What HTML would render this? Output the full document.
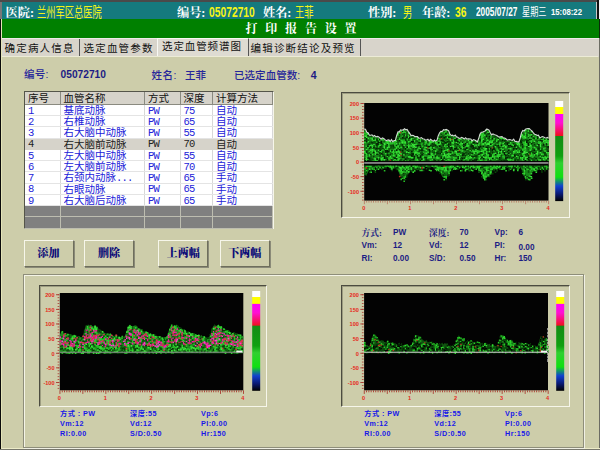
<!DOCTYPE html><html lang="zh"><head><meta charset="utf-8"><title>打印报告设置</title><style>
*{margin:0;padding:0;box-sizing:border-box}
html,body{width:600px;height:450px;overflow:hidden;background:#cdcdaa;}
body{position:relative;font-family:"Liberation Sans","Noto Sans CJK SC",sans-serif;font-size:10.5px;line-height:1}
.a{position:absolute;white-space:nowrap}
.song{font-family:"Liberation Serif","Noto Serif CJK SC",serif}
.sans{font-family:"Liberation Sans","Noto Sans CJK SC",sans-serif}
.w{color:#fff} .y{color:#f4f416}
.tb{font-weight:bold;font-size:12.2px;top:5.5px;height:14px;line-height:14px}
.tab{top:40px;height:17px;line-height:16px;font-size:10.5px;color:#111;letter-spacing:1.2px}
.sep{position:absolute;top:39px;width:1px;height:17px;background:#555}
.nv{color:#1c1c84;font-weight:bold;font-size:8.2px}
.nv .song,.nv.song{font-weight:700;font-size:8.7px}
.bl{color:#1818e8;font-weight:bold;font-size:7.2px;letter-spacing:.45px}
.btn{position:absolute;top:239.6px;height:27px;width:50px;background:#cdcdaa;border:1px solid;border-color:#f6f6ea #6e6e5c #6e6e5c #f6f6ea;box-shadow:1px 1px 0 #8a8a78;color:#0c0c78;font-weight:900;font-size:11px;text-align:center;line-height:25.6px}
.sunk{position:absolute;border:1px solid;border-color:#4c4c40 #f6f6ea #f6f6ea #4c4c40;background:#cdcdaa;box-shadow:inset 1px 1px 0 rgba(70,70,55,.35)}
table{border-collapse:collapse;position:absolute;left:25px;top:91.75px;table-layout:fixed;width:247px;font-size:10.5px}
td{height:11.25px;line-height:10px;padding:0 0 0 3px;border-right:1px solid #d8d8d8;border-bottom:1px solid #e4e4e4;color:#2222d8;background:#fff;overflow:hidden;white-space:nowrap}
.c{height:10.1px;line-height:11.4px;overflow:hidden}
span.m{font-family:"Liberation Mono","Noto Sans CJK SC",monospace;font-size:10.5px;letter-spacing:-0.8px;position:relative;top:-0.2px}
tr.h td{background:#d6d3ca;color:#111;height:12.5px;border-right:1px solid #8a8a80;border-bottom:1px solid #8a8a80}
tr.s td{background:#d6d3ca;color:#222;border-color:#d6d3ca}
tr.e td{background:#808080;border-color:#bdbdb0}
</style></head><body><div class="a" style="left:0;top:0;width:600px;height:2.4px;background:#4a4a4a"></div>
<div class="a" style="left:2.3px;top:2.4px;width:593.5px;height:16.8px;background:#157a7e"></div>
<div class="a" style="left:0;top:2.4px;width:2.3px;height:16.8px;background:#777"></div>
<div class="a" style="left:595.8px;top:2.4px;width:1.6px;height:16.8px;background:#c8c8c8"></div>
<div class="a" style="left:0;top:19.2px;width:600px;height:18.5px;background:#008000"></div>
<div class="a" style="left:0;top:37.7px;width:600px;height:19px;background:#d8d4cb;border-top:1.6px solid #eeeaea"></div>
<div class="a" style="left:0;top:19.2px;width:1.1px;height:431px;background:#0a0a0a"></div>
<div class="a" style="left:1.1px;top:19.2px;width:1px;height:431px;background:#e4e4b8"></div>
<div class="a" style="left:597.4px;top:0;width:1.7px;height:19.2px;background:#111"></div>
<div class="a" style="left:599.1px;top:0;width:1px;height:19.2px;background:#f4f4f4"></div>
<div class="a" style="left:598.7px;top:19.2px;width:1.3px;height:18.5px;background:#0a2a0a"></div>
<div class="a" style="left:598.6px;top:37.7px;width:.6px;height:19px;background:#f4f4f4"></div>
<div class="a" style="left:599.1px;top:37.7px;width:1px;height:413px;background:#6c6c64"></div>
<div class="a" style="left:2px;top:448px;width:598px;height:1px;background:#ecebc8"></div>
<div class="a" style="left:0;top:449px;width:600px;height:1px;background:#77776c"></div>
<div class="a tb song w" style="left:5.6px;">医院:</div>
<div class="a tb y sans" style="left:37px;transform:scaleX(.662);transform-origin:0 50%;font-weight:normal;font-size:14px;top:5px;">兰州军区总医院</div>
<div class="a tb song w" style="left:177px;">编号:</div>
<div class="a tb y" style="left:209px;transform:scaleX(.71);transform-origin:0 50%;font-size:14.5px;top:4.6px">05072710</div>
<div class="a tb song w" style="left:263px;">姓名:</div>
<div class="a tb y sans" style="left:294.5px;transform:scaleX(.662);transform-origin:0 50%;font-weight:normal;font-size:14px;top:5px;">王菲</div>
<div class="a tb song w" style="left:368px;">性别:</div>
<div class="a tb y sans" style="left:402.5px;transform:scaleX(.662);transform-origin:0 50%;font-weight:normal;font-size:14px;top:5px;">男</div>
<div class="a tb song w" style="left:422px;">年龄:</div>
<div class="a tb y" style="left:455px;transform:scaleX(.71);transform-origin:0 50%;font-size:14.5px;top:4.6px">36</div>
<div class="a tb w" style="left:476px;font-size:12px;transform:scaleX(.69);transform-origin:0 50%;top:5px;">2005/07/27</div>
<div class="a tb w sans" style="left:521.5px;font-size:11px;font-weight:400;transform:scaleX(.74);transform-origin:0 50%;top:5.2px;">星期三</div>
<div class="a tb w" style="left:551.3px;font-size:8.6px;top:5px;transform:scaleX(.9);transform-origin:0 50%">15:08:22</div>
<div class="a song w" style="left:245.5px;top:21.5px;font-weight:bold;font-size:12px;height:14px;line-height:14px;letter-spacing:2.4px">打 印 报 告 设 置</div>
<div class="a tab" style="left:4.5px;">确定病人信息</div>
<div class="sep" style="left:79px"></div>
<div class="a tab" style="left:83.5px;">选定血管参数</div>
<div class="a" style="left:157px;top:38px;width:91.5px;height:19px;background:#dedbd2;border-left:1px solid #f8f8f4;border-top:1px solid #f8f8f4;border-right:1.3px solid #555"></div>
<div class="a tab" style="left:162px;top:38px;letter-spacing:.9px">选定血管频谱图</div>
<div class="a tab" style="left:250.5px;">编辑诊断结论及预览</div>
<div class="sep" style="left:360px"></div>
<div class="a" style="left:2px;top:56px;width:596px;height:1.2px;background:#ecebd6"></div>
<div class="a nv" style="left:24px;top:69px;font-weight:500;color:#26269a;font-size:10.5px;letter-spacing:.3px">编号:</div>
<div class="a nv" style="left:60.6px;top:69.5px;font-size:10.2px">05072710</div>
<div class="a nv" style="left:151.5px;top:69.5px;font-weight:500;color:#26269a;font-size:10.5px;letter-spacing:.5px">姓名:</div>
<div class="a nv" style="left:185px;top:69.5px;font-weight:500;color:#26269a;font-size:10.5px">王菲</div>
<div class="a nv" style="left:234px;top:69.5px;font-weight:500;color:#26269a;font-size:10.5px;letter-spacing:.05px">已选定血管数:</div>
<div class="a nv" style="left:310.8px;top:70px;font-size:10.5px">4</div>
<div class="sunk" style="left:24px;top:91px;width:249.5px;height:137.5px;background:#fff;border-color:#55554a #f6f6ea #f6f6ea #55554a"></div>
<table><colgroup><col style="width:35px"><col style="width:84.5px"><col style="width:35.5px"><col style="width:32.5px"><col style="width:59.5px"></colgroup><tr class="h"><td>序号</td><td>血管名称</td><td>方式</td><td>深度</td><td>计算方法</td></tr><tr><td><div class="c"><span class="m">1</span></div></td><td><div class="c">基底动脉</div></td><td><div class="c"><span class="m">PW</span></div></td><td><div class="c"><span class="m">75</span></div></td><td><div class="c">自动</div></td></tr><tr><td><div class="c"><span class="m">2</span></div></td><td><div class="c">右椎动脉</div></td><td><div class="c"><span class="m">PW</span></div></td><td><div class="c"><span class="m">65</span></div></td><td><div class="c">自动</div></td></tr><tr><td><div class="c"><span class="m">3</span></div></td><td><div class="c">右大脑中动脉</div></td><td><div class="c"><span class="m">PW</span></div></td><td><div class="c"><span class="m">55</span></div></td><td><div class="c">自动</div></td></tr><tr class="s"><td><div class="c"><span class="m">4</span></div></td><td><div class="c">右大脑前动脉</div></td><td><div class="c"><span class="m">PW</span></div></td><td><div class="c"><span class="m">70</span></div></td><td><div class="c">自动</div></td></tr><tr><td><div class="c"><span class="m">5</span></div></td><td><div class="c">左大脑中动脉</div></td><td><div class="c"><span class="m">PW</span></div></td><td><div class="c"><span class="m">55</span></div></td><td><div class="c">自动</div></td></tr><tr><td><div class="c"><span class="m">6</span></div></td><td><div class="c">左大脑前动脉</div></td><td><div class="c"><span class="m">PW</span></div></td><td><div class="c"><span class="m">70</span></div></td><td><div class="c">自动</div></td></tr><tr><td><div class="c"><span class="m">7</span></div></td><td><div class="c">右颈内动脉<span class="m">...</span></div></td><td><div class="c"><span class="m">PW</span></div></td><td><div class="c"><span class="m">65</span></div></td><td><div class="c">手动</div></td></tr><tr><td><div class="c"><span class="m">8</span></div></td><td><div class="c">右眼动脉</div></td><td><div class="c"><span class="m">PW</span></div></td><td><div class="c"><span class="m">65</span></div></td><td><div class="c">手动</div></td></tr><tr><td><div class="c"><span class="m">9</span></div></td><td><div class="c">右大脑后动脉</div></td><td><div class="c"><span class="m">PW</span></div></td><td><div class="c"><span class="m">65</span></div></td><td><div class="c">手动</div></td></tr><tr class="e"><td></td><td></td><td></td><td></td><td></td></tr><tr class="e"><td></td><td></td><td></td><td></td><td></td></tr></table>
<div class="btn song" style="left:23.5px">添加</div>
<div class="btn song" style="left:84px">删除</div>
<div class="btn song" style="left:158.2px">上两幅</div>
<div class="btn song" style="left:219.7px">下两幅</div>
<div class="a" style="left:23.2px;top:274px;width:560.8px;height:174.2px;border:1px solid #8e8e7a;box-shadow:inset 1px 1px 0 #f4f4e6, 1px 1px 0 #f0f0e4"></div>
<div class="sunk" style="left:341px;top:92px;width:228.7px;height:125.6px"></div><svg class="a" style="left:341px;top:92px" width="230" height="127" viewBox="341 92 230 127"><rect x="364.2" y="103" width="184.3" height="97.6" fill="#030303"/><polygon points="364.2,162 364.2,129.7 365.5,129.8 366.8,132.9 368.1,133.3 369.4,135.8 370.7,135.8 372.0,135.4 373.3,136.9 374.6,136.1 375.9,137.5 377.2,137.0 378.5,137.4 379.8,138.5 381.1,139.8 382.4,138.5 383.7,139.0 385.0,140.3 386.3,141.3 387.6,140.7 388.9,140.5 390.2,142.1 391.5,140.1 392.8,142.3 394.1,141.1 395.4,141.0 396.7,136.0 398.0,132.5 399.3,132.5 400.6,130.4 401.9,130.8 403.2,130.5 404.5,129.4 405.8,130.4 407.1,130.0 408.4,132.2 409.7,134.0 411.0,136.2 412.3,136.0 413.6,136.1 414.9,137.2 416.2,137.2 417.5,137.2 418.8,138.8 420.1,138.9 421.4,138.2 422.7,139.3 424.0,139.5 425.3,140.6 426.6,140.6 427.9,139.8 429.2,141.7 430.5,139.9 431.8,140.8 433.1,141.9 434.4,140.6 435.7,141.7 437.0,140.8 438.3,136.3 439.6,133.4 440.9,131.9 442.2,132.1 443.5,130.2 444.8,130.6 446.1,130.0 447.4,130.7 448.7,131.5 450.0,134.7 451.3,136.1 452.6,135.8 453.9,136.7 455.2,135.6 456.5,137.5 457.8,137.8 459.1,139.0 460.4,138.9 461.7,138.0 463.0,138.6 464.3,139.6 465.6,138.3 466.9,139.7 468.2,139.3 469.5,139.5 470.8,139.6 472.1,141.5 473.4,140.2 474.7,140.7 476.0,141.3 477.3,142.6 478.6,139.4 479.9,134.9 481.2,132.9 482.5,132.8 483.8,132.1 485.1,131.7 486.4,129.8 487.7,130.0 489.0,130.7 490.3,133.3 491.6,135.5 492.9,134.6 494.2,135.2 495.5,135.7 496.8,136.1 498.1,137.1 499.4,137.7 500.7,137.3 502.0,137.1 503.3,138.4 504.6,138.7 505.9,139.4 507.2,140.7 508.5,140.3 509.8,140.2 511.1,140.7 512.4,141.1 513.7,139.8 515.0,142.1 516.3,142.0 517.6,142.5 518.9,142.5 520.2,138.6 521.5,133.4 522.8,131.1 524.1,131.7 525.4,129.7 526.7,129.3 528.0,129.1 529.3,129.2 530.6,130.4 531.9,131.5 533.2,133.2 534.5,134.8 535.8,135.1 537.1,136.1 538.4,135.7 539.7,138.1 541.0,137.8 542.3,137.1 543.6,137.7 544.9,138.3 546.2,138.6 547.5,138.0 548.5,139.0 548.5,162" fill="#1a841a"/><polygon points="364.2,165.3 364.2,175.0 365.5,174.8 366.8,174.4 368.1,172.0 369.4,169.0 370.7,169.6 372.0,169.4 373.3,168.6 374.6,168.5 375.9,167.1 377.2,167.7 378.5,168.6 379.8,167.4 381.1,166.6 382.4,168.6 383.7,167.0 385.0,167.7 386.3,167.3 387.6,166.2 388.9,167.8 390.2,168.3 391.5,168.2 392.8,166.7 394.1,167.0 395.4,167.6 396.7,169.0 398.0,170.4 399.3,173.6 400.6,177.0 401.9,176.4 403.2,177.7 404.5,178.7 405.8,177.3 407.1,174.5 408.4,173.6 409.7,171.7 411.0,168.4 412.3,169.7 413.6,167.5 414.9,169.2 416.2,169.0 417.5,167.8 418.8,168.9 420.1,167.2 421.4,166.9 422.7,167.6 424.0,166.3 425.3,166.7 426.6,167.1 427.9,166.7 429.2,166.9 430.5,167.4 431.8,166.3 433.1,167.4 434.4,167.8 435.7,167.6 437.0,166.3 438.3,169.4 439.6,172.0 440.9,173.8 442.2,176.6 443.5,177.8 444.8,178.0 446.1,177.3 447.4,175.0 448.7,174.2 450.0,171.5 451.3,169.4 452.6,168.1 453.9,169.0 455.2,168.7 456.5,168.2 457.8,168.3 459.1,167.4 460.4,167.8 461.7,167.1 463.0,166.6 464.3,168.6 465.6,168.1 466.9,168.1 468.2,168.2 469.5,167.2 470.8,166.7 472.1,166.5 473.4,167.8 474.7,168.0 476.0,168.3 477.3,166.9 478.6,168.5 479.9,169.8 481.2,173.0 482.5,174.3 483.8,177.0 485.1,177.4 486.4,178.4 487.7,176.5 489.0,177.2 490.3,174.6 491.6,173.1 492.9,168.9 494.2,169.8 495.5,169.6 496.8,168.2 498.1,168.1 499.4,168.8 500.7,167.3 502.0,167.0 503.3,168.1 504.6,168.4 505.9,167.6 507.2,166.6 508.5,167.3 509.8,167.5 511.1,167.7 512.4,167.8 513.7,167.8 515.0,168.5 516.3,166.2 517.6,168.1 518.9,166.9 520.2,167.1 521.5,169.5 522.8,172.0 524.1,174.3 525.4,176.4 526.7,178.0 528.0,177.8 529.3,176.2 530.6,174.7 531.9,172.7 533.2,171.8 534.5,168.5 535.8,168.9 537.1,170.0 538.4,169.5 539.7,168.9 541.0,167.9 542.3,167.0 543.6,167.5 544.9,167.7 546.2,167.9 547.5,168.2 548.5,168.0 548.5,165.3" fill="#1a8a1a"/><path fill="#2ad02a" d="M364.1 132.5h1.6v1.6h-1.6zM365.9 135.1h1.6v1.6h-1.6zM365.8 153.1h1.6v1.6h-1.6zM365.9 156.0h1.6v1.6h-1.6zM365.9 160.2h1.6v1.6h-1.6zM368.8 146.0h1.6v1.6h-1.6zM370.3 137.2h1.6v1.6h-1.6zM372.9 139.8h1.6v1.6h-1.6zM373.4 148.8h1.6v1.6h-1.6zM374.6 139.7h1.6v1.6h-1.6zM376.2 141.5h1.6v1.6h-1.6zM378.0 138.7h1.6v1.6h-1.6zM377.8 146.1h1.6v1.6h-1.6zM381.0 151.5h1.6v1.6h-1.6zM385.5 140.9h1.6v1.6h-1.6zM386.9 156.0h1.6v1.6h-1.6zM389.5 156.9h1.6v1.6h-1.6zM391.4 151.1h1.6v1.6h-1.6zM391.3 154.0h1.6v1.6h-1.6zM390.9 157.4h1.6v1.6h-1.6zM392.8 142.0h1.6v1.6h-1.6zM392.9 149.3h1.6v1.6h-1.6zM394.0 145.4h1.6v1.6h-1.6zM397.3 149.4h1.6v1.6h-1.6zM397.2 155.2h1.6v1.6h-1.6zM397.0 156.7h1.6v1.6h-1.6zM398.8 142.8h1.6v1.6h-1.6zM398.8 158.0h1.6v1.6h-1.6zM400.3 133.5h1.6v1.6h-1.6zM401.8 135.4h1.6v1.6h-1.6zM403.2 140.6h1.6v1.6h-1.6zM403.2 158.6h1.6v1.6h-1.6zM404.8 131.5h1.6v1.6h-1.6zM404.8 134.4h1.6v1.6h-1.6zM404.5 160.2h1.6v1.6h-1.6zM406.2 138.9h1.6v1.6h-1.6zM407.4 144.0h1.6v1.6h-1.6zM408.9 155.6h1.6v1.6h-1.6zM412.2 137.7h1.6v1.6h-1.6zM412.3 146.6h1.6v1.6h-1.6zM413.5 141.0h1.6v1.6h-1.6zM413.8 151.8h1.6v1.6h-1.6zM415.1 150.8h1.6v1.6h-1.6zM415.4 155.1h1.6v1.6h-1.6zM415.3 159.4h1.6v1.6h-1.6zM416.6 137.1h1.6v1.6h-1.6zM416.6 152.1h1.6v1.6h-1.6zM416.9 158.5h1.6v1.6h-1.6zM421.3 156.5h1.6v1.6h-1.6zM420.9 161.3h1.6v1.6h-1.6zM422.5 151.6h1.6v1.6h-1.6zM424.2 155.4h1.6v1.6h-1.6zM428.9 141.7h1.6v1.6h-1.6zM428.8 143.3h1.6v1.6h-1.6zM428.5 154.8h1.6v1.6h-1.6zM430.1 147.5h1.6v1.6h-1.6zM430.0 159.7h1.6v1.6h-1.6zM431.9 141.2h1.6v1.6h-1.6zM433.4 141.2h1.6v1.6h-1.6zM434.6 161.1h1.6v1.6h-1.6zM436.3 148.6h1.6v1.6h-1.6zM438.0 143.5h1.6v1.6h-1.6zM442.5 154.7h1.6v1.6h-1.6zM442.2 156.6h1.6v1.6h-1.6zM443.5 145.3h1.6v1.6h-1.6zM445.4 129.9h1.6v1.6h-1.6zM445.2 134.6h1.6v1.6h-1.6zM445.1 146.6h1.6v1.6h-1.6zM445.0 149.7h1.6v1.6h-1.6zM445.4 159.9h1.6v1.6h-1.6zM446.8 142.9h1.6v1.6h-1.6zM446.6 150.4h1.6v1.6h-1.6zM451.2 152.4h1.6v1.6h-1.6zM451.0 160.2h1.6v1.6h-1.6zM452.7 147.1h1.6v1.6h-1.6zM452.9 157.0h1.6v1.6h-1.6zM452.8 160.3h1.6v1.6h-1.6zM454.1 159.7h1.6v1.6h-1.6zM455.8 152.6h1.6v1.6h-1.6zM455.7 154.2h1.6v1.6h-1.6zM457.3 147.0h1.6v1.6h-1.6zM457.4 149.7h1.6v1.6h-1.6zM458.6 139.2h1.6v1.6h-1.6zM458.8 143.7h1.6v1.6h-1.6zM458.5 148.1h1.6v1.6h-1.6zM460.1 141.3h1.6v1.6h-1.6zM460.0 144.4h1.6v1.6h-1.6zM463.4 158.8h1.6v1.6h-1.6zM463.0 160.4h1.6v1.6h-1.6zM464.8 141.5h1.6v1.6h-1.6zM466.5 148.8h1.6v1.6h-1.6zM467.9 154.5h1.6v1.6h-1.6zM472.0 149.5h1.6v1.6h-1.6zM475.2 153.4h1.6v1.6h-1.6zM478.3 150.4h1.6v1.6h-1.6zM478.5 151.9h1.6v1.6h-1.6zM479.6 156.7h1.6v1.6h-1.6zM481.0 132.7h1.6v1.6h-1.6zM481.1 159.8h1.6v1.6h-1.6zM482.8 147.2h1.6v1.6h-1.6zM482.7 152.1h1.6v1.6h-1.6zM484.2 149.6h1.6v1.6h-1.6zM484.5 160.2h1.6v1.6h-1.6zM485.6 137.4h1.6v1.6h-1.6zM485.8 159.5h1.6v1.6h-1.6zM487.5 157.1h1.6v1.6h-1.6zM488.8 148.0h1.6v1.6h-1.6zM490.2 135.7h1.6v1.6h-1.6zM490.0 140.2h1.6v1.6h-1.6zM490.2 156.9h1.6v1.6h-1.6zM492.0 139.7h1.6v1.6h-1.6zM493.3 155.9h1.6v1.6h-1.6zM493.5 157.3h1.6v1.6h-1.6zM494.5 155.2h1.6v1.6h-1.6zM497.5 149.4h1.6v1.6h-1.6zM499.2 137.5h1.6v1.6h-1.6zM499.1 155.5h1.6v1.6h-1.6zM500.6 147.9h1.6v1.6h-1.6zM502.2 155.9h1.6v1.6h-1.6zM508.1 147.6h1.6v1.6h-1.6zM509.7 152.7h1.6v1.6h-1.6zM512.5 154.9h1.6v1.6h-1.6zM515.8 142.2h1.6v1.6h-1.6zM515.6 149.8h1.6v1.6h-1.6zM517.1 157.4h1.6v1.6h-1.6zM518.5 145.4h1.6v1.6h-1.6zM519.9 158.1h1.6v1.6h-1.6zM521.7 152.8h1.6v1.6h-1.6zM523.2 148.1h1.6v1.6h-1.6zM524.6 134.3h1.6v1.6h-1.6zM525.0 140.4h1.6v1.6h-1.6zM524.8 143.0h1.6v1.6h-1.6zM524.5 144.5h1.6v1.6h-1.6zM524.8 146.4h1.6v1.6h-1.6zM527.9 133.7h1.6v1.6h-1.6zM527.6 153.0h1.6v1.6h-1.6zM529.3 140.2h1.6v1.6h-1.6zM529.3 143.3h1.6v1.6h-1.6zM529.1 146.2h1.6v1.6h-1.6zM530.5 141.8h1.6v1.6h-1.6zM530.7 147.8h1.6v1.6h-1.6zM530.8 152.2h1.6v1.6h-1.6zM530.9 153.6h1.6v1.6h-1.6zM531.0 155.0h1.6v1.6h-1.6zM532.1 139.0h1.6v1.6h-1.6zM533.6 138.9h1.6v1.6h-1.6zM536.5 153.9h1.6v1.6h-1.6zM539.9 142.7h1.6v1.6h-1.6zM539.6 148.5h1.6v1.6h-1.6zM539.9 160.3h1.6v1.6h-1.6zM541.0 138.7h1.6v1.6h-1.6zM542.8 148.0h1.6v1.6h-1.6zM542.6 157.0h1.6v1.6h-1.6zM545.8 156.7h1.6v1.6h-1.6zM547.5 139.6h1.6v1.6h-1.6zM547.2 144.4h1.6v1.6h-1.6zM546.9 156.2h1.6v1.6h-1.6zM365.4 169.7h1.6v1.6h-1.6zM368.4 165.4h1.6v1.6h-1.6zM373.3 168.4h1.6v1.6h-1.6zM376.2 167.0h1.6v1.6h-1.6zM377.8 165.3h1.6v1.6h-1.6zM382.4 166.8h1.6v1.6h-1.6zM386.6 165.0h1.6v1.6h-1.6zM400.1 171.1h1.6v1.6h-1.6zM403.4 177.6h1.6v1.6h-1.6zM405.0 171.0h1.6v1.6h-1.6zM407.8 166.6h1.6v1.6h-1.6zM413.5 165.0h1.6v1.6h-1.6zM413.9 170.1h1.6v1.6h-1.6zM416.9 165.2h1.6v1.6h-1.6zM428.7 169.5h1.6v1.6h-1.6zM435.9 169.6h1.6v1.6h-1.6zM437.6 166.8h1.6v1.6h-1.6zM437.6 168.3h1.6v1.6h-1.6zM440.7 167.1h1.6v1.6h-1.6zM440.9 171.5h1.6v1.6h-1.6zM443.4 178.9h1.6v1.6h-1.6zM448.5 167.0h1.6v1.6h-1.6zM448.3 172.8h1.6v1.6h-1.6zM449.4 166.5h1.6v1.6h-1.6zM449.4 169.6h1.6v1.6h-1.6zM451.0 165.0h1.6v1.6h-1.6zM464.8 168.6h1.6v1.6h-1.6zM466.1 168.3h1.6v1.6h-1.6zM472.4 166.8h1.6v1.6h-1.6zM476.5 165.4h1.6v1.6h-1.6zM478.2 165.4h1.6v1.6h-1.6zM478.3 169.7h1.6v1.6h-1.6zM479.7 165.1h1.6v1.6h-1.6zM481.0 173.0h1.6v1.6h-1.6zM482.7 175.6h1.6v1.6h-1.6zM484.1 166.5h1.6v1.6h-1.6zM484.4 175.8h1.6v1.6h-1.6zM485.9 166.8h1.6v1.6h-1.6zM485.8 170.0h1.6v1.6h-1.6zM487.4 169.9h1.6v1.6h-1.6zM490.0 165.5h1.6v1.6h-1.6zM493.1 166.6h1.6v1.6h-1.6zM495.0 166.7h1.6v1.6h-1.6zM496.0 168.0h1.6v1.6h-1.6zM503.9 166.7h1.6v1.6h-1.6zM513.0 168.6h1.6v1.6h-1.6zM514.2 165.0h1.6v1.6h-1.6zM517.2 168.2h1.6v1.6h-1.6zM523.4 171.1h1.6v1.6h-1.6zM523.5 174.2h1.6v1.6h-1.6zM524.9 167.1h1.6v1.6h-1.6zM526.5 177.0h1.6v1.6h-1.6zM527.7 178.6h1.6v1.6h-1.6zM529.4 166.7h1.6v1.6h-1.6zM529.0 169.9h1.6v1.6h-1.6zM529.0 178.9h1.6v1.6h-1.6zM532.5 168.0h1.6v1.6h-1.6zM533.6 169.7h1.6v1.6h-1.6zM539.7 168.5h1.6v1.6h-1.6zM544.1 165.4h1.6v1.6h-1.6z"/><path fill="#25c025" d="M364.2 134.4h1.6v1.6h-1.6zM365.9 133.2h1.6v1.6h-1.6zM365.5 145.5h1.6v1.6h-1.6zM367.1 158.9h1.6v1.6h-1.6zM368.6 144.8h1.6v1.6h-1.6zM368.5 151.0h1.6v1.6h-1.6zM368.8 153.5h1.6v1.6h-1.6zM370.3 152.3h1.6v1.6h-1.6zM373.5 150.3h1.6v1.6h-1.6zM373.5 157.3h1.6v1.6h-1.6zM374.6 145.7h1.6v1.6h-1.6zM378.0 144.9h1.6v1.6h-1.6zM379.0 143.2h1.6v1.6h-1.6zM385.1 142.2h1.6v1.6h-1.6zM385.3 143.9h1.6v1.6h-1.6zM388.1 152.3h1.6v1.6h-1.6zM388.5 157.0h1.6v1.6h-1.6zM389.6 142.1h1.6v1.6h-1.6zM389.6 143.1h1.6v1.6h-1.6zM392.9 153.7h1.6v1.6h-1.6zM394.0 142.8h1.6v1.6h-1.6zM394.1 151.5h1.6v1.6h-1.6zM394.4 154.6h1.6v1.6h-1.6zM394.3 155.8h1.6v1.6h-1.6zM395.5 159.6h1.6v1.6h-1.6zM398.6 147.3h1.6v1.6h-1.6zM401.9 139.4h1.6v1.6h-1.6zM401.5 142.8h1.6v1.6h-1.6zM404.6 140.6h1.6v1.6h-1.6zM404.8 146.9h1.6v1.6h-1.6zM406.1 148.1h1.6v1.6h-1.6zM407.5 160.5h1.6v1.6h-1.6zM409.1 138.7h1.6v1.6h-1.6zM409.2 140.4h1.6v1.6h-1.6zM409.0 145.0h1.6v1.6h-1.6zM409.5 148.1h1.6v1.6h-1.6zM410.6 142.4h1.6v1.6h-1.6zM412.4 151.3h1.6v1.6h-1.6zM413.5 150.0h1.6v1.6h-1.6zM415.1 158.1h1.6v1.6h-1.6zM416.7 153.4h1.6v1.6h-1.6zM421.2 143.1h1.6v1.6h-1.6zM421.0 144.3h1.6v1.6h-1.6zM421.4 146.0h1.6v1.6h-1.6zM422.5 157.5h1.6v1.6h-1.6zM424.5 140.0h1.6v1.6h-1.6zM424.4 142.0h1.6v1.6h-1.6zM424.3 152.4h1.6v1.6h-1.6zM427.5 144.3h1.6v1.6h-1.6zM427.3 150.1h1.6v1.6h-1.6zM427.1 157.9h1.6v1.6h-1.6zM430.0 149.0h1.6v1.6h-1.6zM431.5 149.0h1.6v1.6h-1.6zM433.1 154.5h1.6v1.6h-1.6zM434.4 153.3h1.6v1.6h-1.6zM439.4 157.1h1.6v1.6h-1.6zM441.0 131.7h1.6v1.6h-1.6zM442.1 141.4h1.6v1.6h-1.6zM443.8 158.8h1.6v1.6h-1.6zM445.3 131.5h1.6v1.6h-1.6zM446.9 159.3h1.6v1.6h-1.6zM448.3 133.4h1.6v1.6h-1.6zM448.3 138.1h1.6v1.6h-1.6zM448.2 148.2h1.6v1.6h-1.6zM448.3 160.3h1.6v1.6h-1.6zM454.3 158.1h1.6v1.6h-1.6zM457.5 139.2h1.6v1.6h-1.6zM457.2 152.6h1.6v1.6h-1.6zM458.6 140.5h1.6v1.6h-1.6zM458.9 152.6h1.6v1.6h-1.6zM458.5 155.6h1.6v1.6h-1.6zM460.5 146.1h1.6v1.6h-1.6zM467.9 157.0h1.6v1.6h-1.6zM467.5 159.1h1.6v1.6h-1.6zM469.1 142.5h1.6v1.6h-1.6zM470.5 150.8h1.6v1.6h-1.6zM472.2 153.9h1.6v1.6h-1.6zM476.9 150.0h1.6v1.6h-1.6zM476.9 153.2h1.6v1.6h-1.6zM478.4 142.7h1.6v1.6h-1.6zM478.4 156.4h1.6v1.6h-1.6zM478.3 159.1h1.6v1.6h-1.6zM479.5 150.8h1.6v1.6h-1.6zM481.0 141.6h1.6v1.6h-1.6zM481.4 143.5h1.6v1.6h-1.6zM481.0 149.1h1.6v1.6h-1.6zM481.4 155.1h1.6v1.6h-1.6zM482.7 132.5h1.6v1.6h-1.6zM482.8 133.6h1.6v1.6h-1.6zM482.5 135.5h1.6v1.6h-1.6zM482.9 153.2h1.6v1.6h-1.6zM482.5 161.0h1.6v1.6h-1.6zM485.8 140.2h1.6v1.6h-1.6zM485.5 155.5h1.6v1.6h-1.6zM487.4 155.6h1.6v1.6h-1.6zM488.9 156.8h1.6v1.6h-1.6zM491.9 158.7h1.6v1.6h-1.6zM493.3 142.5h1.6v1.6h-1.6zM493.0 150.1h1.6v1.6h-1.6zM496.1 143.7h1.6v1.6h-1.6zM496.2 148.5h1.6v1.6h-1.6zM496.2 149.9h1.6v1.6h-1.6zM498.0 150.7h1.6v1.6h-1.6zM502.2 152.8h1.6v1.6h-1.6zM503.8 141.7h1.6v1.6h-1.6zM503.5 155.2h1.6v1.6h-1.6zM503.6 156.9h1.6v1.6h-1.6zM508.1 158.3h1.6v1.6h-1.6zM509.7 143.6h1.6v1.6h-1.6zM509.7 159.6h1.6v1.6h-1.6zM512.5 157.9h1.6v1.6h-1.6zM514.0 149.5h1.6v1.6h-1.6zM516.9 148.4h1.6v1.6h-1.6zM518.9 142.3h1.6v1.6h-1.6zM518.9 150.0h1.6v1.6h-1.6zM520.1 146.3h1.6v1.6h-1.6zM521.6 133.4h1.6v1.6h-1.6zM522.0 136.3h1.6v1.6h-1.6zM522.0 149.7h1.6v1.6h-1.6zM523.1 137.4h1.6v1.6h-1.6zM522.9 142.1h1.6v1.6h-1.6zM523.5 146.8h1.6v1.6h-1.6zM524.4 135.9h1.6v1.6h-1.6zM524.4 149.5h1.6v1.6h-1.6zM524.8 150.4h1.6v1.6h-1.6zM525.9 142.6h1.6v1.6h-1.6zM527.9 129.0h1.6v1.6h-1.6zM527.6 160.8h1.6v1.6h-1.6zM530.6 144.4h1.6v1.6h-1.6zM530.5 146.1h1.6v1.6h-1.6zM532.2 155.4h1.6v1.6h-1.6zM532.2 156.9h1.6v1.6h-1.6zM535.4 136.6h1.6v1.6h-1.6zM538.3 136.8h1.6v1.6h-1.6zM542.6 154.0h1.6v1.6h-1.6zM545.6 139.8h1.6v1.6h-1.6zM364.0 168.4h1.6v1.6h-1.6zM365.5 165.4h1.6v1.6h-1.6zM367.0 165.5h1.6v1.6h-1.6zM374.5 169.7h1.6v1.6h-1.6zM383.8 169.9h1.6v1.6h-1.6zM384.9 165.2h1.6v1.6h-1.6zM387.9 165.3h1.6v1.6h-1.6zM389.8 166.9h1.6v1.6h-1.6zM392.5 165.5h1.6v1.6h-1.6zM392.7 167.0h1.6v1.6h-1.6zM400.4 178.6h1.6v1.6h-1.6zM401.6 166.5h1.6v1.6h-1.6zM401.7 177.5h1.6v1.6h-1.6zM403.3 171.1h1.6v1.6h-1.6zM403.4 180.4h1.6v1.6h-1.6zM404.7 176.1h1.6v1.6h-1.6zM406.1 165.6h1.6v1.6h-1.6zM419.4 169.6h1.6v1.6h-1.6zM425.9 165.0h1.6v1.6h-1.6zM436.1 165.2h1.6v1.6h-1.6zM438.9 167.1h1.6v1.6h-1.6zM440.4 168.3h1.6v1.6h-1.6zM443.8 176.0h1.6v1.6h-1.6zM445.4 176.0h1.6v1.6h-1.6zM445.4 177.5h1.6v1.6h-1.6zM448.0 171.2h1.6v1.6h-1.6zM450.9 166.5h1.6v1.6h-1.6zM452.9 168.4h1.6v1.6h-1.6zM458.6 167.0h1.6v1.6h-1.6zM467.4 168.2h1.6v1.6h-1.6zM478.1 168.5h1.6v1.6h-1.6zM484.3 174.2h1.6v1.6h-1.6zM487.2 166.9h1.6v1.6h-1.6zM489.9 173.0h1.6v1.6h-1.6zM491.7 166.6h1.6v1.6h-1.6zM491.5 168.3h1.6v1.6h-1.6zM500.4 168.5h1.6v1.6h-1.6zM502.0 168.4h1.6v1.6h-1.6zM508.3 165.6h1.6v1.6h-1.6zM509.9 165.3h1.6v1.6h-1.6zM509.8 168.5h1.6v1.6h-1.6zM511.1 167.0h1.6v1.6h-1.6zM515.9 166.6h1.6v1.6h-1.6zM518.4 166.9h1.6v1.6h-1.6zM522.0 172.7h1.6v1.6h-1.6zM525.0 177.6h1.6v1.6h-1.6zM527.9 168.5h1.6v1.6h-1.6zM529.1 165.2h1.6v1.6h-1.6zM531.0 166.6h1.6v1.6h-1.6zM530.6 168.3h1.6v1.6h-1.6zM536.7 168.2h1.6v1.6h-1.6zM542.7 168.3h1.6v1.6h-1.6zM545.8 165.3h1.6v1.6h-1.6zM545.8 167.1h1.6v1.6h-1.6zM545.7 168.2h1.6v1.6h-1.6z"/><path fill="#3ce83c" d="M364.5 135.8h1.6v1.6h-1.6zM364.0 150.8h1.6v1.6h-1.6zM365.7 136.5h1.6v1.6h-1.6zM365.9 148.3h1.6v1.6h-1.6zM365.5 157.4h1.6v1.6h-1.6zM367.0 133.0h1.6v1.6h-1.6zM367.3 141.0h1.6v1.6h-1.6zM367.3 146.9h1.6v1.6h-1.6zM370.1 144.6h1.6v1.6h-1.6zM371.5 149.1h1.6v1.6h-1.6zM374.5 150.3h1.6v1.6h-1.6zM374.9 152.1h1.6v1.6h-1.6zM374.8 159.3h1.6v1.6h-1.6zM376.0 152.3h1.6v1.6h-1.6zM377.7 152.1h1.6v1.6h-1.6zM379.2 144.9h1.6v1.6h-1.6zM380.6 160.6h1.6v1.6h-1.6zM382.3 156.4h1.6v1.6h-1.6zM383.7 144.0h1.6v1.6h-1.6zM383.4 147.1h1.6v1.6h-1.6zM383.6 159.0h1.6v1.6h-1.6zM385.0 148.2h1.6v1.6h-1.6zM386.8 141.0h1.6v1.6h-1.6zM386.4 146.8h1.6v1.6h-1.6zM387.9 143.2h1.6v1.6h-1.6zM388.3 146.6h1.6v1.6h-1.6zM389.4 155.5h1.6v1.6h-1.6zM396.0 140.2h1.6v1.6h-1.6zM397.2 132.7h1.6v1.6h-1.6zM397.3 150.9h1.6v1.6h-1.6zM397.1 158.3h1.6v1.6h-1.6zM398.9 132.3h1.6v1.6h-1.6zM398.5 155.0h1.6v1.6h-1.6zM400.4 130.5h1.6v1.6h-1.6zM401.8 132.0h1.6v1.6h-1.6zM401.4 141.3h1.6v1.6h-1.6zM403.0 131.2h1.6v1.6h-1.6zM403.2 144.8h1.6v1.6h-1.6zM403.2 154.0h1.6v1.6h-1.6zM407.8 145.6h1.6v1.6h-1.6zM407.9 151.5h1.6v1.6h-1.6zM409.1 156.6h1.6v1.6h-1.6zM410.5 137.7h1.6v1.6h-1.6zM410.7 139.0h1.6v1.6h-1.6zM412.0 143.6h1.6v1.6h-1.6zM412.5 144.8h1.6v1.6h-1.6zM413.7 145.8h1.6v1.6h-1.6zM413.7 153.2h1.6v1.6h-1.6zM415.2 146.3h1.6v1.6h-1.6zM415.1 152.0h1.6v1.6h-1.6zM416.7 138.6h1.6v1.6h-1.6zM418.2 155.2h1.6v1.6h-1.6zM419.8 140.2h1.6v1.6h-1.6zM423.0 148.2h1.6v1.6h-1.6zM422.7 158.7h1.6v1.6h-1.6zM424.1 149.0h1.6v1.6h-1.6zM425.7 140.9h1.6v1.6h-1.6zM425.4 146.7h1.6v1.6h-1.6zM425.8 152.4h1.6v1.6h-1.6zM428.5 147.4h1.6v1.6h-1.6zM430.1 141.6h1.6v1.6h-1.6zM430.3 146.1h1.6v1.6h-1.6zM430.2 153.5h1.6v1.6h-1.6zM432.9 156.1h1.6v1.6h-1.6zM436.1 142.2h1.6v1.6h-1.6zM436.3 157.1h1.6v1.6h-1.6zM439.1 140.6h1.6v1.6h-1.6zM439.4 142.3h1.6v1.6h-1.6zM443.4 152.8h1.6v1.6h-1.6zM443.8 154.5h1.6v1.6h-1.6zM446.8 148.9h1.6v1.6h-1.6zM448.2 154.3h1.6v1.6h-1.6zM449.6 145.4h1.6v1.6h-1.6zM449.5 156.0h1.6v1.6h-1.6zM451.4 141.9h1.6v1.6h-1.6zM450.9 145.3h1.6v1.6h-1.6zM452.5 145.4h1.6v1.6h-1.6zM454.1 150.6h1.6v1.6h-1.6zM455.8 142.0h1.6v1.6h-1.6zM455.6 150.9h1.6v1.6h-1.6zM460.1 160.9h1.6v1.6h-1.6zM461.7 143.0h1.6v1.6h-1.6zM464.8 146.2h1.6v1.6h-1.6zM467.9 139.5h1.6v1.6h-1.6zM470.9 141.8h1.6v1.6h-1.6zM470.4 153.8h1.6v1.6h-1.6zM470.5 157.1h1.6v1.6h-1.6zM472.4 143.9h1.6v1.6h-1.6zM472.4 151.2h1.6v1.6h-1.6zM475.3 144.1h1.6v1.6h-1.6zM475.4 161.0h1.6v1.6h-1.6zM476.8 160.6h1.6v1.6h-1.6zM478.2 144.3h1.6v1.6h-1.6zM478.1 154.6h1.6v1.6h-1.6zM479.9 134.2h1.6v1.6h-1.6zM479.9 159.6h1.6v1.6h-1.6zM479.8 161.3h1.6v1.6h-1.6zM481.3 139.0h1.6v1.6h-1.6zM481.0 140.2h1.6v1.6h-1.6zM481.0 150.9h1.6v1.6h-1.6zM484.4 148.1h1.6v1.6h-1.6zM485.8 129.7h1.6v1.6h-1.6zM485.5 147.8h1.6v1.6h-1.6zM487.2 131.8h1.6v1.6h-1.6zM487.2 142.4h1.6v1.6h-1.6zM487.0 143.6h1.6v1.6h-1.6zM488.7 142.0h1.6v1.6h-1.6zM488.4 143.6h1.6v1.6h-1.6zM488.6 158.3h1.6v1.6h-1.6zM490.3 158.6h1.6v1.6h-1.6zM491.5 141.2h1.6v1.6h-1.6zM491.7 156.1h1.6v1.6h-1.6zM496.1 140.4h1.6v1.6h-1.6zM496.2 154.0h1.6v1.6h-1.6zM497.4 138.6h1.6v1.6h-1.6zM497.5 152.0h1.6v1.6h-1.6zM499.0 141.9h1.6v1.6h-1.6zM499.4 151.2h1.6v1.6h-1.6zM499.2 153.9h1.6v1.6h-1.6zM500.4 137.1h1.6v1.6h-1.6zM500.4 150.6h1.6v1.6h-1.6zM502.3 137.9h1.6v1.6h-1.6zM502.3 148.6h1.6v1.6h-1.6zM503.7 150.5h1.6v1.6h-1.6zM505.0 145.5h1.6v1.6h-1.6zM505.1 146.7h1.6v1.6h-1.6zM506.9 158.5h1.6v1.6h-1.6zM508.1 143.5h1.6v1.6h-1.6zM512.8 150.4h1.6v1.6h-1.6zM512.5 159.7h1.6v1.6h-1.6zM516.0 155.6h1.6v1.6h-1.6zM517.4 142.4h1.6v1.6h-1.6zM517.0 143.9h1.6v1.6h-1.6zM517.0 151.6h1.6v1.6h-1.6zM521.6 134.6h1.6v1.6h-1.6zM522.0 158.8h1.6v1.6h-1.6zM523.4 135.9h1.6v1.6h-1.6zM523.4 150.9h1.6v1.6h-1.6zM523.0 152.4h1.6v1.6h-1.6zM523.5 154.4h1.6v1.6h-1.6zM524.6 136.9h1.6v1.6h-1.6zM524.6 152.2h1.6v1.6h-1.6zM526.2 151.9h1.6v1.6h-1.6zM526.4 159.3h1.6v1.6h-1.6zM527.9 145.4h1.6v1.6h-1.6zM529.2 134.0h1.6v1.6h-1.6zM529.5 144.8h1.6v1.6h-1.6zM530.6 134.0h1.6v1.6h-1.6zM530.8 137.2h1.6v1.6h-1.6zM530.8 159.5h1.6v1.6h-1.6zM530.6 161.1h1.6v1.6h-1.6zM532.1 135.6h1.6v1.6h-1.6zM533.7 140.9h1.6v1.6h-1.6zM535.3 153.0h1.6v1.6h-1.6zM536.9 150.9h1.6v1.6h-1.6zM536.5 152.6h1.6v1.6h-1.6zM539.4 141.2h1.6v1.6h-1.6zM539.5 144.0h1.6v1.6h-1.6zM539.7 145.6h1.6v1.6h-1.6zM544.2 139.9h1.6v1.6h-1.6zM543.9 144.0h1.6v1.6h-1.6zM545.8 151.9h1.6v1.6h-1.6zM545.4 157.7h1.6v1.6h-1.6zM547.3 141.4h1.6v1.6h-1.6zM547.5 159.2h1.6v1.6h-1.6z"/><path fill="#0b4a0b" d="M364.4 137.1h1.6v1.6h-1.6zM365.7 147.2h1.6v1.6h-1.6zM367.1 152.7h1.6v1.6h-1.6zM368.7 152.2h1.6v1.6h-1.6zM369.0 159.5h1.6v1.6h-1.6zM370.2 158.2h1.6v1.6h-1.6zM370.0 159.9h1.6v1.6h-1.6zM371.6 135.8h1.6v1.6h-1.6zM371.8 152.5h1.6v1.6h-1.6zM371.8 158.4h1.6v1.6h-1.6zM373.3 141.1h1.6v1.6h-1.6zM374.6 147.4h1.6v1.6h-1.6zM374.6 148.7h1.6v1.6h-1.6zM377.8 160.0h1.6v1.6h-1.6zM379.1 155.1h1.6v1.6h-1.6zM380.9 145.4h1.6v1.6h-1.6zM380.6 147.2h1.6v1.6h-1.6zM382.0 143.1h1.6v1.6h-1.6zM382.1 155.5h1.6v1.6h-1.6zM385.2 145.3h1.6v1.6h-1.6zM385.1 147.2h1.6v1.6h-1.6zM386.5 157.3h1.6v1.6h-1.6zM389.6 144.8h1.6v1.6h-1.6zM391.1 145.1h1.6v1.6h-1.6zM390.9 146.8h1.6v1.6h-1.6zM391.1 158.9h1.6v1.6h-1.6zM392.8 156.6h1.6v1.6h-1.6zM394.5 147.3h1.6v1.6h-1.6zM394.0 150.2h1.6v1.6h-1.6zM395.4 138.6h1.6v1.6h-1.6zM397.0 140.1h1.6v1.6h-1.6zM397.1 143.5h1.6v1.6h-1.6zM398.8 145.9h1.6v1.6h-1.6zM401.5 133.6h1.6v1.6h-1.6zM401.9 145.6h1.6v1.6h-1.6zM401.6 153.2h1.6v1.6h-1.6zM401.6 154.5h1.6v1.6h-1.6zM403.4 133.0h1.6v1.6h-1.6zM403.2 137.4h1.6v1.6h-1.6zM402.9 148.0h1.6v1.6h-1.6zM403.0 152.1h1.6v1.6h-1.6zM403.3 159.6h1.6v1.6h-1.6zM404.6 130.0h1.6v1.6h-1.6zM404.6 152.4h1.6v1.6h-1.6zM404.6 153.8h1.6v1.6h-1.6zM406.3 131.5h1.6v1.6h-1.6zM406.2 134.5h1.6v1.6h-1.6zM406.0 140.7h1.6v1.6h-1.6zM406.5 143.5h1.6v1.6h-1.6zM406.5 152.7h1.6v1.6h-1.6zM406.1 157.3h1.6v1.6h-1.6zM405.9 158.6h1.6v1.6h-1.6zM407.7 157.6h1.6v1.6h-1.6zM409.3 142.1h1.6v1.6h-1.6zM409.2 153.9h1.6v1.6h-1.6zM410.9 136.3h1.6v1.6h-1.6zM411.0 155.7h1.6v1.6h-1.6zM410.5 158.5h1.6v1.6h-1.6zM412.3 138.8h1.6v1.6h-1.6zM412.1 141.8h1.6v1.6h-1.6zM412.4 148.0h1.6v1.6h-1.6zM415.0 139.9h1.6v1.6h-1.6zM415.2 145.0h1.6v1.6h-1.6zM415.2 154.0h1.6v1.6h-1.6zM418.5 149.2h1.6v1.6h-1.6zM418.3 150.6h1.6v1.6h-1.6zM418.0 158.3h1.6v1.6h-1.6zM422.6 139.2h1.6v1.6h-1.6zM422.5 152.7h1.6v1.6h-1.6zM425.8 160.0h1.6v1.6h-1.6zM426.9 141.3h1.6v1.6h-1.6zM431.6 144.0h1.6v1.6h-1.6zM431.8 147.5h1.6v1.6h-1.6zM431.9 150.1h1.6v1.6h-1.6zM432.9 145.7h1.6v1.6h-1.6zM433.2 160.5h1.6v1.6h-1.6zM434.6 149.1h1.6v1.6h-1.6zM436.1 154.2h1.6v1.6h-1.6zM437.6 151.0h1.6v1.6h-1.6zM437.7 159.8h1.6v1.6h-1.6zM438.9 149.7h1.6v1.6h-1.6zM440.6 133.4h1.6v1.6h-1.6zM440.9 142.2h1.6v1.6h-1.6zM440.5 156.0h1.6v1.6h-1.6zM442.1 135.3h1.6v1.6h-1.6zM442.5 136.9h1.6v1.6h-1.6zM443.6 142.4h1.6v1.6h-1.6zM443.6 148.3h1.6v1.6h-1.6zM446.9 130.5h1.6v1.6h-1.6zM446.5 132.3h1.6v1.6h-1.6zM448.5 131.9h1.6v1.6h-1.6zM449.8 136.6h1.6v1.6h-1.6zM449.9 144.4h1.6v1.6h-1.6zM449.7 154.8h1.6v1.6h-1.6zM451.0 154.1h1.6v1.6h-1.6zM452.5 154.4h1.6v1.6h-1.6zM455.7 140.3h1.6v1.6h-1.6zM455.5 158.5h1.6v1.6h-1.6zM458.9 146.6h1.6v1.6h-1.6zM460.4 156.9h1.6v1.6h-1.6zM461.7 160.7h1.6v1.6h-1.6zM463.0 148.3h1.6v1.6h-1.6zM464.9 147.4h1.6v1.6h-1.6zM465.0 152.1h1.6v1.6h-1.6zM466.2 141.4h1.6v1.6h-1.6zM466.0 151.6h1.6v1.6h-1.6zM469.3 145.5h1.6v1.6h-1.6zM469.3 148.3h1.6v1.6h-1.6zM469.0 154.7h1.6v1.6h-1.6zM469.3 159.0h1.6v1.6h-1.6zM469.0 160.3h1.6v1.6h-1.6zM470.5 149.6h1.6v1.6h-1.6zM470.6 152.6h1.6v1.6h-1.6zM473.8 146.6h1.6v1.6h-1.6zM473.8 148.3h1.6v1.6h-1.6zM475.0 151.9h1.6v1.6h-1.6zM475.0 157.7h1.6v1.6h-1.6zM476.8 154.2h1.6v1.6h-1.6zM476.8 158.6h1.6v1.6h-1.6zM479.9 157.9h1.6v1.6h-1.6zM481.0 152.1h1.6v1.6h-1.6zM482.9 139.9h1.6v1.6h-1.6zM482.5 141.4h1.6v1.6h-1.6zM485.6 131.0h1.6v1.6h-1.6zM485.8 134.3h1.6v1.6h-1.6zM487.4 137.7h1.6v1.6h-1.6zM487.4 140.8h1.6v1.6h-1.6zM487.4 148.4h1.6v1.6h-1.6zM487.4 158.7h1.6v1.6h-1.6zM488.5 137.5h1.6v1.6h-1.6zM489.0 153.8h1.6v1.6h-1.6zM490.0 159.6h1.6v1.6h-1.6zM491.7 153.2h1.6v1.6h-1.6zM493.5 135.2h1.6v1.6h-1.6zM493.0 141.2h1.6v1.6h-1.6zM494.7 138.4h1.6v1.6h-1.6zM494.5 140.2h1.6v1.6h-1.6zM494.7 161.1h1.6v1.6h-1.6zM496.5 142.0h1.6v1.6h-1.6zM496.1 145.2h1.6v1.6h-1.6zM498.0 148.0h1.6v1.6h-1.6zM499.2 139.1h1.6v1.6h-1.6zM499.1 152.3h1.6v1.6h-1.6zM500.4 140.2h1.6v1.6h-1.6zM500.5 155.1h1.6v1.6h-1.6zM502.2 150.1h1.6v1.6h-1.6zM503.6 143.1h1.6v1.6h-1.6zM505.2 159.0h1.6v1.6h-1.6zM506.7 154.1h1.6v1.6h-1.6zM508.1 142.1h1.6v1.6h-1.6zM508.0 146.4h1.6v1.6h-1.6zM509.4 146.5h1.6v1.6h-1.6zM509.4 151.2h1.6v1.6h-1.6zM509.4 155.6h1.6v1.6h-1.6zM514.4 143.5h1.6v1.6h-1.6zM514.2 147.7h1.6v1.6h-1.6zM515.6 145.0h1.6v1.6h-1.6zM515.7 154.0h1.6v1.6h-1.6zM518.6 148.2h1.6v1.6h-1.6zM518.9 152.9h1.6v1.6h-1.6zM518.5 155.9h1.6v1.6h-1.6zM518.7 157.6h1.6v1.6h-1.6zM520.4 137.1h1.6v1.6h-1.6zM520.0 143.3h1.6v1.6h-1.6zM519.9 152.5h1.6v1.6h-1.6zM521.8 139.6h1.6v1.6h-1.6zM523.3 133.2h1.6v1.6h-1.6zM522.9 158.3h1.6v1.6h-1.6zM524.9 139.0h1.6v1.6h-1.6zM524.6 153.8h1.6v1.6h-1.6zM526.4 130.6h1.6v1.6h-1.6zM526.1 145.5h1.6v1.6h-1.6zM528.0 136.4h1.6v1.6h-1.6zM528.0 151.6h1.6v1.6h-1.6zM527.7 157.8h1.6v1.6h-1.6zM529.1 132.8h1.6v1.6h-1.6zM529.1 141.5h1.6v1.6h-1.6zM529.4 150.5h1.6v1.6h-1.6zM529.4 152.1h1.6v1.6h-1.6zM529.1 157.0h1.6v1.6h-1.6zM529.0 159.7h1.6v1.6h-1.6zM530.5 138.8h1.6v1.6h-1.6zM530.7 150.7h1.6v1.6h-1.6zM530.8 157.9h1.6v1.6h-1.6zM532.2 149.5h1.6v1.6h-1.6zM533.6 156.9h1.6v1.6h-1.6zM533.6 160.2h1.6v1.6h-1.6zM535.3 145.4h1.6v1.6h-1.6zM536.9 143.5h1.6v1.6h-1.6zM537.0 148.0h1.6v1.6h-1.6zM538.2 145.5h1.6v1.6h-1.6zM539.5 154.4h1.6v1.6h-1.6zM542.9 145.0h1.6v1.6h-1.6zM542.8 151.4h1.6v1.6h-1.6zM542.5 155.5h1.6v1.6h-1.6zM544.2 154.9h1.6v1.6h-1.6zM545.6 146.1h1.6v1.6h-1.6zM545.5 154.8h1.6v1.6h-1.6zM547.3 147.1h1.6v1.6h-1.6zM547.0 148.8h1.6v1.6h-1.6zM547.1 160.8h1.6v1.6h-1.6zM367.1 166.9h1.6v1.6h-1.6zM369.0 171.4h1.6v1.6h-1.6zM370.1 170.0h1.6v1.6h-1.6zM371.9 165.3h1.6v1.6h-1.6zM374.6 171.4h1.6v1.6h-1.6zM382.4 165.1h1.6v1.6h-1.6zM383.8 166.8h1.6v1.6h-1.6zM385.2 167.0h1.6v1.6h-1.6zM389.8 168.1h1.6v1.6h-1.6zM391.3 169.6h1.6v1.6h-1.6zM394.0 165.1h1.6v1.6h-1.6zM399.0 165.5h1.6v1.6h-1.6zM400.2 165.2h1.6v1.6h-1.6zM401.7 176.1h1.6v1.6h-1.6zM403.1 174.4h1.6v1.6h-1.6zM404.6 178.7h1.6v1.6h-1.6zM406.0 168.5h1.6v1.6h-1.6zM406.3 174.0h1.6v1.6h-1.6zM408.0 170.0h1.6v1.6h-1.6zM407.5 172.6h1.6v1.6h-1.6zM409.4 166.6h1.6v1.6h-1.6zM412.2 168.2h1.6v1.6h-1.6zM415.4 168.4h1.6v1.6h-1.6zM419.9 165.1h1.6v1.6h-1.6zM419.6 168.3h1.6v1.6h-1.6zM421.0 165.5h1.6v1.6h-1.6zM422.8 169.7h1.6v1.6h-1.6zM427.2 166.7h1.6v1.6h-1.6zM428.5 166.8h1.6v1.6h-1.6zM430.0 165.3h1.6v1.6h-1.6zM437.9 165.0h1.6v1.6h-1.6zM442.1 171.2h1.6v1.6h-1.6zM443.9 172.8h1.6v1.6h-1.6zM446.9 174.2h1.6v1.6h-1.6zM448.3 174.3h1.6v1.6h-1.6zM451.2 169.7h1.6v1.6h-1.6zM455.5 167.1h1.6v1.6h-1.6zM457.1 168.5h1.6v1.6h-1.6zM466.4 165.3h1.6v1.6h-1.6zM467.8 169.6h1.6v1.6h-1.6zM473.6 168.4h1.6v1.6h-1.6zM482.9 168.4h1.6v1.6h-1.6zM485.5 179.0h1.6v1.6h-1.6zM487.5 171.1h1.6v1.6h-1.6zM488.5 168.4h1.6v1.6h-1.6zM488.8 175.7h1.6v1.6h-1.6zM493.3 169.7h1.6v1.6h-1.6zM494.7 171.4h1.6v1.6h-1.6zM496.3 169.8h1.6v1.6h-1.6zM497.5 165.4h1.6v1.6h-1.6zM498.9 168.5h1.6v1.6h-1.6zM500.8 165.5h1.6v1.6h-1.6zM508.1 169.7h1.6v1.6h-1.6zM520.2 165.2h1.6v1.6h-1.6zM524.4 174.5h1.6v1.6h-1.6zM527.8 171.1h1.6v1.6h-1.6zM533.5 166.8h1.6v1.6h-1.6zM538.0 168.0h1.6v1.6h-1.6zM540.0 165.3h1.6v1.6h-1.6zM544.1 169.9h1.6v1.6h-1.6z"/><path fill="#30d830" d="M364.3 138.6h1.6v1.6h-1.6zM364.4 152.2h1.6v1.6h-1.6zM369.0 155.1h1.6v1.6h-1.6zM370.0 149.4h1.6v1.6h-1.6zM371.8 137.4h1.6v1.6h-1.6zM371.9 146.4h1.6v1.6h-1.6zM371.6 150.8h1.6v1.6h-1.6zM371.7 153.6h1.6v1.6h-1.6zM373.3 160.4h1.6v1.6h-1.6zM374.5 138.7h1.6v1.6h-1.6zM374.9 153.5h1.6v1.6h-1.6zM374.4 158.1h1.6v1.6h-1.6zM377.7 149.6h1.6v1.6h-1.6zM377.6 156.9h1.6v1.6h-1.6zM379.5 150.5h1.6v1.6h-1.6zM380.4 149.9h1.6v1.6h-1.6zM380.9 154.7h1.6v1.6h-1.6zM382.0 158.1h1.6v1.6h-1.6zM383.5 145.7h1.6v1.6h-1.6zM385.0 153.0h1.6v1.6h-1.6zM386.8 148.2h1.6v1.6h-1.6zM388.0 145.3h1.6v1.6h-1.6zM388.1 158.5h1.6v1.6h-1.6zM389.5 149.2h1.6v1.6h-1.6zM389.4 150.9h1.6v1.6h-1.6zM392.7 152.4h1.6v1.6h-1.6zM392.4 159.9h1.6v1.6h-1.6zM394.3 140.8h1.6v1.6h-1.6zM394.4 144.2h1.6v1.6h-1.6zM394.4 148.6h1.6v1.6h-1.6zM394.2 158.9h1.6v1.6h-1.6zM395.7 146.4h1.6v1.6h-1.6zM395.8 147.6h1.6v1.6h-1.6zM395.6 150.5h1.6v1.6h-1.6zM397.1 145.0h1.6v1.6h-1.6zM398.9 138.3h1.6v1.6h-1.6zM400.3 139.4h1.6v1.6h-1.6zM400.3 146.8h1.6v1.6h-1.6zM400.2 160.4h1.6v1.6h-1.6zM403.0 130.0h1.6v1.6h-1.6zM403.3 141.9h1.6v1.6h-1.6zM407.9 132.3h1.6v1.6h-1.6zM407.6 135.2h1.6v1.6h-1.6zM407.9 140.9h1.6v1.6h-1.6zM407.7 147.1h1.6v1.6h-1.6zM408.0 156.1h1.6v1.6h-1.6zM410.6 145.3h1.6v1.6h-1.6zM412.0 157.0h1.6v1.6h-1.6zM413.8 139.6h1.6v1.6h-1.6zM415.2 143.4h1.6v1.6h-1.6zM415.1 156.7h1.6v1.6h-1.6zM418.3 140.2h1.6v1.6h-1.6zM418.1 146.6h1.6v1.6h-1.6zM418.3 147.5h1.6v1.6h-1.6zM419.8 138.9h1.6v1.6h-1.6zM421.2 159.5h1.6v1.6h-1.6zM422.6 156.0h1.6v1.6h-1.6zM424.5 143.4h1.6v1.6h-1.6zM424.2 146.4h1.6v1.6h-1.6zM427.4 152.0h1.6v1.6h-1.6zM427.4 156.5h1.6v1.6h-1.6zM428.5 144.3h1.6v1.6h-1.6zM428.8 160.9h1.6v1.6h-1.6zM430.0 152.4h1.6v1.6h-1.6zM430.3 161.5h1.6v1.6h-1.6zM431.6 153.2h1.6v1.6h-1.6zM432.0 154.9h1.6v1.6h-1.6zM431.7 159.1h1.6v1.6h-1.6zM433.1 150.1h1.6v1.6h-1.6zM437.8 137.8h1.6v1.6h-1.6zM438.9 139.1h1.6v1.6h-1.6zM440.8 152.7h1.6v1.6h-1.6zM442.4 150.7h1.6v1.6h-1.6zM443.7 150.0h1.6v1.6h-1.6zM445.0 143.6h1.6v1.6h-1.6zM445.0 154.3h1.6v1.6h-1.6zM445.0 155.3h1.6v1.6h-1.6zM446.6 133.6h1.6v1.6h-1.6zM446.8 145.4h1.6v1.6h-1.6zM446.5 153.5h1.6v1.6h-1.6zM447.0 156.3h1.6v1.6h-1.6zM448.5 134.7h1.6v1.6h-1.6zM448.0 152.9h1.6v1.6h-1.6zM448.5 155.9h1.6v1.6h-1.6zM448.0 158.9h1.6v1.6h-1.6zM449.9 138.2h1.6v1.6h-1.6zM449.4 139.7h1.6v1.6h-1.6zM451.5 151.2h1.6v1.6h-1.6zM452.4 142.5h1.6v1.6h-1.6zM453.0 159.1h1.6v1.6h-1.6zM454.1 137.1h1.6v1.6h-1.6zM455.9 156.8h1.6v1.6h-1.6zM457.3 142.3h1.6v1.6h-1.6zM460.1 138.7h1.6v1.6h-1.6zM460.0 148.9h1.6v1.6h-1.6zM462.0 146.0h1.6v1.6h-1.6zM461.6 147.3h1.6v1.6h-1.6zM464.5 158.2h1.6v1.6h-1.6zM466.3 144.3h1.6v1.6h-1.6zM466.2 145.5h1.6v1.6h-1.6zM465.9 155.9h1.6v1.6h-1.6zM467.8 145.1h1.6v1.6h-1.6zM468.9 141.2h1.6v1.6h-1.6zM469.3 150.0h1.6v1.6h-1.6zM469.3 157.6h1.6v1.6h-1.6zM473.5 145.2h1.6v1.6h-1.6zM473.7 150.9h1.6v1.6h-1.6zM473.7 157.3h1.6v1.6h-1.6zM475.1 141.2h1.6v1.6h-1.6zM475.1 148.6h1.6v1.6h-1.6zM475.2 150.4h1.6v1.6h-1.6zM476.7 151.4h1.6v1.6h-1.6zM481.4 134.3h1.6v1.6h-1.6zM481.0 137.1h1.6v1.6h-1.6zM482.7 138.4h1.6v1.6h-1.6zM482.4 143.1h1.6v1.6h-1.6zM485.8 143.6h1.6v1.6h-1.6zM485.8 150.8h1.6v1.6h-1.6zM485.5 153.7h1.6v1.6h-1.6zM485.5 157.0h1.6v1.6h-1.6zM487.3 154.3h1.6v1.6h-1.6zM488.9 151.1h1.6v1.6h-1.6zM490.1 137.4h1.6v1.6h-1.6zM490.1 144.7h1.6v1.6h-1.6zM491.7 144.0h1.6v1.6h-1.6zM491.9 154.3h1.6v1.6h-1.6zM496.2 139.3h1.6v1.6h-1.6zM496.4 155.5h1.6v1.6h-1.6zM496.1 159.0h1.6v1.6h-1.6zM497.5 153.7h1.6v1.6h-1.6zM497.5 156.5h1.6v1.6h-1.6zM499.1 143.3h1.6v1.6h-1.6zM499.2 145.3h1.6v1.6h-1.6zM500.8 152.2h1.6v1.6h-1.6zM503.9 138.8h1.6v1.6h-1.6zM508.2 153.8h1.6v1.6h-1.6zM509.9 158.7h1.6v1.6h-1.6zM512.6 144.5h1.6v1.6h-1.6zM512.9 152.2h1.6v1.6h-1.6zM513.9 151.0h1.6v1.6h-1.6zM517.0 156.0h1.6v1.6h-1.6zM519.0 151.3h1.6v1.6h-1.6zM520.2 135.9h1.6v1.6h-1.6zM520.0 156.9h1.6v1.6h-1.6zM521.7 148.1h1.6v1.6h-1.6zM521.5 154.6h1.6v1.6h-1.6zM523.1 143.7h1.6v1.6h-1.6zM523.3 155.4h1.6v1.6h-1.6zM524.8 147.7h1.6v1.6h-1.6zM526.0 144.4h1.6v1.6h-1.6zM527.5 130.5h1.6v1.6h-1.6zM527.6 135.4h1.6v1.6h-1.6zM529.0 137.6h1.6v1.6h-1.6zM529.5 149.3h1.6v1.6h-1.6zM529.3 155.1h1.6v1.6h-1.6zM530.4 131.1h1.6v1.6h-1.6zM533.8 154.1h1.6v1.6h-1.6zM535.0 138.0h1.6v1.6h-1.6zM538.2 142.7h1.6v1.6h-1.6zM538.0 159.3h1.6v1.6h-1.6zM541.5 156.6h1.6v1.6h-1.6zM542.8 137.9h1.6v1.6h-1.6zM542.7 138.8h1.6v1.6h-1.6zM544.1 142.6h1.6v1.6h-1.6zM544.2 147.1h1.6v1.6h-1.6zM544.4 156.3h1.6v1.6h-1.6zM544.2 159.4h1.6v1.6h-1.6zM545.5 138.7h1.6v1.6h-1.6zM545.6 141.4h1.6v1.6h-1.6z"/><path fill="#063806" d="M364.1 140.1h1.6v1.6h-1.6zM364.0 158.2h1.6v1.6h-1.6zM365.5 139.2h1.6v1.6h-1.6zM367.4 143.5h1.6v1.6h-1.6zM368.9 143.5h1.6v1.6h-1.6zM368.7 147.5h1.6v1.6h-1.6zM370.2 135.6h1.6v1.6h-1.6zM370.5 141.6h1.6v1.6h-1.6zM369.9 146.3h1.6v1.6h-1.6zM370.0 153.7h1.6v1.6h-1.6zM371.4 142.1h1.6v1.6h-1.6zM373.0 138.1h1.6v1.6h-1.6zM373.1 142.6h1.6v1.6h-1.6zM372.9 155.8h1.6v1.6h-1.6zM374.5 160.9h1.6v1.6h-1.6zM376.1 138.6h1.6v1.6h-1.6zM376.3 139.8h1.6v1.6h-1.6zM376.1 144.3h1.6v1.6h-1.6zM377.5 140.6h1.6v1.6h-1.6zM377.5 143.6h1.6v1.6h-1.6zM377.6 147.7h1.6v1.6h-1.6zM379.0 141.5h1.6v1.6h-1.6zM379.5 145.9h1.6v1.6h-1.6zM379.1 147.8h1.6v1.6h-1.6zM379.1 158.3h1.6v1.6h-1.6zM382.2 147.7h1.6v1.6h-1.6zM382.1 153.9h1.6v1.6h-1.6zM385.0 151.4h1.6v1.6h-1.6zM385.4 157.2h1.6v1.6h-1.6zM386.4 144.1h1.6v1.6h-1.6zM386.4 160.5h1.6v1.6h-1.6zM389.5 153.9h1.6v1.6h-1.6zM391.2 149.9h1.6v1.6h-1.6zM392.5 144.8h1.6v1.6h-1.6zM392.9 146.1h1.6v1.6h-1.6zM395.7 144.4h1.6v1.6h-1.6zM395.9 158.1h1.6v1.6h-1.6zM397.1 137.6h1.6v1.6h-1.6zM398.5 135.5h1.6v1.6h-1.6zM400.0 150.0h1.6v1.6h-1.6zM400.2 159.2h1.6v1.6h-1.6zM401.7 130.7h1.6v1.6h-1.6zM401.6 144.1h1.6v1.6h-1.6zM403.4 134.4h1.6v1.6h-1.6zM403.3 156.6h1.6v1.6h-1.6zM404.8 137.5h1.6v1.6h-1.6zM406.5 149.8h1.6v1.6h-1.6zM408.0 138.0h1.6v1.6h-1.6zM407.9 150.4h1.6v1.6h-1.6zM409.3 159.7h1.6v1.6h-1.6zM410.9 152.9h1.6v1.6h-1.6zM412.1 136.3h1.6v1.6h-1.6zM412.5 152.8h1.6v1.6h-1.6zM411.9 155.5h1.6v1.6h-1.6zM413.5 157.8h1.6v1.6h-1.6zM415.3 147.9h1.6v1.6h-1.6zM416.5 155.1h1.6v1.6h-1.6zM416.9 157.0h1.6v1.6h-1.6zM418.1 144.5h1.6v1.6h-1.6zM418.2 156.8h1.6v1.6h-1.6zM419.7 144.7h1.6v1.6h-1.6zM419.6 149.5h1.6v1.6h-1.6zM419.5 159.7h1.6v1.6h-1.6zM421.1 147.8h1.6v1.6h-1.6zM421.1 152.1h1.6v1.6h-1.6zM421.0 158.3h1.6v1.6h-1.6zM422.6 141.0h1.6v1.6h-1.6zM424.2 156.6h1.6v1.6h-1.6zM425.8 145.1h1.6v1.6h-1.6zM425.5 157.0h1.6v1.6h-1.6zM425.4 158.8h1.6v1.6h-1.6zM427.5 153.3h1.6v1.6h-1.6zM427.1 159.3h1.6v1.6h-1.6zM428.9 151.8h1.6v1.6h-1.6zM430.0 144.8h1.6v1.6h-1.6zM431.7 143.0h1.6v1.6h-1.6zM431.7 145.6h1.6v1.6h-1.6zM431.8 156.0h1.6v1.6h-1.6zM431.7 160.7h1.6v1.6h-1.6zM433.2 144.1h1.6v1.6h-1.6zM433.3 151.3h1.6v1.6h-1.6zM433.3 158.9h1.6v1.6h-1.6zM434.4 159.7h1.6v1.6h-1.6zM436.3 145.1h1.6v1.6h-1.6zM436.1 151.2h1.6v1.6h-1.6zM436.3 152.7h1.6v1.6h-1.6zM437.4 135.9h1.6v1.6h-1.6zM437.8 152.6h1.6v1.6h-1.6zM439.1 136.4h1.6v1.6h-1.6zM439.1 148.3h1.6v1.6h-1.6zM440.7 146.9h1.6v1.6h-1.6zM440.5 150.0h1.6v1.6h-1.6zM440.7 151.3h1.6v1.6h-1.6zM442.1 143.0h1.6v1.6h-1.6zM442.4 144.6h1.6v1.6h-1.6zM443.5 141.1h1.6v1.6h-1.6zM443.4 157.3h1.6v1.6h-1.6zM443.6 160.4h1.6v1.6h-1.6zM445.1 136.1h1.6v1.6h-1.6zM445.3 151.0h1.6v1.6h-1.6zM446.9 138.4h1.6v1.6h-1.6zM446.5 141.1h1.6v1.6h-1.6zM446.4 151.7h1.6v1.6h-1.6zM446.7 160.7h1.6v1.6h-1.6zM448.1 140.7h1.6v1.6h-1.6zM448.5 147.2h1.6v1.6h-1.6zM449.6 141.4h1.6v1.6h-1.6zM449.6 142.8h1.6v1.6h-1.6zM449.7 147.2h1.6v1.6h-1.6zM450.0 151.9h1.6v1.6h-1.6zM451.0 137.5h1.6v1.6h-1.6zM451.0 147.9h1.6v1.6h-1.6zM451.5 149.6h1.6v1.6h-1.6zM453.9 135.8h1.6v1.6h-1.6zM454.3 140.1h1.6v1.6h-1.6zM454.2 154.0h1.6v1.6h-1.6zM455.8 146.4h1.6v1.6h-1.6zM457.1 148.4h1.6v1.6h-1.6zM457.4 156.1h1.6v1.6h-1.6zM457.5 160.4h1.6v1.6h-1.6zM458.8 141.7h1.6v1.6h-1.6zM458.8 151.1h1.6v1.6h-1.6zM458.6 159.9h1.6v1.6h-1.6zM460.1 147.9h1.6v1.6h-1.6zM461.9 141.5h1.6v1.6h-1.6zM461.8 153.3h1.6v1.6h-1.6zM463.0 154.2h1.6v1.6h-1.6zM463.5 157.3h1.6v1.6h-1.6zM464.4 144.6h1.6v1.6h-1.6zM464.7 155.0h1.6v1.6h-1.6zM467.7 153.1h1.6v1.6h-1.6zM469.4 139.7h1.6v1.6h-1.6zM469.3 151.6h1.6v1.6h-1.6zM470.7 143.6h1.6v1.6h-1.6zM470.5 146.3h1.6v1.6h-1.6zM471.0 155.4h1.6v1.6h-1.6zM471.9 152.6h1.6v1.6h-1.6zM472.2 155.9h1.6v1.6h-1.6zM473.8 155.3h1.6v1.6h-1.6zM473.9 158.5h1.6v1.6h-1.6zM474.0 160.0h1.6v1.6h-1.6zM475.2 154.6h1.6v1.6h-1.6zM475.5 156.0h1.6v1.6h-1.6zM476.9 148.3h1.6v1.6h-1.6zM478.1 146.0h1.6v1.6h-1.6zM478.4 148.6h1.6v1.6h-1.6zM479.4 138.5h1.6v1.6h-1.6zM479.4 139.9h1.6v1.6h-1.6zM482.8 155.1h1.6v1.6h-1.6zM484.3 131.5h1.6v1.6h-1.6zM484.2 132.9h1.6v1.6h-1.6zM483.9 140.8h1.6v1.6h-1.6zM487.3 133.1h1.6v1.6h-1.6zM487.3 145.0h1.6v1.6h-1.6zM487.2 149.5h1.6v1.6h-1.6zM487.4 152.5h1.6v1.6h-1.6zM489.0 132.8h1.6v1.6h-1.6zM490.0 149.2h1.6v1.6h-1.6zM490.2 154.1h1.6v1.6h-1.6zM490.2 155.2h1.6v1.6h-1.6zM491.5 134.7h1.6v1.6h-1.6zM491.7 151.5h1.6v1.6h-1.6zM493.0 145.4h1.6v1.6h-1.6zM494.6 135.9h1.6v1.6h-1.6zM494.8 144.8h1.6v1.6h-1.6zM494.6 149.4h1.6v1.6h-1.6zM496.4 136.2h1.6v1.6h-1.6zM496.1 151.2h1.6v1.6h-1.6zM496.3 152.7h1.6v1.6h-1.6zM497.5 140.5h1.6v1.6h-1.6zM497.7 146.5h1.6v1.6h-1.6zM499.0 146.5h1.6v1.6h-1.6zM499.1 158.6h1.6v1.6h-1.6zM500.5 159.8h1.6v1.6h-1.6zM504.0 140.1h1.6v1.6h-1.6zM503.9 159.6h1.6v1.6h-1.6zM505.1 142.1h1.6v1.6h-1.6zM505.0 156.2h1.6v1.6h-1.6zM506.8 150.8h1.6v1.6h-1.6zM507.9 155.1h1.6v1.6h-1.6zM508.3 156.9h1.6v1.6h-1.6zM509.7 140.5h1.6v1.6h-1.6zM511.0 157.5h1.6v1.6h-1.6zM512.7 139.9h1.6v1.6h-1.6zM512.8 143.0h1.6v1.6h-1.6zM512.7 149.2h1.6v1.6h-1.6zM512.6 156.7h1.6v1.6h-1.6zM514.5 146.2h1.6v1.6h-1.6zM514.0 153.8h1.6v1.6h-1.6zM514.4 158.6h1.6v1.6h-1.6zM514.4 159.7h1.6v1.6h-1.6zM517.1 146.8h1.6v1.6h-1.6zM517.3 154.6h1.6v1.6h-1.6zM517.1 159.1h1.6v1.6h-1.6zM518.6 160.8h1.6v1.6h-1.6zM520.3 139.0h1.6v1.6h-1.6zM520.5 149.6h1.6v1.6h-1.6zM520.0 150.9h1.6v1.6h-1.6zM520.3 155.1h1.6v1.6h-1.6zM521.9 145.4h1.6v1.6h-1.6zM521.9 146.9h1.6v1.6h-1.6zM521.6 151.1h1.6v1.6h-1.6zM521.4 155.6h1.6v1.6h-1.6zM526.4 153.1h1.6v1.6h-1.6zM526.5 157.6h1.6v1.6h-1.6zM527.5 139.7h1.6v1.6h-1.6zM527.7 154.5h1.6v1.6h-1.6zM532.5 132.7h1.6v1.6h-1.6zM532.5 137.2h1.6v1.6h-1.6zM532.2 152.0h1.6v1.6h-1.6zM532.2 158.2h1.6v1.6h-1.6zM533.5 137.8h1.6v1.6h-1.6zM533.7 143.9h1.6v1.6h-1.6zM533.7 148.0h1.6v1.6h-1.6zM536.7 136.0h1.6v1.6h-1.6zM536.7 159.8h1.6v1.6h-1.6zM538.2 148.4h1.6v1.6h-1.6zM538.2 154.8h1.6v1.6h-1.6zM539.5 157.4h1.6v1.6h-1.6zM541.0 149.6h1.6v1.6h-1.6zM543.9 138.2h1.6v1.6h-1.6zM544.2 151.6h1.6v1.6h-1.6zM544.2 153.3h1.6v1.6h-1.6zM545.6 159.7h1.6v1.6h-1.6zM547.3 138.3h1.6v1.6h-1.6zM547.2 158.1h1.6v1.6h-1.6zM365.9 168.1h1.6v1.6h-1.6zM365.7 171.6h1.6v1.6h-1.6zM370.1 168.6h1.6v1.6h-1.6zM373.2 165.1h1.6v1.6h-1.6zM373.4 170.0h1.6v1.6h-1.6zM377.6 166.6h1.6v1.6h-1.6zM395.9 166.6h1.6v1.6h-1.6zM395.7 168.6h1.6v1.6h-1.6zM397.2 167.0h1.6v1.6h-1.6zM401.7 170.0h1.6v1.6h-1.6zM403.3 165.5h1.6v1.6h-1.6zM403.0 172.8h1.6v1.6h-1.6zM406.2 175.8h1.6v1.6h-1.6zM410.7 165.3h1.6v1.6h-1.6zM412.1 166.9h1.6v1.6h-1.6zM412.0 170.0h1.6v1.6h-1.6zM439.1 172.5h1.6v1.6h-1.6zM440.7 165.3h1.6v1.6h-1.6zM442.2 165.5h1.6v1.6h-1.6zM442.4 174.3h1.6v1.6h-1.6zM445.3 178.8h1.6v1.6h-1.6zM446.9 168.3h1.6v1.6h-1.6zM447.0 175.5h1.6v1.6h-1.6zM453.9 165.4h1.6v1.6h-1.6zM457.2 166.8h1.6v1.6h-1.6zM461.7 168.3h1.6v1.6h-1.6zM463.4 165.3h1.6v1.6h-1.6zM466.3 167.0h1.6v1.6h-1.6zM469.0 165.4h1.6v1.6h-1.6zM469.0 168.5h1.6v1.6h-1.6zM470.4 168.3h1.6v1.6h-1.6zM479.6 167.0h1.6v1.6h-1.6zM481.3 166.5h1.6v1.6h-1.6zM482.5 171.3h1.6v1.6h-1.6zM484.1 165.0h1.6v1.6h-1.6zM484.3 169.6h1.6v1.6h-1.6zM487.5 173.1h1.6v1.6h-1.6zM492.0 172.8h1.6v1.6h-1.6zM505.0 167.0h1.6v1.6h-1.6zM506.4 165.2h1.6v1.6h-1.6zM512.5 165.6h1.6v1.6h-1.6zM512.5 167.1h1.6v1.6h-1.6zM513.9 167.0h1.6v1.6h-1.6zM515.6 165.1h1.6v1.6h-1.6zM515.5 168.2h1.6v1.6h-1.6zM518.6 165.6h1.6v1.6h-1.6zM521.7 165.0h1.6v1.6h-1.6zM521.8 171.1h1.6v1.6h-1.6zM524.9 168.3h1.6v1.6h-1.6zM525.0 178.8h1.6v1.6h-1.6zM526.1 175.9h1.6v1.6h-1.6zM532.2 165.6h1.6v1.6h-1.6zM536.5 169.8h1.6v1.6h-1.6zM538.0 167.0h1.6v1.6h-1.6zM541.0 169.9h1.6v1.6h-1.6zM541.2 171.4h1.6v1.6h-1.6zM542.6 165.2h1.6v1.6h-1.6z"/><path fill="#35e035" d="M364.1 141.6h1.6v1.6h-1.6zM365.5 154.2h1.6v1.6h-1.6zM365.4 159.1h1.6v1.6h-1.6zM367.5 137.8h1.6v1.6h-1.6zM371.6 138.8h1.6v1.6h-1.6zM371.5 144.9h1.6v1.6h-1.6zM373.2 143.7h1.6v1.6h-1.6zM376.2 159.3h1.6v1.6h-1.6zM378.9 140.1h1.6v1.6h-1.6zM380.5 157.7h1.6v1.6h-1.6zM380.4 158.8h1.6v1.6h-1.6zM382.1 138.9h1.6v1.6h-1.6zM382.4 149.3h1.6v1.6h-1.6zM383.5 142.4h1.6v1.6h-1.6zM386.9 142.5h1.6v1.6h-1.6zM387.9 140.7h1.6v1.6h-1.6zM391.3 142.1h1.6v1.6h-1.6zM392.7 151.0h1.6v1.6h-1.6zM392.9 155.0h1.6v1.6h-1.6zM396.0 143.0h1.6v1.6h-1.6zM395.7 152.1h1.6v1.6h-1.6zM395.8 156.5h1.6v1.6h-1.6zM395.5 161.0h1.6v1.6h-1.6zM397.0 134.1h1.6v1.6h-1.6zM397.5 146.2h1.6v1.6h-1.6zM397.4 153.9h1.6v1.6h-1.6zM397.4 159.8h1.6v1.6h-1.6zM398.6 150.2h1.6v1.6h-1.6zM399.0 152.1h1.6v1.6h-1.6zM400.4 153.1h1.6v1.6h-1.6zM401.5 160.8h1.6v1.6h-1.6zM404.6 142.1h1.6v1.6h-1.6zM406.0 151.3h1.6v1.6h-1.6zM407.6 136.7h1.6v1.6h-1.6zM410.9 156.9h1.6v1.6h-1.6zM413.9 144.0h1.6v1.6h-1.6zM416.8 149.2h1.6v1.6h-1.6zM416.8 159.5h1.6v1.6h-1.6zM418.2 152.5h1.6v1.6h-1.6zM419.5 147.6h1.6v1.6h-1.6zM422.6 160.4h1.6v1.6h-1.6zM425.6 142.4h1.6v1.6h-1.6zM425.7 149.5h1.6v1.6h-1.6zM428.9 156.7h1.6v1.6h-1.6zM430.2 140.5h1.6v1.6h-1.6zM430.2 155.2h1.6v1.6h-1.6zM430.4 156.7h1.6v1.6h-1.6zM433.1 147.1h1.6v1.6h-1.6zM434.8 141.2h1.6v1.6h-1.6zM434.9 142.7h1.6v1.6h-1.6zM434.9 150.3h1.6v1.6h-1.6zM436.3 144.1h1.6v1.6h-1.6zM436.3 155.7h1.6v1.6h-1.6zM437.8 140.4h1.6v1.6h-1.6zM437.6 157.1h1.6v1.6h-1.6zM438.9 143.7h1.6v1.6h-1.6zM440.7 158.7h1.6v1.6h-1.6zM443.9 131.8h1.6v1.6h-1.6zM445.2 157.3h1.6v1.6h-1.6zM446.9 136.8h1.6v1.6h-1.6zM449.7 153.4h1.6v1.6h-1.6zM449.7 160.5h1.6v1.6h-1.6zM452.5 139.3h1.6v1.6h-1.6zM452.6 141.1h1.6v1.6h-1.6zM454.3 156.6h1.6v1.6h-1.6zM457.1 154.4h1.6v1.6h-1.6zM458.9 157.1h1.6v1.6h-1.6zM458.9 158.3h1.6v1.6h-1.6zM460.3 142.8h1.6v1.6h-1.6zM460.0 153.5h1.6v1.6h-1.6zM461.6 150.3h1.6v1.6h-1.6zM463.2 142.4h1.6v1.6h-1.6zM466.3 142.9h1.6v1.6h-1.6zM466.0 157.6h1.6v1.6h-1.6zM469.5 156.1h1.6v1.6h-1.6zM470.8 140.3h1.6v1.6h-1.6zM473.5 152.5h1.6v1.6h-1.6zM478.5 157.7h1.6v1.6h-1.6zM481.2 135.9h1.6v1.6h-1.6zM481.4 154.0h1.6v1.6h-1.6zM482.5 144.1h1.6v1.6h-1.6zM482.5 150.2h1.6v1.6h-1.6zM482.6 156.2h1.6v1.6h-1.6zM483.9 134.5h1.6v1.6h-1.6zM484.4 142.1h1.6v1.6h-1.6zM484.3 157.0h1.6v1.6h-1.6zM485.7 152.4h1.6v1.6h-1.6zM487.1 139.4h1.6v1.6h-1.6zM488.7 140.8h1.6v1.6h-1.6zM490.4 141.7h1.6v1.6h-1.6zM493.2 137.9h1.6v1.6h-1.6zM493.2 153.1h1.6v1.6h-1.6zM494.6 146.0h1.6v1.6h-1.6zM494.8 152.5h1.6v1.6h-1.6zM497.7 155.2h1.6v1.6h-1.6zM502.4 142.6h1.6v1.6h-1.6zM502.2 145.4h1.6v1.6h-1.6zM503.7 144.7h1.6v1.6h-1.6zM505.0 152.9h1.6v1.6h-1.6zM508.0 159.6h1.6v1.6h-1.6zM509.9 142.0h1.6v1.6h-1.6zM509.8 147.8h1.6v1.6h-1.6zM511.3 144.2h1.6v1.6h-1.6zM511.4 154.6h1.6v1.6h-1.6zM515.6 146.5h1.6v1.6h-1.6zM518.6 143.8h1.6v1.6h-1.6zM521.8 157.1h1.6v1.6h-1.6zM525.0 129.7h1.6v1.6h-1.6zM524.6 132.6h1.6v1.6h-1.6zM524.6 142.0h1.6v1.6h-1.6zM524.9 156.8h1.6v1.6h-1.6zM524.8 158.3h1.6v1.6h-1.6zM526.4 156.5h1.6v1.6h-1.6zM530.5 140.2h1.6v1.6h-1.6zM533.8 146.9h1.6v1.6h-1.6zM535.3 148.5h1.6v1.6h-1.6zM535.4 160.8h1.6v1.6h-1.6zM536.5 144.7h1.6v1.6h-1.6zM538.0 138.2h1.6v1.6h-1.6zM537.9 141.0h1.6v1.6h-1.6zM539.6 151.7h1.6v1.6h-1.6zM539.6 155.7h1.6v1.6h-1.6zM539.6 159.2h1.6v1.6h-1.6zM541.0 153.6h1.6v1.6h-1.6zM542.4 140.7h1.6v1.6h-1.6zM542.7 158.4h1.6v1.6h-1.6zM544.3 150.2h1.6v1.6h-1.6zM547.1 143.0h1.6v1.6h-1.6zM547.5 151.9h1.6v1.6h-1.6zM547.1 153.7h1.6v1.6h-1.6zM369.0 168.5h1.6v1.6h-1.6zM389.7 165.1h1.6v1.6h-1.6zM391.1 168.1h1.6v1.6h-1.6zM398.7 166.6h1.6v1.6h-1.6zM400.0 167.0h1.6v1.6h-1.6zM400.2 168.0h1.6v1.6h-1.6zM400.5 169.8h1.6v1.6h-1.6zM401.8 165.3h1.6v1.6h-1.6zM401.8 171.2h1.6v1.6h-1.6zM406.0 167.0h1.6v1.6h-1.6zM408.0 171.1h1.6v1.6h-1.6zM412.4 165.2h1.6v1.6h-1.6zM412.4 171.3h1.6v1.6h-1.6zM415.1 166.7h1.6v1.6h-1.6zM419.8 166.9h1.6v1.6h-1.6zM421.1 169.6h1.6v1.6h-1.6zM430.2 169.9h1.6v1.6h-1.6zM431.5 165.2h1.6v1.6h-1.6zM436.2 168.5h1.6v1.6h-1.6zM437.9 169.7h1.6v1.6h-1.6zM442.4 167.0h1.6v1.6h-1.6zM443.7 166.5h1.6v1.6h-1.6zM445.0 166.8h1.6v1.6h-1.6zM445.1 168.4h1.6v1.6h-1.6zM445.3 169.7h1.6v1.6h-1.6zM449.7 165.5h1.6v1.6h-1.6zM457.0 165.4h1.6v1.6h-1.6zM461.9 166.5h1.6v1.6h-1.6zM464.9 165.3h1.6v1.6h-1.6zM464.6 170.0h1.6v1.6h-1.6zM470.4 165.6h1.6v1.6h-1.6zM470.6 169.5h1.6v1.6h-1.6zM472.4 165.1h1.6v1.6h-1.6zM478.3 167.1h1.6v1.6h-1.6zM482.5 174.3h1.6v1.6h-1.6zM482.9 177.2h1.6v1.6h-1.6zM485.7 168.4h1.6v1.6h-1.6zM490.0 171.3h1.6v1.6h-1.6zM496.4 165.5h1.6v1.6h-1.6zM499.0 165.6h1.6v1.6h-1.6zM511.3 165.2h1.6v1.6h-1.6zM512.9 169.6h1.6v1.6h-1.6zM523.4 169.5h1.6v1.6h-1.6zM523.3 172.9h1.6v1.6h-1.6zM526.1 165.5h1.6v1.6h-1.6zM526.3 168.1h1.6v1.6h-1.6zM529.2 175.6h1.6v1.6h-1.6zM530.5 175.9h1.6v1.6h-1.6zM533.5 168.3h1.6v1.6h-1.6zM535.5 171.4h1.6v1.6h-1.6zM541.4 167.1h1.6v1.6h-1.6z"/><path fill="#0f5c0f" d="M364.2 154.0h1.6v1.6h-1.6zM365.7 150.1h1.6v1.6h-1.6zM367.2 139.3h1.6v1.6h-1.6zM367.0 150.0h1.6v1.6h-1.6zM368.7 135.5h1.6v1.6h-1.6zM368.6 142.0h1.6v1.6h-1.6zM368.8 156.8h1.6v1.6h-1.6zM370.5 155.2h1.6v1.6h-1.6zM370.0 156.5h1.6v1.6h-1.6zM373.5 145.3h1.6v1.6h-1.6zM374.5 141.3h1.6v1.6h-1.6zM374.9 142.7h1.6v1.6h-1.6zM376.3 137.4h1.6v1.6h-1.6zM376.4 145.9h1.6v1.6h-1.6zM376.1 148.8h1.6v1.6h-1.6zM376.0 150.6h1.6v1.6h-1.6zM377.8 151.1h1.6v1.6h-1.6zM377.4 153.7h1.6v1.6h-1.6zM379.5 153.6h1.6v1.6h-1.6zM380.6 148.7h1.6v1.6h-1.6zM382.1 150.7h1.6v1.6h-1.6zM382.0 152.0h1.6v1.6h-1.6zM383.5 140.9h1.6v1.6h-1.6zM383.4 148.8h1.6v1.6h-1.6zM383.5 154.6h1.6v1.6h-1.6zM386.5 145.2h1.6v1.6h-1.6zM386.7 152.8h1.6v1.6h-1.6zM388.3 147.9h1.6v1.6h-1.6zM388.4 149.5h1.6v1.6h-1.6zM388.3 154.2h1.6v1.6h-1.6zM388.0 155.5h1.6v1.6h-1.6zM389.8 146.5h1.6v1.6h-1.6zM389.8 147.8h1.6v1.6h-1.6zM389.7 152.3h1.6v1.6h-1.6zM391.3 140.8h1.6v1.6h-1.6zM391.3 153.1h1.6v1.6h-1.6zM391.3 160.1h1.6v1.6h-1.6zM392.5 147.7h1.6v1.6h-1.6zM394.5 152.8h1.6v1.6h-1.6zM395.5 136.8h1.6v1.6h-1.6zM397.3 135.7h1.6v1.6h-1.6zM397.3 141.8h1.6v1.6h-1.6zM397.3 147.7h1.6v1.6h-1.6zM400.1 138.0h1.6v1.6h-1.6zM400.4 143.8h1.6v1.6h-1.6zM400.1 148.3h1.6v1.6h-1.6zM401.8 137.9h1.6v1.6h-1.6zM401.9 148.6h1.6v1.6h-1.6zM401.5 152.0h1.6v1.6h-1.6zM403.0 135.6h1.6v1.6h-1.6zM406.3 132.8h1.6v1.6h-1.6zM406.1 142.1h1.6v1.6h-1.6zM408.0 139.4h1.6v1.6h-1.6zM407.7 148.5h1.6v1.6h-1.6zM407.9 154.5h1.6v1.6h-1.6zM409.1 149.2h1.6v1.6h-1.6zM409.2 158.2h1.6v1.6h-1.6zM410.5 146.7h1.6v1.6h-1.6zM410.7 149.9h1.6v1.6h-1.6zM410.7 160.4h1.6v1.6h-1.6zM412.3 149.8h1.6v1.6h-1.6zM414.0 138.3h1.6v1.6h-1.6zM413.8 142.5h1.6v1.6h-1.6zM413.5 161.0h1.6v1.6h-1.6zM415.2 137.1h1.6v1.6h-1.6zM416.6 140.4h1.6v1.6h-1.6zM416.7 146.2h1.6v1.6h-1.6zM418.5 139.0h1.6v1.6h-1.6zM419.8 142.0h1.6v1.6h-1.6zM420.0 152.3h1.6v1.6h-1.6zM421.1 138.5h1.6v1.6h-1.6zM421.1 150.8h1.6v1.6h-1.6zM422.9 142.6h1.6v1.6h-1.6zM422.5 143.8h1.6v1.6h-1.6zM422.6 147.1h1.6v1.6h-1.6zM422.9 149.6h1.6v1.6h-1.6zM424.0 145.0h1.6v1.6h-1.6zM425.6 143.4h1.6v1.6h-1.6zM425.8 147.9h1.6v1.6h-1.6zM427.2 139.8h1.6v1.6h-1.6zM427.3 149.1h1.6v1.6h-1.6zM427.0 160.5h1.6v1.6h-1.6zM431.8 151.5h1.6v1.6h-1.6zM433.5 142.3h1.6v1.6h-1.6zM433.3 153.0h1.6v1.6h-1.6zM434.9 145.8h1.6v1.6h-1.6zM436.5 146.8h1.6v1.6h-1.6zM437.9 138.8h1.6v1.6h-1.6zM437.7 148.3h1.6v1.6h-1.6zM437.5 149.2h1.6v1.6h-1.6zM437.9 154.0h1.6v1.6h-1.6zM437.8 155.6h1.6v1.6h-1.6zM438.9 151.1h1.6v1.6h-1.6zM438.9 154.2h1.6v1.6h-1.6zM439.0 155.7h1.6v1.6h-1.6zM440.5 145.6h1.6v1.6h-1.6zM442.1 138.4h1.6v1.6h-1.6zM442.3 146.2h1.6v1.6h-1.6zM442.3 153.5h1.6v1.6h-1.6zM443.4 130.7h1.6v1.6h-1.6zM443.7 138.0h1.6v1.6h-1.6zM443.8 147.0h1.6v1.6h-1.6zM444.9 138.9h1.6v1.6h-1.6zM445.2 152.7h1.6v1.6h-1.6zM445.2 158.3h1.6v1.6h-1.6zM446.5 144.5h1.6v1.6h-1.6zM446.4 147.1h1.6v1.6h-1.6zM448.1 139.7h1.6v1.6h-1.6zM448.0 142.5h1.6v1.6h-1.6zM448.4 151.5h1.6v1.6h-1.6zM449.6 150.0h1.6v1.6h-1.6zM451.5 140.2h1.6v1.6h-1.6zM451.2 158.7h1.6v1.6h-1.6zM454.1 143.1h1.6v1.6h-1.6zM454.4 144.9h1.6v1.6h-1.6zM454.3 155.6h1.6v1.6h-1.6zM455.7 143.1h1.6v1.6h-1.6zM455.6 155.6h1.6v1.6h-1.6zM455.9 159.9h1.6v1.6h-1.6zM458.8 145.2h1.6v1.6h-1.6zM460.0 140.1h1.6v1.6h-1.6zM459.9 152.2h1.6v1.6h-1.6zM459.9 158.1h1.6v1.6h-1.6zM461.9 138.1h1.6v1.6h-1.6zM462.0 151.7h1.6v1.6h-1.6zM461.7 159.5h1.6v1.6h-1.6zM463.1 139.0h1.6v1.6h-1.6zM464.5 159.7h1.6v1.6h-1.6zM466.3 150.0h1.6v1.6h-1.6zM466.0 153.3h1.6v1.6h-1.6zM467.7 149.9h1.6v1.6h-1.6zM467.9 151.0h1.6v1.6h-1.6zM469.4 152.9h1.6v1.6h-1.6zM470.6 147.7h1.6v1.6h-1.6zM470.5 158.6h1.6v1.6h-1.6zM473.5 140.3h1.6v1.6h-1.6zM473.8 154.3h1.6v1.6h-1.6zM475.2 143.0h1.6v1.6h-1.6zM476.8 155.8h1.6v1.6h-1.6zM479.4 135.8h1.6v1.6h-1.6zM479.4 144.5h1.6v1.6h-1.6zM479.5 149.2h1.6v1.6h-1.6zM481.2 147.7h1.6v1.6h-1.6zM484.4 137.6h1.6v1.6h-1.6zM484.3 139.2h1.6v1.6h-1.6zM484.3 151.0h1.6v1.6h-1.6zM484.4 154.0h1.6v1.6h-1.6zM487.1 130.0h1.6v1.6h-1.6zM487.2 160.2h1.6v1.6h-1.6zM488.5 139.0h1.6v1.6h-1.6zM488.8 146.4h1.6v1.6h-1.6zM490.0 151.1h1.6v1.6h-1.6zM491.8 136.7h1.6v1.6h-1.6zM493.4 136.4h1.6v1.6h-1.6zM493.0 151.6h1.6v1.6h-1.6zM494.6 143.4h1.6v1.6h-1.6zM495.0 150.8h1.6v1.6h-1.6zM496.5 157.5h1.6v1.6h-1.6zM496.1 160.2h1.6v1.6h-1.6zM497.8 141.7h1.6v1.6h-1.6zM497.5 159.5h1.6v1.6h-1.6zM499.1 159.9h1.6v1.6h-1.6zM500.6 156.8h1.6v1.6h-1.6zM500.5 158.1h1.6v1.6h-1.6zM502.0 140.9h1.6v1.6h-1.6zM502.0 146.9h1.6v1.6h-1.6zM502.1 151.7h1.6v1.6h-1.6zM502.2 159.1h1.6v1.6h-1.6zM503.7 149.3h1.6v1.6h-1.6zM503.7 160.9h1.6v1.6h-1.6zM505.1 144.0h1.6v1.6h-1.6zM505.0 151.5h1.6v1.6h-1.6zM506.9 146.7h1.6v1.6h-1.6zM506.7 155.9h1.6v1.6h-1.6zM506.6 159.8h1.6v1.6h-1.6zM509.8 153.7h1.6v1.6h-1.6zM509.8 156.8h1.6v1.6h-1.6zM511.0 140.7h1.6v1.6h-1.6zM511.3 150.2h1.6v1.6h-1.6zM511.1 151.3h1.6v1.6h-1.6zM511.2 152.9h1.6v1.6h-1.6zM512.6 146.2h1.6v1.6h-1.6zM515.9 157.0h1.6v1.6h-1.6zM515.8 158.6h1.6v1.6h-1.6zM516.9 145.5h1.6v1.6h-1.6zM516.9 153.1h1.6v1.6h-1.6zM518.9 141.1h1.6v1.6h-1.6zM518.9 159.0h1.6v1.6h-1.6zM520.0 144.8h1.6v1.6h-1.6zM520.3 154.1h1.6v1.6h-1.6zM523.3 139.4h1.6v1.6h-1.6zM526.5 128.9h1.6v1.6h-1.6zM526.0 133.7h1.6v1.6h-1.6zM526.3 135.0h1.6v1.6h-1.6zM526.2 147.0h1.6v1.6h-1.6zM526.0 154.9h1.6v1.6h-1.6zM526.3 160.5h1.6v1.6h-1.6zM527.5 132.0h1.6v1.6h-1.6zM527.8 147.0h1.6v1.6h-1.6zM527.5 148.9h1.6v1.6h-1.6zM529.3 131.5h1.6v1.6h-1.6zM532.1 134.4h1.6v1.6h-1.6zM532.1 142.0h1.6v1.6h-1.6zM532.0 144.9h1.6v1.6h-1.6zM531.9 148.0h1.6v1.6h-1.6zM532.0 150.7h1.6v1.6h-1.6zM532.3 159.5h1.6v1.6h-1.6zM533.4 142.0h1.6v1.6h-1.6zM533.6 158.4h1.6v1.6h-1.6zM535.3 139.6h1.6v1.6h-1.6zM535.2 151.5h1.6v1.6h-1.6zM535.0 154.6h1.6v1.6h-1.6zM536.5 140.3h1.6v1.6h-1.6zM536.5 146.3h1.6v1.6h-1.6zM538.3 139.6h1.6v1.6h-1.6zM538.4 150.2h1.6v1.6h-1.6zM541.4 144.8h1.6v1.6h-1.6zM541.3 147.8h1.6v1.6h-1.6zM540.9 155.5h1.6v1.6h-1.6zM541.2 158.2h1.6v1.6h-1.6zM541.4 160.0h1.6v1.6h-1.6zM544.1 146.0h1.6v1.6h-1.6zM544.1 160.8h1.6v1.6h-1.6zM545.8 144.2h1.6v1.6h-1.6zM545.9 147.5h1.6v1.6h-1.6zM545.5 148.7h1.6v1.6h-1.6zM545.7 153.5h1.6v1.6h-1.6zM364.0 165.4h1.6v1.6h-1.6zM364.1 169.6h1.6v1.6h-1.6zM364.1 172.6h1.6v1.6h-1.6zM365.4 174.0h1.6v1.6h-1.6zM367.0 168.5h1.6v1.6h-1.6zM376.0 168.3h1.6v1.6h-1.6zM380.5 165.2h1.6v1.6h-1.6zM381.0 168.1h1.6v1.6h-1.6zM394.1 167.0h1.6v1.6h-1.6zM400.1 174.2h1.6v1.6h-1.6zM401.7 174.1h1.6v1.6h-1.6zM403.1 168.5h1.6v1.6h-1.6zM404.6 170.1h1.6v1.6h-1.6zM404.5 173.0h1.6v1.6h-1.6zM410.6 170.1h1.6v1.6h-1.6zM413.5 168.2h1.6v1.6h-1.6zM416.7 168.6h1.6v1.6h-1.6zM417.9 165.0h1.6v1.6h-1.6zM418.1 168.1h1.6v1.6h-1.6zM425.7 168.0h1.6v1.6h-1.6zM429.0 165.2h1.6v1.6h-1.6zM433.5 166.9h1.6v1.6h-1.6zM439.1 169.7h1.6v1.6h-1.6zM443.9 174.5h1.6v1.6h-1.6zM445.0 174.1h1.6v1.6h-1.6zM446.5 172.5h1.6v1.6h-1.6zM458.7 165.0h1.6v1.6h-1.6zM460.1 165.3h1.6v1.6h-1.6zM461.5 169.9h1.6v1.6h-1.6zM469.0 169.9h1.6v1.6h-1.6zM478.2 171.5h1.6v1.6h-1.6zM481.2 175.9h1.6v1.6h-1.6zM482.7 165.3h1.6v1.6h-1.6zM491.8 165.3h1.6v1.6h-1.6zM506.8 166.5h1.6v1.6h-1.6zM508.5 168.1h1.6v1.6h-1.6zM521.5 166.6h1.6v1.6h-1.6zM521.9 169.9h1.6v1.6h-1.6zM525.0 165.4h1.6v1.6h-1.6zM526.3 166.8h1.6v1.6h-1.6zM527.6 165.4h1.6v1.6h-1.6zM527.6 167.1h1.6v1.6h-1.6zM528.0 170.0h1.6v1.6h-1.6zM528.9 168.1h1.6v1.6h-1.6zM529.3 177.3h1.6v1.6h-1.6zM535.2 165.3h1.6v1.6h-1.6zM540.0 167.0h1.6v1.6h-1.6zM541.0 165.5h1.6v1.6h-1.6zM544.5 166.8h1.6v1.6h-1.6zM547.3 165.1h1.6v1.6h-1.6zM547.5 168.2h1.6v1.6h-1.6z"/><path fill="#041f04" d="M364.3 160.0h1.6v1.6h-1.6zM365.7 138.1h1.6v1.6h-1.6zM365.9 140.7h1.6v1.6h-1.6zM365.9 151.2h1.6v1.6h-1.6zM367.2 134.9h1.6v1.6h-1.6zM367.1 145.3h1.6v1.6h-1.6zM367.5 157.2h1.6v1.6h-1.6zM367.2 160.0h1.6v1.6h-1.6zM368.7 158.1h1.6v1.6h-1.6zM373.1 147.0h1.6v1.6h-1.6zM372.9 151.5h1.6v1.6h-1.6zM376.2 143.1h1.6v1.6h-1.6zM376.1 147.7h1.6v1.6h-1.6zM376.2 153.5h1.6v1.6h-1.6zM376.3 158.3h1.6v1.6h-1.6zM377.5 142.0h1.6v1.6h-1.6zM379.0 138.8h1.6v1.6h-1.6zM379.4 149.4h1.6v1.6h-1.6zM378.9 152.2h1.6v1.6h-1.6zM379.0 159.8h1.6v1.6h-1.6zM379.0 161.1h1.6v1.6h-1.6zM380.5 141.1h1.6v1.6h-1.6zM380.4 142.3h1.6v1.6h-1.6zM380.9 152.8h1.6v1.6h-1.6zM383.7 155.9h1.6v1.6h-1.6zM383.8 157.5h1.6v1.6h-1.6zM385.0 150.1h1.6v1.6h-1.6zM385.0 160.6h1.6v1.6h-1.6zM386.7 149.9h1.6v1.6h-1.6zM386.6 151.2h1.6v1.6h-1.6zM386.7 154.3h1.6v1.6h-1.6zM386.7 158.9h1.6v1.6h-1.6zM388.0 150.9h1.6v1.6h-1.6zM394.2 157.3h1.6v1.6h-1.6zM395.9 149.3h1.6v1.6h-1.6zM395.5 155.2h1.6v1.6h-1.6zM398.9 133.6h1.6v1.6h-1.6zM398.7 139.9h1.6v1.6h-1.6zM398.9 148.9h1.6v1.6h-1.6zM398.7 160.7h1.6v1.6h-1.6zM402.0 136.8h1.6v1.6h-1.6zM401.9 150.1h1.6v1.6h-1.6zM401.8 156.3h1.6v1.6h-1.6zM403.0 146.2h1.6v1.6h-1.6zM405.0 139.2h1.6v1.6h-1.6zM404.8 148.1h1.6v1.6h-1.6zM404.6 158.3h1.6v1.6h-1.6zM406.2 136.3h1.6v1.6h-1.6zM406.4 146.3h1.6v1.6h-1.6zM409.2 134.2h1.6v1.6h-1.6zM409.0 137.1h1.6v1.6h-1.6zM410.9 140.9h1.6v1.6h-1.6zM411.0 150.9h1.6v1.6h-1.6zM410.7 154.4h1.6v1.6h-1.6zM412.3 140.7h1.6v1.6h-1.6zM412.3 153.8h1.6v1.6h-1.6zM412.3 158.7h1.6v1.6h-1.6zM413.7 156.1h1.6v1.6h-1.6zM416.9 145.0h1.6v1.6h-1.6zM418.3 141.8h1.6v1.6h-1.6zM419.7 146.5h1.6v1.6h-1.6zM419.8 155.3h1.6v1.6h-1.6zM419.9 156.7h1.6v1.6h-1.6zM421.1 140.2h1.6v1.6h-1.6zM421.2 149.3h1.6v1.6h-1.6zM421.3 153.9h1.6v1.6h-1.6zM427.5 145.8h1.6v1.6h-1.6zM428.5 145.7h1.6v1.6h-1.6zM428.5 148.7h1.6v1.6h-1.6zM428.9 150.2h1.6v1.6h-1.6zM428.9 153.6h1.6v1.6h-1.6zM433.1 148.8h1.6v1.6h-1.6zM434.8 144.5h1.6v1.6h-1.6zM434.7 155.2h1.6v1.6h-1.6zM437.9 141.8h1.6v1.6h-1.6zM439.0 145.3h1.6v1.6h-1.6zM439.5 152.7h1.6v1.6h-1.6zM440.5 136.2h1.6v1.6h-1.6zM440.5 139.7h1.6v1.6h-1.6zM440.9 148.7h1.6v1.6h-1.6zM440.4 157.3h1.6v1.6h-1.6zM441.0 160.2h1.6v1.6h-1.6zM442.2 140.1h1.6v1.6h-1.6zM442.1 159.3h1.6v1.6h-1.6zM443.7 136.8h1.6v1.6h-1.6zM445.1 132.8h1.6v1.6h-1.6zM445.1 142.1h1.6v1.6h-1.6zM448.1 136.3h1.6v1.6h-1.6zM448.0 143.8h1.6v1.6h-1.6zM448.0 145.7h1.6v1.6h-1.6zM449.5 148.7h1.6v1.6h-1.6zM450.9 146.7h1.6v1.6h-1.6zM452.9 149.9h1.6v1.6h-1.6zM454.1 138.9h1.6v1.6h-1.6zM454.1 148.1h1.6v1.6h-1.6zM456.0 137.6h1.6v1.6h-1.6zM455.7 139.0h1.6v1.6h-1.6zM455.5 147.9h1.6v1.6h-1.6zM457.0 140.8h1.6v1.6h-1.6zM457.1 143.7h1.6v1.6h-1.6zM457.2 151.2h1.6v1.6h-1.6zM457.4 157.5h1.6v1.6h-1.6zM460.5 159.8h1.6v1.6h-1.6zM461.9 154.7h1.6v1.6h-1.6zM461.7 157.6h1.6v1.6h-1.6zM463.0 143.5h1.6v1.6h-1.6zM462.9 145.5h1.6v1.6h-1.6zM463.2 152.9h1.6v1.6h-1.6zM464.8 142.8h1.6v1.6h-1.6zM464.4 148.9h1.6v1.6h-1.6zM466.0 147.3h1.6v1.6h-1.6zM470.6 145.2h1.6v1.6h-1.6zM472.5 141.9h1.6v1.6h-1.6zM472.1 144.9h1.6v1.6h-1.6zM472.4 146.5h1.6v1.6h-1.6zM472.2 148.0h1.6v1.6h-1.6zM472.2 160.0h1.6v1.6h-1.6zM473.9 141.9h1.6v1.6h-1.6zM475.1 147.5h1.6v1.6h-1.6zM475.4 159.1h1.6v1.6h-1.6zM476.5 142.3h1.6v1.6h-1.6zM478.1 138.5h1.6v1.6h-1.6zM478.4 147.1h1.6v1.6h-1.6zM478.1 153.5h1.6v1.6h-1.6zM478.4 161.1h1.6v1.6h-1.6zM479.9 146.0h1.6v1.6h-1.6zM479.5 152.2h1.6v1.6h-1.6zM481.2 156.6h1.6v1.6h-1.6zM482.5 145.6h1.6v1.6h-1.6zM482.9 157.9h1.6v1.6h-1.6zM485.8 135.7h1.6v1.6h-1.6zM485.6 146.5h1.6v1.6h-1.6zM487.0 146.7h1.6v1.6h-1.6zM488.6 135.8h1.6v1.6h-1.6zM489.0 152.6h1.6v1.6h-1.6zM488.9 155.5h1.6v1.6h-1.6zM489.9 143.5h1.6v1.6h-1.6zM489.9 147.7h1.6v1.6h-1.6zM491.6 137.9h1.6v1.6h-1.6zM491.9 148.5h1.6v1.6h-1.6zM491.7 149.7h1.6v1.6h-1.6zM492.0 157.7h1.6v1.6h-1.6zM493.2 147.2h1.6v1.6h-1.6zM493.3 148.3h1.6v1.6h-1.6zM494.9 153.9h1.6v1.6h-1.6zM497.6 137.4h1.6v1.6h-1.6zM497.5 144.9h1.6v1.6h-1.6zM499.5 149.6h1.6v1.6h-1.6zM498.9 156.9h1.6v1.6h-1.6zM500.6 144.4h1.6v1.6h-1.6zM502.0 139.3h1.6v1.6h-1.6zM502.4 160.6h1.6v1.6h-1.6zM503.4 151.9h1.6v1.6h-1.6zM503.9 153.6h1.6v1.6h-1.6zM505.5 139.7h1.6v1.6h-1.6zM505.1 154.4h1.6v1.6h-1.6zM505.0 157.5h1.6v1.6h-1.6zM505.4 160.4h1.6v1.6h-1.6zM506.7 142.2h1.6v1.6h-1.6zM506.7 143.5h1.6v1.6h-1.6zM506.5 157.0h1.6v1.6h-1.6zM507.9 145.0h1.6v1.6h-1.6zM508.0 149.5h1.6v1.6h-1.6zM508.0 152.6h1.6v1.6h-1.6zM509.7 144.7h1.6v1.6h-1.6zM511.1 145.7h1.6v1.6h-1.6zM512.9 147.9h1.6v1.6h-1.6zM512.9 160.8h1.6v1.6h-1.6zM514.0 145.1h1.6v1.6h-1.6zM514.0 155.1h1.6v1.6h-1.6zM515.8 148.1h1.6v1.6h-1.6zM520.1 140.4h1.6v1.6h-1.6zM520.3 141.7h1.6v1.6h-1.6zM521.5 131.9h1.6v1.6h-1.6zM521.7 143.7h1.6v1.6h-1.6zM524.6 160.0h1.6v1.6h-1.6zM526.2 139.7h1.6v1.6h-1.6zM526.0 141.3h1.6v1.6h-1.6zM527.5 142.6h1.6v1.6h-1.6zM527.8 144.3h1.6v1.6h-1.6zM527.9 156.4h1.6v1.6h-1.6zM527.8 159.0h1.6v1.6h-1.6zM529.3 129.8h1.6v1.6h-1.6zM529.0 138.7h1.6v1.6h-1.6zM530.8 132.4h1.6v1.6h-1.6zM531.0 135.8h1.6v1.6h-1.6zM530.8 143.0h1.6v1.6h-1.6zM533.6 149.6h1.6v1.6h-1.6zM533.9 152.5h1.6v1.6h-1.6zM535.3 157.7h1.6v1.6h-1.6zM536.9 137.3h1.6v1.6h-1.6zM538.0 144.0h1.6v1.6h-1.6zM538.2 147.2h1.6v1.6h-1.6zM539.9 139.7h1.6v1.6h-1.6zM539.8 150.2h1.6v1.6h-1.6zM541.0 137.4h1.6v1.6h-1.6zM541.4 140.2h1.6v1.6h-1.6zM543.0 143.8h1.6v1.6h-1.6zM545.7 143.2h1.6v1.6h-1.6zM546.0 161.2h1.6v1.6h-1.6zM547.3 146.1h1.6v1.6h-1.6zM547.3 150.4h1.6v1.6h-1.6z"/><path fill="#b83020" d="M389.6 159.7h1.2v1.2h-1.2zM400.0 132.1h1.2v1.2h-1.2zM400.0 151.5h1.2v1.2h-1.2zM400.3 154.7h1.2v1.2h-1.2zM427.1 147.2h1.2v1.2h-1.2zM440.9 138.1h1.2v1.2h-1.2zM448.4 150.2h1.2v1.2h-1.2zM451.3 138.7h1.2v1.2h-1.2zM458.8 149.7h1.2v1.2h-1.2zM491.7 147.2h1.2v1.2h-1.2zM529.2 153.8h1.2v1.2h-1.2zM365.6 167.1h1.6v1.6h-1.6zM398.9 175.7h1.6v1.6h-1.6zM421.4 167.1h1.6v1.6h-1.6zM443.5 165.3h1.6v1.6h-1.6z"/><path fill="#30d030" d="M370.0 165.5h1.6v1.6h-1.6zM370.4 171.5h1.6v1.6h-1.6zM371.6 168.2h1.6v1.6h-1.6zM377.7 168.5h1.6v1.6h-1.6zM379.3 167.0h1.6v1.6h-1.6zM391.0 166.7h1.6v1.6h-1.6zM395.4 165.1h1.6v1.6h-1.6zM398.7 169.8h1.6v1.6h-1.6zM400.5 172.7h1.6v1.6h-1.6zM403.1 167.0h1.6v1.6h-1.6zM404.5 168.4h1.6v1.6h-1.6zM406.1 169.9h1.6v1.6h-1.6zM407.5 168.4h1.6v1.6h-1.6zM408.9 165.1h1.6v1.6h-1.6zM410.5 166.9h1.6v1.6h-1.6zM410.6 168.4h1.6v1.6h-1.6zM414.9 165.5h1.6v1.6h-1.6zM423.0 167.0h1.6v1.6h-1.6zM434.8 165.1h1.6v1.6h-1.6zM434.8 168.4h1.6v1.6h-1.6zM436.4 166.8h1.6v1.6h-1.6zM441.9 168.3h1.6v1.6h-1.6zM444.0 169.8h1.6v1.6h-1.6zM452.6 165.4h1.6v1.6h-1.6zM454.1 167.0h1.6v1.6h-1.6zM454.5 168.4h1.6v1.6h-1.6zM455.6 168.0h1.6v1.6h-1.6zM460.0 169.9h1.6v1.6h-1.6zM461.9 165.1h1.6v1.6h-1.6zM463.3 166.8h1.6v1.6h-1.6zM467.5 165.2h1.6v1.6h-1.6zM469.4 166.8h1.6v1.6h-1.6zM471.9 170.0h1.6v1.6h-1.6zM473.5 166.7h1.6v1.6h-1.6zM475.4 168.3h1.6v1.6h-1.6zM476.6 167.0h1.6v1.6h-1.6zM480.0 169.9h1.6v1.6h-1.6zM481.4 171.5h1.6v1.6h-1.6zM484.3 172.5h1.6v1.6h-1.6zM484.0 177.3h1.6v1.6h-1.6zM484.0 178.9h1.6v1.6h-1.6zM485.6 175.7h1.6v1.6h-1.6zM487.4 174.1h1.6v1.6h-1.6zM490.2 168.5h1.6v1.6h-1.6zM493.3 165.1h1.6v1.6h-1.6zM497.9 166.6h1.6v1.6h-1.6zM502.1 167.1h1.6v1.6h-1.6zM503.7 168.1h1.6v1.6h-1.6zM505.3 169.9h1.6v1.6h-1.6zM516.9 165.1h1.6v1.6h-1.6zM517.0 169.6h1.6v1.6h-1.6zM523.0 165.2h1.6v1.6h-1.6zM524.6 176.1h1.6v1.6h-1.6zM530.6 172.9h1.6v1.6h-1.6zM530.9 177.4h1.6v1.6h-1.6zM535.4 166.7h1.6v1.6h-1.6zM535.0 169.7h1.6v1.6h-1.6z"/><polyline points="364.2,129.1 365.5,129.2 366.8,132.3 368.1,132.7 369.4,135.2 370.7,135.2 372.0,134.8 373.3,136.3 374.6,135.5 375.9,136.9 377.2,136.4 378.5,136.8 379.8,137.9 381.1,139.2 382.4,137.9 383.7,138.4 385.0,139.7 386.3,140.7 387.6,140.1 388.9,139.9 390.2,141.5 391.5,139.5 392.8,141.7 394.1,140.5 395.4,140.4 396.7,135.4 398.0,131.9 399.3,131.9 400.6,129.8 401.9,130.2 403.2,129.9 404.5,128.8 405.8,129.8 407.1,129.4 408.4,131.6 409.7,133.4 411.0,135.6 412.3,135.4 413.6,135.5 414.9,136.6 416.2,136.6 417.5,136.6 418.8,138.2 420.1,138.3 421.4,137.6 422.7,138.7 424.0,138.9 425.3,140.0 426.6,140.0 427.9,139.2 429.2,141.1 430.5,139.3 431.8,140.2 433.1,141.3 434.4,140.0 435.7,141.1 437.0,140.2 438.3,135.7 439.6,132.8 440.9,131.3 442.2,131.5 443.5,129.6 444.8,130.0 446.1,129.4 447.4,130.1 448.7,130.9 450.0,134.1 451.3,135.5 452.6,135.2 453.9,136.1 455.2,135.0 456.5,136.9 457.8,137.2 459.1,138.4 460.4,138.3 461.7,137.4 463.0,138.0 464.3,139.0 465.6,137.7 466.9,139.1 468.2,138.7 469.5,138.9 470.8,139.0 472.1,140.9 473.4,139.6 474.7,140.1 476.0,140.7 477.3,142.0 478.6,138.8 479.9,134.3 481.2,132.3 482.5,132.2 483.8,131.5 485.1,131.1 486.4,129.2 487.7,129.4 489.0,130.1 490.3,132.7 491.6,134.9 492.9,134.0 494.2,134.6 495.5,135.1 496.8,135.5 498.1,136.5 499.4,137.1 500.7,136.7 502.0,136.5 503.3,137.8 504.6,138.1 505.9,138.8 507.2,140.1 508.5,139.7 509.8,139.6 511.1,140.1 512.4,140.5 513.7,139.2 515.0,141.5 516.3,141.4 517.6,141.9 518.9,141.9 520.2,138.0 521.5,132.8 522.8,130.5 524.1,131.1 525.4,129.1 526.7,128.7 528.0,128.5 529.3,128.6 530.6,129.8 531.9,130.9 533.2,132.6 534.5,134.2 535.8,134.5 537.1,135.5 538.4,135.1 539.7,137.5 541.0,137.2 542.3,136.5 543.6,137.1 544.9,137.7 546.2,138.0 547.5,137.4 548.5,138.4" fill="none" stroke="#dce4dc" stroke-width="1.1" opacity="0.95"/><rect x="364.2" y="160.9" width="184.3" height="4.6" fill="#050505"/><rect x="364.2" y="162.1" width="184.3" height="1.7" fill="#8e8e8e"/><text x="359.0" y="105.8" font-size="5.6" font-weight="bold" fill="#e62a20" font-family="Liberation Sans, sans-serif" text-anchor="end">200</text><rect x="360.4" y="103.1" width="3.3" height="0.9" fill="#a83a30"/><text x="359.0" y="120.4" font-size="5.6" font-weight="bold" fill="#e62a20" font-family="Liberation Sans, sans-serif" text-anchor="end">150</text><rect x="360.4" y="117.7" width="3.3" height="0.9" fill="#a83a30"/><text x="359.0" y="135.1" font-size="5.6" font-weight="bold" fill="#e62a20" font-family="Liberation Sans, sans-serif" text-anchor="end">100</text><rect x="360.4" y="132.3" width="3.3" height="0.9" fill="#a83a30"/><text x="359.0" y="149.7" font-size="5.6" font-weight="bold" fill="#e62a20" font-family="Liberation Sans, sans-serif" text-anchor="end">50</text><rect x="360.4" y="146.9" width="3.3" height="0.9" fill="#a83a30"/><text x="359.0" y="164.3" font-size="5.6" font-weight="bold" fill="#e62a20" font-family="Liberation Sans, sans-serif" text-anchor="end">0</text><rect x="360.4" y="161.6" width="3.3" height="0.9" fill="#a83a30"/><text x="359.0" y="178.9" font-size="5.6" font-weight="bold" fill="#e62a20" font-family="Liberation Sans, sans-serif" text-anchor="end">-50</text><rect x="360.4" y="176.2" width="3.3" height="0.9" fill="#a83a30"/><text x="359.0" y="193.5" font-size="5.6" font-weight="bold" fill="#e62a20" font-family="Liberation Sans, sans-serif" text-anchor="end">-100</text><rect x="360.4" y="190.8" width="3.3" height="0.9" fill="#a83a30"/><rect x="362.0" y="103.1" width="1.7" height="0.9" fill="#a83a30" opacity=".9"/><rect x="362.0" y="106.0" width="1.7" height="0.9" fill="#a83a30" opacity=".9"/><rect x="362.0" y="109.0" width="1.7" height="0.9" fill="#a83a30" opacity=".9"/><rect x="362.0" y="111.9" width="1.7" height="0.9" fill="#a83a30" opacity=".9"/><rect x="362.0" y="114.8" width="1.7" height="0.9" fill="#a83a30" opacity=".9"/><rect x="362.0" y="117.7" width="1.7" height="0.9" fill="#a83a30" opacity=".9"/><rect x="362.0" y="120.7" width="1.7" height="0.9" fill="#a83a30" opacity=".9"/><rect x="362.0" y="123.6" width="1.7" height="0.9" fill="#a83a30" opacity=".9"/><rect x="362.0" y="126.5" width="1.7" height="0.9" fill="#a83a30" opacity=".9"/><rect x="362.0" y="129.4" width="1.7" height="0.9" fill="#a83a30" opacity=".9"/><rect x="362.0" y="132.4" width="1.7" height="0.9" fill="#a83a30" opacity=".9"/><rect x="362.0" y="135.3" width="1.7" height="0.9" fill="#a83a30" opacity=".9"/><rect x="362.0" y="138.2" width="1.7" height="0.9" fill="#a83a30" opacity=".9"/><rect x="362.0" y="141.1" width="1.7" height="0.9" fill="#a83a30" opacity=".9"/><rect x="362.0" y="144.1" width="1.7" height="0.9" fill="#a83a30" opacity=".9"/><rect x="362.0" y="147.0" width="1.7" height="0.9" fill="#a83a30" opacity=".9"/><rect x="362.0" y="149.9" width="1.7" height="0.9" fill="#a83a30" opacity=".9"/><rect x="362.0" y="152.8" width="1.7" height="0.9" fill="#a83a30" opacity=".9"/><rect x="362.0" y="155.8" width="1.7" height="0.9" fill="#a83a30" opacity=".9"/><rect x="362.0" y="158.7" width="1.7" height="0.9" fill="#a83a30" opacity=".9"/><rect x="362.0" y="161.6" width="1.7" height="0.9" fill="#a83a30" opacity=".9"/><rect x="362.0" y="164.5" width="1.7" height="0.9" fill="#a83a30" opacity=".9"/><rect x="362.0" y="167.4" width="1.7" height="0.9" fill="#a83a30" opacity=".9"/><rect x="362.0" y="170.4" width="1.7" height="0.9" fill="#a83a30" opacity=".9"/><rect x="362.0" y="173.3" width="1.7" height="0.9" fill="#a83a30" opacity=".9"/><rect x="362.0" y="176.2" width="1.7" height="0.9" fill="#a83a30" opacity=".9"/><rect x="362.0" y="179.1" width="1.7" height="0.9" fill="#a83a30" opacity=".9"/><rect x="362.0" y="182.1" width="1.7" height="0.9" fill="#a83a30" opacity=".9"/><rect x="362.0" y="185.0" width="1.7" height="0.9" fill="#a83a30" opacity=".9"/><rect x="362.0" y="187.9" width="1.7" height="0.9" fill="#a83a30" opacity=".9"/><rect x="362.0" y="190.8" width="1.7" height="0.9" fill="#a83a30" opacity=".9"/><rect x="362.0" y="193.8" width="1.7" height="0.9" fill="#a83a30" opacity=".9"/><rect x="362.0" y="196.7" width="1.7" height="0.9" fill="#a83a30" opacity=".9"/><rect x="362.0" y="199.6" width="1.7" height="0.9" fill="#a83a30" opacity=".9"/><text x="363.7" y="209.9" font-size="5.6" font-weight="bold" fill="#e62a20" font-family="Liberation Sans, sans-serif" text-anchor="middle">0</text><text x="409.8" y="209.9" font-size="5.6" font-weight="bold" fill="#e62a20" font-family="Liberation Sans, sans-serif" text-anchor="middle">1</text><text x="455.9" y="209.9" font-size="5.6" font-weight="bold" fill="#e62a20" font-family="Liberation Sans, sans-serif" text-anchor="middle">2</text><text x="501.9" y="209.9" font-size="5.6" font-weight="bold" fill="#e62a20" font-family="Liberation Sans, sans-serif" text-anchor="middle">3</text><text x="548.0" y="209.9" font-size="5.6" font-weight="bold" fill="#e62a20" font-family="Liberation Sans, sans-serif" text-anchor="middle">4</text><rect x="363.9" y="200.6" width="0.9" height="3.6" fill="#a83a30" opacity="0.55"/><rect x="366.2" y="200.6" width="0.9" height="2.0" fill="#a83a30" opacity="0.55"/><rect x="368.5" y="200.6" width="0.9" height="2.0" fill="#a83a30" opacity="0.55"/><rect x="370.8" y="200.6" width="0.9" height="2.0" fill="#a83a30" opacity="0.55"/><rect x="373.1" y="200.6" width="0.9" height="2.0" fill="#a83a30" opacity="0.55"/><rect x="375.4" y="200.6" width="0.9" height="2.0" fill="#a83a30" opacity="0.55"/><rect x="377.7" y="200.6" width="0.9" height="2.0" fill="#a83a30" opacity="0.55"/><rect x="380.0" y="200.6" width="0.9" height="2.0" fill="#a83a30" opacity="0.55"/><rect x="382.3" y="200.6" width="0.9" height="2.0" fill="#a83a30" opacity="0.55"/><rect x="384.6" y="200.6" width="0.9" height="2.0" fill="#a83a30" opacity="0.55"/><rect x="386.9" y="200.6" width="0.9" height="3.6" fill="#a83a30" opacity="0.55"/><rect x="389.2" y="200.6" width="0.9" height="2.0" fill="#a83a30" opacity="0.55"/><rect x="391.5" y="200.6" width="0.9" height="2.0" fill="#a83a30" opacity="0.55"/><rect x="393.8" y="200.6" width="0.9" height="2.0" fill="#a83a30" opacity="0.55"/><rect x="396.2" y="200.6" width="0.9" height="2.0" fill="#a83a30" opacity="0.55"/><rect x="398.5" y="200.6" width="0.9" height="2.0" fill="#a83a30" opacity="0.55"/><rect x="400.8" y="200.6" width="0.9" height="2.0" fill="#a83a30" opacity="0.55"/><rect x="403.1" y="200.6" width="0.9" height="2.0" fill="#a83a30" opacity="0.55"/><rect x="405.4" y="200.6" width="0.9" height="2.0" fill="#a83a30" opacity="0.55"/><rect x="407.7" y="200.6" width="0.9" height="2.0" fill="#a83a30" opacity="0.55"/><rect x="410.0" y="200.6" width="0.9" height="3.6" fill="#a83a30" opacity="0.55"/><rect x="412.3" y="200.6" width="0.9" height="2.0" fill="#a83a30" opacity="0.55"/><rect x="414.6" y="200.6" width="0.9" height="2.0" fill="#a83a30" opacity="0.55"/><rect x="416.9" y="200.6" width="0.9" height="2.0" fill="#a83a30" opacity="0.55"/><rect x="419.2" y="200.6" width="0.9" height="2.0" fill="#a83a30" opacity="0.55"/><rect x="421.5" y="200.6" width="0.9" height="2.0" fill="#a83a30" opacity="0.55"/><rect x="423.8" y="200.6" width="0.9" height="2.0" fill="#a83a30" opacity="0.55"/><rect x="426.1" y="200.6" width="0.9" height="2.0" fill="#a83a30" opacity="0.55"/><rect x="428.4" y="200.6" width="0.9" height="2.0" fill="#a83a30" opacity="0.55"/><rect x="430.7" y="200.6" width="0.9" height="2.0" fill="#a83a30" opacity="0.55"/><rect x="433.0" y="200.6" width="0.9" height="3.6" fill="#a83a30" opacity="0.55"/><rect x="435.3" y="200.6" width="0.9" height="2.0" fill="#a83a30" opacity="0.55"/><rect x="437.6" y="200.6" width="0.9" height="2.0" fill="#a83a30" opacity="0.55"/><rect x="439.9" y="200.6" width="0.9" height="2.0" fill="#a83a30" opacity="0.55"/><rect x="442.2" y="200.6" width="0.9" height="2.0" fill="#a83a30" opacity="0.55"/><rect x="444.5" y="200.6" width="0.9" height="2.0" fill="#a83a30" opacity="0.55"/><rect x="446.8" y="200.6" width="0.9" height="2.0" fill="#a83a30" opacity="0.55"/><rect x="449.1" y="200.6" width="0.9" height="2.0" fill="#a83a30" opacity="0.55"/><rect x="451.4" y="200.6" width="0.9" height="2.0" fill="#a83a30" opacity="0.55"/><rect x="453.7" y="200.6" width="0.9" height="2.0" fill="#a83a30" opacity="0.55"/><rect x="456.0" y="200.6" width="0.9" height="3.6" fill="#a83a30" opacity="0.55"/><rect x="458.4" y="200.6" width="0.9" height="2.0" fill="#a83a30" opacity="0.55"/><rect x="460.7" y="200.6" width="0.9" height="2.0" fill="#a83a30" opacity="0.55"/><rect x="463.0" y="200.6" width="0.9" height="2.0" fill="#a83a30" opacity="0.55"/><rect x="465.3" y="200.6" width="0.9" height="2.0" fill="#a83a30" opacity="0.55"/><rect x="467.6" y="200.6" width="0.9" height="2.0" fill="#a83a30" opacity="0.55"/><rect x="469.9" y="200.6" width="0.9" height="2.0" fill="#a83a30" opacity="0.55"/><rect x="472.2" y="200.6" width="0.9" height="2.0" fill="#a83a30" opacity="0.55"/><rect x="474.5" y="200.6" width="0.9" height="2.0" fill="#a83a30" opacity="0.55"/><rect x="476.8" y="200.6" width="0.9" height="2.0" fill="#a83a30" opacity="0.55"/><rect x="479.1" y="200.6" width="0.9" height="3.6" fill="#a83a30" opacity="0.55"/><rect x="481.4" y="200.6" width="0.9" height="2.0" fill="#a83a30" opacity="0.55"/><rect x="483.7" y="200.6" width="0.9" height="2.0" fill="#a83a30" opacity="0.55"/><rect x="486.0" y="200.6" width="0.9" height="2.0" fill="#a83a30" opacity="0.55"/><rect x="488.3" y="200.6" width="0.9" height="2.0" fill="#a83a30" opacity="0.55"/><rect x="490.6" y="200.6" width="0.9" height="2.0" fill="#a83a30" opacity="0.55"/><rect x="492.9" y="200.6" width="0.9" height="2.0" fill="#a83a30" opacity="0.55"/><rect x="495.2" y="200.6" width="0.9" height="2.0" fill="#a83a30" opacity="0.55"/><rect x="497.5" y="200.6" width="0.9" height="2.0" fill="#a83a30" opacity="0.55"/><rect x="499.8" y="200.6" width="0.9" height="2.0" fill="#a83a30" opacity="0.55"/><rect x="502.1" y="200.6" width="0.9" height="3.6" fill="#a83a30" opacity="0.55"/><rect x="504.4" y="200.6" width="0.9" height="2.0" fill="#a83a30" opacity="0.55"/><rect x="506.7" y="200.6" width="0.9" height="2.0" fill="#a83a30" opacity="0.55"/><rect x="509.0" y="200.6" width="0.9" height="2.0" fill="#a83a30" opacity="0.55"/><rect x="511.3" y="200.6" width="0.9" height="2.0" fill="#a83a30" opacity="0.55"/><rect x="513.6" y="200.6" width="0.9" height="2.0" fill="#a83a30" opacity="0.55"/><rect x="515.9" y="200.6" width="0.9" height="2.0" fill="#a83a30" opacity="0.55"/><rect x="518.3" y="200.6" width="0.9" height="2.0" fill="#a83a30" opacity="0.55"/><rect x="520.6" y="200.6" width="0.9" height="2.0" fill="#a83a30" opacity="0.55"/><rect x="522.9" y="200.6" width="0.9" height="2.0" fill="#a83a30" opacity="0.55"/><rect x="525.2" y="200.6" width="0.9" height="3.6" fill="#a83a30" opacity="0.55"/><rect x="527.5" y="200.6" width="0.9" height="2.0" fill="#a83a30" opacity="0.55"/><rect x="529.8" y="200.6" width="0.9" height="2.0" fill="#a83a30" opacity="0.55"/><rect x="532.1" y="200.6" width="0.9" height="2.0" fill="#a83a30" opacity="0.55"/><rect x="534.4" y="200.6" width="0.9" height="2.0" fill="#a83a30" opacity="0.55"/><rect x="536.7" y="200.6" width="0.9" height="2.0" fill="#a83a30" opacity="0.55"/><rect x="539.0" y="200.6" width="0.9" height="2.0" fill="#a83a30" opacity="0.55"/><rect x="541.3" y="200.6" width="0.9" height="2.0" fill="#a83a30" opacity="0.55"/><rect x="543.6" y="200.6" width="0.9" height="2.0" fill="#a83a30" opacity="0.55"/><rect x="545.9" y="200.6" width="0.9" height="2.0" fill="#a83a30" opacity="0.55"/><rect x="548.2" y="200.6" width="0.9" height="3.6" fill="#a83a30" opacity="0.55"/><defs><linearGradient id="g34192" x1="0" y1="0" x2="0" y2="1"><stop offset="0" stop-color="#ffffff"/><stop offset="0.062" stop-color="#ffffff"/><stop offset="0.064" stop-color="#ffff00"/><stop offset="0.125" stop-color="#ffff00"/><stop offset="0.127" stop-color="#ff00ff"/><stop offset="0.22" stop-color="#ff10d0"/><stop offset="0.345" stop-color="#f01020"/><stop offset="0.347" stop-color="#148a14"/><stop offset="0.55" stop-color="#10a010"/><stop offset="0.62" stop-color="#30d030"/><stop offset="0.76" stop-color="#10e010"/><stop offset="0.85" stop-color="#1040d0"/><stop offset="0.93" stop-color="#081870"/><stop offset="1" stop-color="#000000"/></linearGradient></defs><rect x="555.2" y="101" width="8" height="100.1" fill="url(#g34192)"/></svg>
<div class="sunk" style="left:39px;top:285px;width:227.6px;height:122.2px"></div><svg class="a" style="left:39px;top:285px" width="229" height="124" viewBox="39 285 229 124"><rect x="59.8" y="293" width="183.5" height="97.3" fill="#030303"/><polygon points="59.8,353.2 59.8,335.3 61.1,332.1 62.4,331.0 63.7,333.4 65.0,333.0 66.3,333.5 67.6,334.0 68.9,334.0 70.2,334.0 71.5,335.4 72.8,335.6 74.1,334.6 75.4,335.4 76.7,337.3 78.0,336.0 79.3,336.3 80.6,337.3 81.9,337.0 83.2,335.5 84.5,330.0 85.8,325.6 87.1,325.0 88.4,324.7 89.7,325.2 91.0,324.8 92.3,326.0 93.6,326.8 94.9,325.6 96.2,326.5 97.5,327.8 98.8,329.4 100.1,329.6 101.4,330.8 102.7,331.1 104.0,332.4 105.3,333.5 106.6,334.0 107.9,333.1 109.2,334.1 110.5,333.2 111.8,334.7 113.1,335.7 114.4,336.0 115.7,334.6 117.0,334.9 118.3,337.0 119.6,336.8 120.9,337.2 122.2,335.9 123.5,337.5 124.8,336.2 126.1,332.5 127.4,328.3 128.7,325.7 130.0,324.5 131.3,326.1 132.6,326.5 133.9,325.8 135.2,325.5 136.5,325.7 137.8,327.8 139.1,329.1 140.4,328.8 141.7,329.5 143.0,331.8 144.3,331.0 145.6,331.5 146.9,331.6 148.2,333.1 149.5,334.1 150.8,333.4 152.1,334.8 153.4,334.0 154.7,334.4 156.0,335.6 157.3,336.3 158.6,336.1 159.9,336.3 161.2,336.9 162.5,337.4 163.8,337.8 165.1,337.1 166.4,337.0 167.7,335.2 169.0,330.0 170.3,326.8 171.6,324.7 172.9,326.9 174.2,325.1 175.5,326.4 176.8,324.5 178.1,325.7 179.4,327.2 180.7,327.8 182.0,328.8 183.3,329.5 184.6,329.3 185.9,331.6 187.2,331.9 188.5,331.7 189.8,332.4 191.1,333.4 192.4,333.1 193.7,333.5 195.0,334.0 196.3,334.9 197.6,335.2 198.9,334.6 200.2,336.0 201.5,335.3 202.8,336.4 204.1,335.9 205.4,337.5 206.7,337.8 208.0,337.7 209.3,337.0 210.6,334.0 211.9,328.7 213.2,326.8 214.5,324.5 215.8,325.6 217.1,326.3 218.4,324.2 219.7,326.5 221.0,326.1 222.3,327.8 223.6,328.1 224.9,329.2 226.2,330.4 227.5,330.3 228.8,330.0 230.1,332.3 231.4,332.8 232.7,332.9 234.0,332.2 235.3,333.3 236.6,333.8 237.9,333.8 239.2,334.4 240.5,334.7 241.8,336.3 243.1,335.8 243.3,335.6 243.3,353.2" fill="#1f8a20"/><path fill="#ff20c0" d="M59.7 336.6h1.6v1.6h-1.6zM62.7 343.5h1.6v1.6h-1.6zM67.5 338.2h1.6v1.6h-1.6zM67.1 343.2h1.6v1.6h-1.6zM69.1 339.9h1.6v1.6h-1.6zM71.6 343.0h1.6v1.6h-1.6zM73.4 345.3h1.6v1.6h-1.6zM77.6 346.8h1.6v1.6h-1.6zM84.0 336.1h1.6v1.6h-1.6zM85.3 332.9h1.6v1.6h-1.6zM87.0 329.5h1.6v1.6h-1.6zM93.0 330.0h1.6v1.6h-1.6zM95.7 337.1h1.6v1.6h-1.6zM97.1 341.8h1.6v1.6h-1.6zM100.4 336.4h1.6v1.6h-1.6zM103.4 341.6h1.6v1.6h-1.6zM105.0 344.0h1.6v1.6h-1.6zM109.2 336.3h1.6v1.6h-1.6zM123.0 340.5h1.6v1.6h-1.6zM124.5 340.2h1.6v1.6h-1.6zM128.8 333.9h1.6v1.6h-1.6zM128.6 338.2h1.6v1.6h-1.6zM128.8 341.4h1.6v1.6h-1.6zM133.6 337.9h1.6v1.6h-1.6zM136.5 329.3h1.6v1.6h-1.6zM136.6 334.2h1.6v1.6h-1.6zM139.3 340.8h1.6v1.6h-1.6zM143.6 338.3h1.6v1.6h-1.6zM143.6 341.3h1.6v1.6h-1.6zM152.6 344.5h1.6v1.6h-1.6zM154.4 345.3h1.6v1.6h-1.6zM157.3 340.7h1.6v1.6h-1.6zM163.2 346.8h1.6v1.6h-1.6zM165.1 345.8h1.6v1.6h-1.6zM167.6 334.7h1.6v1.6h-1.6zM185.8 340.6h1.6v1.6h-1.6zM188.5 341.2h1.6v1.6h-1.6zM194.6 337.3h1.6v1.6h-1.6zM196.4 337.9h1.6v1.6h-1.6zM196.2 339.4h1.6v1.6h-1.6zM199.6 346.1h1.6v1.6h-1.6zM201.1 344.3h1.6v1.6h-1.6zM205.5 343.9h1.6v1.6h-1.6zM211.3 334.5h1.6v1.6h-1.6zM211.2 337.8h1.6v1.6h-1.6zM211.3 342.1h1.6v1.6h-1.6zM214.4 332.4h1.6v1.6h-1.6zM215.5 341.2h1.6v1.6h-1.6zM222.1 338.5h1.6v1.6h-1.6zM221.6 341.5h1.6v1.6h-1.6zM223.3 333.2h1.6v1.6h-1.6zM225.0 334.3h1.6v1.6h-1.6zM226.1 339.6h1.6v1.6h-1.6zM232.1 343.2h1.6v1.6h-1.6zM236.9 336.6h1.6v1.6h-1.6zM236.7 346.0h1.6v1.6h-1.6z"/><path fill="#28c028" d="M59.7 338.2h1.6v1.6h-1.6zM63.0 340.6h1.6v1.6h-1.6zM66.0 339.5h1.6v1.6h-1.6zM66.0 344.3h1.6v1.6h-1.6zM70.3 337.9h1.6v1.6h-1.6zM71.8 338.8h1.6v1.6h-1.6zM73.6 342.2h1.6v1.6h-1.6zM76.1 344.7h1.6v1.6h-1.6zM79.1 342.9h1.6v1.6h-1.6zM85.4 331.6h1.6v1.6h-1.6zM88.1 329.6h1.6v1.6h-1.6zM91.0 334.8h1.6v1.6h-1.6zM95.7 331.3h1.6v1.6h-1.6zM96.1 333.0h1.6v1.6h-1.6zM96.1 339.0h1.6v1.6h-1.6zM97.5 337.3h1.6v1.6h-1.6zM100.4 339.4h1.6v1.6h-1.6zM100.1 342.3h1.6v1.6h-1.6zM101.7 338.8h1.6v1.6h-1.6zM101.6 341.4h1.6v1.6h-1.6zM103.2 338.3h1.6v1.6h-1.6zM107.8 339.5h1.6v1.6h-1.6zM107.8 344.1h1.6v1.6h-1.6zM113.9 338.7h1.6v1.6h-1.6zM114.0 340.6h1.6v1.6h-1.6zM113.7 345.0h1.6v1.6h-1.6zM116.6 343.4h1.6v1.6h-1.6zM127.0 330.4h1.6v1.6h-1.6zM128.8 328.2h1.6v1.6h-1.6zM131.8 336.8h1.6v1.6h-1.6zM132.0 339.8h1.6v1.6h-1.6zM131.5 341.5h1.6v1.6h-1.6zM134.6 330.0h1.6v1.6h-1.6zM137.7 343.3h1.6v1.6h-1.6zM140.7 338.1h1.6v1.6h-1.6zM146.7 342.7h1.6v1.6h-1.6zM149.8 340.7h1.6v1.6h-1.6zM151.4 339.4h1.6v1.6h-1.6zM152.8 341.5h1.6v1.6h-1.6zM154.3 337.4h1.6v1.6h-1.6zM154.4 342.2h1.6v1.6h-1.6zM157.4 346.8h1.6v1.6h-1.6zM158.8 339.5h1.6v1.6h-1.6zM158.8 345.2h1.6v1.6h-1.6zM160.4 345.9h1.6v1.6h-1.6zM161.9 346.3h1.6v1.6h-1.6zM163.3 340.4h1.6v1.6h-1.6zM166.6 342.2h1.6v1.6h-1.6zM166.1 346.9h1.6v1.6h-1.6zM175.6 329.0h1.6v1.6h-1.6zM176.8 332.9h1.6v1.6h-1.6zM176.8 340.3h1.6v1.6h-1.6zM180.0 337.9h1.6v1.6h-1.6zM181.3 339.1h1.6v1.6h-1.6zM184.2 332.9h1.6v1.6h-1.6zM184.1 337.3h1.6v1.6h-1.6zM184.3 340.5h1.6v1.6h-1.6zM193.2 336.9h1.6v1.6h-1.6zM193.3 344.0h1.6v1.6h-1.6zM197.7 337.5h1.6v1.6h-1.6zM198.1 340.8h1.6v1.6h-1.6zM199.6 341.9h1.6v1.6h-1.6zM202.0 345.4h1.6v1.6h-1.6zM206.6 340.7h1.6v1.6h-1.6zM213.0 335.2h1.6v1.6h-1.6zM214.2 328.2h1.6v1.6h-1.6zM215.6 337.9h1.6v1.6h-1.6zM217.3 336.8h1.6v1.6h-1.6zM217.6 341.4h1.6v1.6h-1.6zM218.7 329.4h1.6v1.6h-1.6zM218.8 330.9h1.6v1.6h-1.6zM218.5 333.7h1.6v1.6h-1.6zM218.9 339.5h1.6v1.6h-1.6zM223.6 343.3h1.6v1.6h-1.6zM226.5 333.6h1.6v1.6h-1.6zM229.2 336.6h1.6v1.6h-1.6zM229.2 338.1h1.6v1.6h-1.6zM232.3 335.6h1.6v1.6h-1.6zM233.7 338.5h1.6v1.6h-1.6zM234.0 340.2h1.6v1.6h-1.6zM236.7 338.0h1.6v1.6h-1.6zM238.4 338.8h1.6v1.6h-1.6zM238.3 340.6h1.6v1.6h-1.6zM238.3 343.3h1.6v1.6h-1.6zM239.6 337.8h1.6v1.6h-1.6zM239.7 345.0h1.6v1.6h-1.6z"/><path fill="#e82858" d="M59.9 339.7h1.6v1.6h-1.6zM59.7 344.2h1.6v1.6h-1.6zM62.8 342.2h1.6v1.6h-1.6zM71.8 344.5h1.6v1.6h-1.6zM72.1 345.8h1.6v1.6h-1.6zM73.0 337.8h1.6v1.6h-1.6zM85.4 334.8h1.6v1.6h-1.6zM85.4 335.7h1.6v1.6h-1.6zM85.1 337.5h1.6v1.6h-1.6zM86.6 337.1h1.6v1.6h-1.6zM87.1 339.7h1.6v1.6h-1.6zM88.5 330.7h1.6v1.6h-1.6zM91.0 337.8h1.6v1.6h-1.6zM91.2 339.3h1.6v1.6h-1.6zM94.2 336.0h1.6v1.6h-1.6zM95.8 334.4h1.6v1.6h-1.6zM97.4 338.8h1.6v1.6h-1.6zM98.7 333.9h1.6v1.6h-1.6zM106.2 342.6h1.6v1.6h-1.6zM109.3 342.7h1.6v1.6h-1.6zM111.1 337.5h1.6v1.6h-1.6zM110.6 340.2h1.6v1.6h-1.6zM118.3 344.2h1.6v1.6h-1.6zM125.5 344.9h1.6v1.6h-1.6zM127.4 335.8h1.6v1.6h-1.6zM130.1 329.0h1.6v1.6h-1.6zM133.5 329.0h1.6v1.6h-1.6zM133.5 332.0h1.6v1.6h-1.6zM133.4 335.0h1.6v1.6h-1.6zM134.9 338.9h1.6v1.6h-1.6zM134.6 340.4h1.6v1.6h-1.6zM134.5 342.1h1.6v1.6h-1.6zM136.2 341.3h1.6v1.6h-1.6zM137.9 336.1h1.6v1.6h-1.6zM139.4 332.1h1.6v1.6h-1.6zM140.7 336.8h1.6v1.6h-1.6zM143.7 334.1h1.6v1.6h-1.6zM146.7 344.3h1.6v1.6h-1.6zM149.6 338.0h1.6v1.6h-1.6zM149.6 345.6h1.6v1.6h-1.6zM156.0 340.2h1.6v1.6h-1.6zM162.0 343.2h1.6v1.6h-1.6zM167.5 344.1h1.6v1.6h-1.6zM173.5 328.7h1.6v1.6h-1.6zM175.1 337.6h1.6v1.6h-1.6zM175.4 342.3h1.6v1.6h-1.6zM176.6 334.1h1.6v1.6h-1.6zM178.1 341.7h1.6v1.6h-1.6zM180.0 341.3h1.6v1.6h-1.6zM187.0 335.0h1.6v1.6h-1.6zM194.8 340.5h1.6v1.6h-1.6zM196.6 345.3h1.6v1.6h-1.6zM197.8 339.5h1.6v1.6h-1.6zM201.0 338.3h1.6v1.6h-1.6zM205.4 346.8h1.6v1.6h-1.6zM209.8 343.0h1.6v1.6h-1.6zM211.4 340.4h1.6v1.6h-1.6zM213.1 341.5h1.6v1.6h-1.6zM214.1 334.2h1.6v1.6h-1.6zM214.3 335.3h1.6v1.6h-1.6zM214.5 336.6h1.6v1.6h-1.6zM220.0 332.1h1.6v1.6h-1.6zM220.4 334.8h1.6v1.6h-1.6zM220.6 342.3h1.6v1.6h-1.6zM224.6 337.6h1.6v1.6h-1.6zM227.6 335.9h1.6v1.6h-1.6zM227.9 338.9h1.6v1.6h-1.6zM227.9 340.3h1.6v1.6h-1.6zM229.1 339.6h1.6v1.6h-1.6zM230.6 340.0h1.6v1.6h-1.6zM232.2 341.7h1.6v1.6h-1.6zM232.5 344.7h1.6v1.6h-1.6zM233.6 335.8h1.6v1.6h-1.6zM236.8 342.8h1.6v1.6h-1.6zM238.5 341.9h1.6v1.6h-1.6zM240.0 344.0h1.6v1.6h-1.6zM241.3 339.3h1.6v1.6h-1.6zM241.0 342.3h1.6v1.6h-1.6zM241.4 344.9h1.6v1.6h-1.6z"/><path fill="#f01890" d="M59.5 341.3h1.6v1.6h-1.6zM62.7 335.8h1.6v1.6h-1.6zM62.9 344.9h1.6v1.6h-1.6zM64.0 336.2h1.6v1.6h-1.6zM70.4 342.4h1.6v1.6h-1.6zM70.0 343.8h1.6v1.6h-1.6zM73.4 343.6h1.6v1.6h-1.6zM85.5 329.7h1.6v1.6h-1.6zM87.0 334.2h1.6v1.6h-1.6zM89.9 336.8h1.6v1.6h-1.6zM91.2 331.9h1.6v1.6h-1.6zM92.8 331.4h1.6v1.6h-1.6zM92.9 334.2h1.6v1.6h-1.6zM92.9 340.2h1.6v1.6h-1.6zM94.4 330.3h1.6v1.6h-1.6zM96.0 329.9h1.6v1.6h-1.6zM98.7 337.0h1.6v1.6h-1.6zM100.3 341.0h1.6v1.6h-1.6zM101.5 344.6h1.6v1.6h-1.6zM103.5 343.1h1.6v1.6h-1.6zM104.5 345.6h1.6v1.6h-1.6zM106.1 341.1h1.6v1.6h-1.6zM115.1 339.4h1.6v1.6h-1.6zM115.4 342.1h1.6v1.6h-1.6zM118.3 343.0h1.6v1.6h-1.6zM124.3 344.6h1.6v1.6h-1.6zM125.6 335.7h1.6v1.6h-1.6zM133.1 330.2h1.6v1.6h-1.6zM134.6 331.8h1.6v1.6h-1.6zM134.9 333.0h1.6v1.6h-1.6zM136.0 331.2h1.6v1.6h-1.6zM138.0 332.9h1.6v1.6h-1.6zM139.6 339.6h1.6v1.6h-1.6zM142.4 335.1h1.6v1.6h-1.6zM142.3 338.1h1.6v1.6h-1.6zM146.7 338.2h1.6v1.6h-1.6zM146.8 339.7h1.6v1.6h-1.6zM148.3 342.6h1.6v1.6h-1.6zM151.4 343.6h1.6v1.6h-1.6zM160.2 342.6h1.6v1.6h-1.6zM160.3 344.5h1.6v1.6h-1.6zM166.3 340.6h1.6v1.6h-1.6zM167.8 336.3h1.6v1.6h-1.6zM168.0 340.8h1.6v1.6h-1.6zM169.1 333.7h1.6v1.6h-1.6zM171.1 327.6h1.6v1.6h-1.6zM171.0 329.6h1.6v1.6h-1.6zM170.5 338.4h1.6v1.6h-1.6zM172.1 334.3h1.6v1.6h-1.6zM175.2 339.1h1.6v1.6h-1.6zM179.7 330.4h1.6v1.6h-1.6zM181.3 332.0h1.6v1.6h-1.6zM181.3 340.9h1.6v1.6h-1.6zM182.7 336.8h1.6v1.6h-1.6zM183.0 341.5h1.6v1.6h-1.6zM189.1 338.3h1.6v1.6h-1.6zM190.3 342.3h1.6v1.6h-1.6zM191.7 336.0h1.6v1.6h-1.6zM193.1 341.0h1.6v1.6h-1.6zM200.7 343.0h1.6v1.6h-1.6zM202.3 342.0h1.6v1.6h-1.6zM205.2 342.1h1.6v1.6h-1.6zM205.5 345.2h1.6v1.6h-1.6zM206.7 343.8h1.6v1.6h-1.6zM211.2 332.9h1.6v1.6h-1.6zM212.8 330.7h1.6v1.6h-1.6zM217.5 329.5h1.6v1.6h-1.6zM218.9 332.3h1.6v1.6h-1.6zM220.3 328.8h1.6v1.6h-1.6zM222.0 339.6h1.6v1.6h-1.6zM223.1 337.3h1.6v1.6h-1.6zM226.4 334.9h1.6v1.6h-1.6zM227.5 334.7h1.6v1.6h-1.6zM229.6 342.8h1.6v1.6h-1.6zM234.1 341.4h1.6v1.6h-1.6zM235.6 338.3h1.6v1.6h-1.6z"/><path fill="#30d030" d="M60.0 342.8h1.6v1.6h-1.6zM61.6 337.5h1.6v1.6h-1.6zM64.1 339.0h1.6v1.6h-1.6zM67.4 344.5h1.6v1.6h-1.6zM74.6 341.6h1.6v1.6h-1.6zM75.1 344.8h1.6v1.6h-1.6zM76.2 345.9h1.6v1.6h-1.6zM77.7 340.5h1.6v1.6h-1.6zM78.0 342.0h1.6v1.6h-1.6zM78.0 345.1h1.6v1.6h-1.6zM82.5 338.5h1.6v1.6h-1.6zM86.6 327.7h1.6v1.6h-1.6zM89.5 338.5h1.6v1.6h-1.6zM91.4 333.1h1.6v1.6h-1.6zM94.5 328.6h1.6v1.6h-1.6zM94.4 331.6h1.6v1.6h-1.6zM94.4 339.0h1.6v1.6h-1.6zM94.1 340.5h1.6v1.6h-1.6zM95.9 342.0h1.6v1.6h-1.6zM99.0 338.3h1.6v1.6h-1.6zM100.1 338.1h1.6v1.6h-1.6zM103.3 336.9h1.6v1.6h-1.6zM104.9 342.5h1.6v1.6h-1.6zM106.5 336.7h1.6v1.6h-1.6zM106.3 339.6h1.6v1.6h-1.6zM107.5 341.0h1.6v1.6h-1.6zM107.8 342.7h1.6v1.6h-1.6zM109.5 339.6h1.6v1.6h-1.6zM112.5 338.8h1.6v1.6h-1.6zM112.3 343.1h1.6v1.6h-1.6zM116.7 344.7h1.6v1.6h-1.6zM124.5 341.5h1.6v1.6h-1.6zM125.9 343.3h1.6v1.6h-1.6zM127.1 331.5h1.6v1.6h-1.6zM127.1 340.6h1.6v1.6h-1.6zM131.9 334.1h1.6v1.6h-1.6zM131.6 335.8h1.6v1.6h-1.6zM133.5 342.0h1.6v1.6h-1.6zM134.6 337.8h1.6v1.6h-1.6zM139.6 337.8h1.6v1.6h-1.6zM140.9 339.9h1.6v1.6h-1.6zM145.4 337.8h1.6v1.6h-1.6zM148.2 336.8h1.6v1.6h-1.6zM155.9 344.9h1.6v1.6h-1.6zM161.7 341.7h1.6v1.6h-1.6zM169.5 335.1h1.6v1.6h-1.6zM171.1 339.9h1.6v1.6h-1.6zM172.5 329.8h1.6v1.6h-1.6zM178.4 329.8h1.6v1.6h-1.6zM178.5 335.4h1.6v1.6h-1.6zM180.0 331.9h1.6v1.6h-1.6zM183.0 332.1h1.6v1.6h-1.6zM182.8 340.1h1.6v1.6h-1.6zM185.6 336.4h1.6v1.6h-1.6zM185.5 343.8h1.6v1.6h-1.6zM190.5 339.2h1.6v1.6h-1.6zM190.1 345.4h1.6v1.6h-1.6zM191.5 337.4h1.6v1.6h-1.6zM202.2 339.1h1.6v1.6h-1.6zM209.9 340.2h1.6v1.6h-1.6zM211.2 343.6h1.6v1.6h-1.6zM212.8 332.3h1.6v1.6h-1.6zM212.7 333.6h1.6v1.6h-1.6zM217.4 338.1h1.6v1.6h-1.6zM217.1 339.9h1.6v1.6h-1.6zM222.1 342.7h1.6v1.6h-1.6zM223.2 340.5h1.6v1.6h-1.6zM226.6 337.8h1.6v1.6h-1.6zM226.6 340.7h1.6v1.6h-1.6zM227.8 343.5h1.6v1.6h-1.6zM230.6 341.6h1.6v1.6h-1.6zM233.9 337.2h1.6v1.6h-1.6zM236.6 341.2h1.6v1.6h-1.6z"/><path fill="#105810" d="M60.0 345.4h1.6v1.6h-1.6zM61.1 335.9h1.6v1.6h-1.6zM61.1 338.9h1.6v1.6h-1.6zM61.4 344.9h1.6v1.6h-1.6zM62.7 339.0h1.6v1.6h-1.6zM64.1 337.3h1.6v1.6h-1.6zM68.6 338.4h1.6v1.6h-1.6zM68.9 341.2h1.6v1.6h-1.6zM74.9 343.2h1.6v1.6h-1.6zM74.7 345.9h1.6v1.6h-1.6zM76.5 343.2h1.6v1.6h-1.6zM77.8 338.9h1.6v1.6h-1.6zM80.8 343.0h1.6v1.6h-1.6zM82.2 344.7h1.6v1.6h-1.6zM85.2 338.7h1.6v1.6h-1.6zM87.1 335.3h1.6v1.6h-1.6zM88.4 338.5h1.6v1.6h-1.6zM88.1 339.8h1.6v1.6h-1.6zM89.6 341.7h1.6v1.6h-1.6zM91.5 330.1h1.6v1.6h-1.6zM94.4 333.4h1.6v1.6h-1.6zM97.2 340.4h1.6v1.6h-1.6zM102.1 343.4h1.6v1.6h-1.6zM104.7 341.2h1.6v1.6h-1.6zM106.5 345.5h1.6v1.6h-1.6zM110.5 341.8h1.6v1.6h-1.6zM115.1 340.6h1.6v1.6h-1.6zM117.0 346.3h1.6v1.6h-1.6zM119.6 344.3h1.6v1.6h-1.6zM121.4 342.2h1.6v1.6h-1.6zM121.0 346.8h1.6v1.6h-1.6zM122.8 342.2h1.6v1.6h-1.6zM124.1 346.2h1.6v1.6h-1.6zM125.9 338.5h1.6v1.6h-1.6zM127.5 332.8h1.6v1.6h-1.6zM130.5 331.6h1.6v1.6h-1.6zM133.3 333.0h1.6v1.6h-1.6zM133.3 340.5h1.6v1.6h-1.6zM137.7 339.0h1.6v1.6h-1.6zM139.1 342.6h1.6v1.6h-1.6zM143.5 340.2h1.6v1.6h-1.6zM145.3 336.2h1.6v1.6h-1.6zM146.8 336.9h1.6v1.6h-1.6zM148.5 339.6h1.6v1.6h-1.6zM149.7 339.5h1.6v1.6h-1.6zM152.9 340.0h1.6v1.6h-1.6zM154.1 339.1h1.6v1.6h-1.6zM154.1 343.4h1.6v1.6h-1.6zM158.6 342.3h1.6v1.6h-1.6zM164.6 341.7h1.6v1.6h-1.6zM169.4 330.4h1.6v1.6h-1.6zM169.3 342.4h1.6v1.6h-1.6zM172.1 336.1h1.6v1.6h-1.6zM172.6 340.4h1.6v1.6h-1.6zM174.1 332.7h1.6v1.6h-1.6zM173.9 335.8h1.6v1.6h-1.6zM173.8 341.7h1.6v1.6h-1.6zM176.8 335.6h1.6v1.6h-1.6zM178.2 338.5h1.6v1.6h-1.6zM180.0 333.6h1.6v1.6h-1.6zM182.5 334.2h1.6v1.6h-1.6zM184.4 339.2h1.6v1.6h-1.6zM184.0 341.8h1.6v1.6h-1.6zM185.6 339.1h1.6v1.6h-1.6zM187.2 337.9h1.6v1.6h-1.6zM187.5 339.2h1.6v1.6h-1.6zM187.5 340.9h1.6v1.6h-1.6zM188.7 344.4h1.6v1.6h-1.6zM190.3 340.8h1.6v1.6h-1.6zM191.8 342.3h1.6v1.6h-1.6zM194.8 341.9h1.6v1.6h-1.6zM196.2 341.2h1.6v1.6h-1.6zM199.4 340.0h1.6v1.6h-1.6zM200.5 339.6h1.6v1.6h-1.6zM202.1 343.8h1.6v1.6h-1.6zM204.1 345.1h1.6v1.6h-1.6zM205.6 340.8h1.6v1.6h-1.6zM208.1 340.0h1.6v1.6h-1.6zM209.6 342.1h1.6v1.6h-1.6zM211.4 338.9h1.6v1.6h-1.6zM214.4 329.3h1.6v1.6h-1.6zM214.2 331.1h1.6v1.6h-1.6zM214.4 338.3h1.6v1.6h-1.6zM214.0 341.2h1.6v1.6h-1.6zM216.0 335.1h1.6v1.6h-1.6zM218.8 336.8h1.6v1.6h-1.6zM220.5 333.5h1.6v1.6h-1.6zM220.2 336.8h1.6v1.6h-1.6zM227.7 341.8h1.6v1.6h-1.6zM229.3 340.8h1.6v1.6h-1.6zM230.6 338.6h1.6v1.6h-1.6zM232.1 339.0h1.6v1.6h-1.6zM238.3 337.5h1.6v1.6h-1.6z"/><path fill="#0b4a0b" d="M60.0 348.3h1.6v1.6h-1.6zM65.8 350.2h1.6v1.6h-1.6zM67.6 335.4h1.6v1.6h-1.6zM67.3 349.3h1.6v1.6h-1.6zM67.2 350.8h1.6v1.6h-1.6zM68.8 334.3h1.6v1.6h-1.6zM68.9 335.4h1.6v1.6h-1.6zM73.3 346.7h1.6v1.6h-1.6zM75.0 337.0h1.6v1.6h-1.6zM76.2 338.6h1.6v1.6h-1.6zM76.2 350.3h1.6v1.6h-1.6zM76.2 351.8h1.6v1.6h-1.6zM77.6 348.1h1.6v1.6h-1.6zM79.0 351.8h1.6v1.6h-1.6zM80.7 347.6h1.6v1.6h-1.6zM83.8 331.4h1.6v1.6h-1.6zM85.4 326.9h1.6v1.6h-1.6zM85.4 345.0h1.6v1.6h-1.6zM85.5 351.0h1.6v1.6h-1.6zM86.6 325.0h1.6v1.6h-1.6zM86.9 345.9h1.6v1.6h-1.6zM88.6 324.9h1.6v1.6h-1.6zM90.1 344.7h1.6v1.6h-1.6zM89.8 345.7h1.6v1.6h-1.6zM91.1 343.9h1.6v1.6h-1.6zM91.5 350.0h1.6v1.6h-1.6zM94.0 345.2h1.6v1.6h-1.6zM97.2 328.6h1.6v1.6h-1.6zM97.2 347.6h1.6v1.6h-1.6zM97.3 351.1h1.6v1.6h-1.6zM98.7 344.6h1.6v1.6h-1.6zM101.6 350.8h1.6v1.6h-1.6zM109.4 349.8h1.6v1.6h-1.6zM111.0 348.0h1.6v1.6h-1.6zM110.6 350.6h1.6v1.6h-1.6zM112.3 336.9h1.6v1.6h-1.6zM116.7 337.5h1.6v1.6h-1.6zM117.0 352.5h1.6v1.6h-1.6zM118.1 352.0h1.6v1.6h-1.6zM119.9 350.8h1.6v1.6h-1.6zM121.3 349.5h1.6v1.6h-1.6zM123.0 347.9h1.6v1.6h-1.6zM126.0 332.6h1.6v1.6h-1.6zM127.5 349.7h1.6v1.6h-1.6zM128.9 342.7h1.6v1.6h-1.6zM130.2 343.8h1.6v1.6h-1.6zM130.2 346.5h1.6v1.6h-1.6zM131.6 328.3h1.6v1.6h-1.6zM133.3 348.3h1.6v1.6h-1.6zM133.5 350.0h1.6v1.6h-1.6zM134.8 349.6h1.6v1.6h-1.6zM136.1 328.2h1.6v1.6h-1.6zM139.1 345.1h1.6v1.6h-1.6zM139.6 351.4h1.6v1.6h-1.6zM141.1 350.1h1.6v1.6h-1.6zM142.2 345.5h1.6v1.6h-1.6zM143.9 347.5h1.6v1.6h-1.6zM144.0 348.9h1.6v1.6h-1.6zM151.3 346.4h1.6v1.6h-1.6zM151.4 348.1h1.6v1.6h-1.6zM152.6 346.3h1.6v1.6h-1.6zM158.6 338.1h1.6v1.6h-1.6zM160.0 336.6h1.6v1.6h-1.6zM160.3 349.1h1.6v1.6h-1.6zM163.1 337.9h1.6v1.6h-1.6zM173.9 343.1h1.6v1.6h-1.6zM174.1 345.1h1.6v1.6h-1.6zM175.0 348.2h1.6v1.6h-1.6zM177.1 344.6h1.6v1.6h-1.6zM178.4 350.5h1.6v1.6h-1.6zM182.8 344.5h1.6v1.6h-1.6zM183.0 351.7h1.6v1.6h-1.6zM187.4 331.5h1.6v1.6h-1.6zM197.5 349.7h1.6v1.6h-1.6zM199.1 335.7h1.6v1.6h-1.6zM199.1 352.4h1.6v1.6h-1.6zM205.4 339.1h1.6v1.6h-1.6zM206.5 351.6h1.6v1.6h-1.6zM208.0 337.3h1.6v1.6h-1.6zM209.5 334.0h1.6v1.6h-1.6zM209.8 348.0h1.6v1.6h-1.6zM211.1 328.5h1.6v1.6h-1.6zM211.3 330.0h1.6v1.6h-1.6zM211.3 344.8h1.6v1.6h-1.6zM215.8 348.2h1.6v1.6h-1.6zM217.5 345.7h1.6v1.6h-1.6zM218.8 347.3h1.6v1.6h-1.6zM222.0 345.7h1.6v1.6h-1.6zM223.4 346.4h1.6v1.6h-1.6zM223.2 347.8h1.6v1.6h-1.6zM227.8 349.4h1.6v1.6h-1.6zM227.9 351.3h1.6v1.6h-1.6zM231.1 346.1h1.6v1.6h-1.6zM235.5 333.8h1.6v1.6h-1.6zM235.4 350.3h1.6v1.6h-1.6zM238.2 349.1h1.6v1.6h-1.6z"/><path fill="#25c025" d="M61.6 331.1h1.6v1.6h-1.6zM64.2 334.4h1.6v1.6h-1.6zM64.3 351.0h1.6v1.6h-1.6zM65.8 334.9h1.6v1.6h-1.6zM69.0 348.9h1.6v1.6h-1.6zM71.6 335.7h1.6v1.6h-1.6zM71.7 352.3h1.6v1.6h-1.6zM73.1 351.0h1.6v1.6h-1.6zM79.2 338.2h1.6v1.6h-1.6zM83.9 351.3h1.6v1.6h-1.6zM85.2 349.7h1.6v1.6h-1.6zM88.5 345.9h1.6v1.6h-1.6zM89.6 347.6h1.6v1.6h-1.6zM94.2 348.4h1.6v1.6h-1.6zM96.1 326.7h1.6v1.6h-1.6zM97.1 346.5h1.6v1.6h-1.6zM101.6 349.3h1.6v1.6h-1.6zM103.2 348.9h1.6v1.6h-1.6zM106.1 333.7h1.6v1.6h-1.6zM106.4 350.4h1.6v1.6h-1.6zM107.7 348.5h1.6v1.6h-1.6zM109.6 333.8h1.6v1.6h-1.6zM113.6 351.0h1.6v1.6h-1.6zM118.4 338.3h1.6v1.6h-1.6zM121.6 335.8h1.6v1.6h-1.6zM126.0 350.7h1.6v1.6h-1.6zM127.1 343.5h1.6v1.6h-1.6zM129.0 325.0h1.6v1.6h-1.6zM128.5 345.8h1.6v1.6h-1.6zM128.7 347.4h1.6v1.6h-1.6zM128.9 349.0h1.6v1.6h-1.6zM128.8 350.4h1.6v1.6h-1.6zM130.1 349.9h1.6v1.6h-1.6zM131.6 347.6h1.6v1.6h-1.6zM134.6 346.3h1.6v1.6h-1.6zM134.8 350.9h1.6v1.6h-1.6zM146.8 332.1h1.6v1.6h-1.6zM146.6 347.0h1.6v1.6h-1.6zM148.5 352.0h1.6v1.6h-1.6zM149.8 335.1h1.6v1.6h-1.6zM151.2 351.4h1.6v1.6h-1.6zM155.6 336.1h1.6v1.6h-1.6zM157.0 349.7h1.6v1.6h-1.6zM157.3 351.2h1.6v1.6h-1.6zM160.2 352.1h1.6v1.6h-1.6zM161.6 350.9h1.6v1.6h-1.6zM163.5 351.1h1.6v1.6h-1.6zM164.8 338.8h1.6v1.6h-1.6zM165.1 351.8h1.6v1.6h-1.6zM168.1 350.2h1.6v1.6h-1.6zM170.9 324.6h1.6v1.6h-1.6zM170.8 326.3h1.6v1.6h-1.6zM170.9 347.1h1.6v1.6h-1.6zM172.4 346.4h1.6v1.6h-1.6zM173.6 346.1h1.6v1.6h-1.6zM175.5 325.5h1.6v1.6h-1.6zM175.3 351.4h1.6v1.6h-1.6zM179.8 350.0h1.6v1.6h-1.6zM185.6 345.5h1.6v1.6h-1.6zM185.8 348.2h1.6v1.6h-1.6zM187.1 348.1h1.6v1.6h-1.6zM190.5 351.1h1.6v1.6h-1.6zM191.7 332.9h1.6v1.6h-1.6zM199.5 348.0h1.6v1.6h-1.6zM199.2 351.0h1.6v1.6h-1.6zM205.5 349.4h1.6v1.6h-1.6zM214.6 343.2h1.6v1.6h-1.6zM214.5 350.5h1.6v1.6h-1.6zM215.5 350.2h1.6v1.6h-1.6zM221.7 348.6h1.6v1.6h-1.6zM221.8 350.3h1.6v1.6h-1.6zM223.3 349.5h1.6v1.6h-1.6zM224.6 346.2h1.6v1.6h-1.6zM226.1 332.0h1.6v1.6h-1.6zM229.3 345.4h1.6v1.6h-1.6zM229.2 348.3h1.6v1.6h-1.6zM232.5 346.3h1.6v1.6h-1.6zM235.5 351.8h1.6v1.6h-1.6zM237.0 347.3h1.6v1.6h-1.6zM238.3 334.5h1.6v1.6h-1.6zM238.1 346.1h1.6v1.6h-1.6zM239.6 336.4h1.6v1.6h-1.6zM239.9 348.0h1.6v1.6h-1.6zM241.4 349.6h1.6v1.6h-1.6z"/><path fill="#ff38d0" d="M61.4 340.6h1.6v1.6h-1.6zM62.7 337.8h1.6v1.6h-1.6zM70.1 345.1h1.6v1.6h-1.6zM73.3 340.8h1.6v1.6h-1.6zM82.2 343.5h1.6v1.6h-1.6zM83.9 339.0h1.6v1.6h-1.6zM89.9 335.2h1.6v1.6h-1.6zM91.2 340.5h1.6v1.6h-1.6zM97.3 343.5h1.6v1.6h-1.6zM109.2 343.9h1.6v1.6h-1.6zM110.7 344.9h1.6v1.6h-1.6zM112.1 340.1h1.6v1.6h-1.6zM112.5 344.6h1.6v1.6h-1.6zM124.0 343.0h1.6v1.6h-1.6zM125.7 337.4h1.6v1.6h-1.6zM127.3 342.3h1.6v1.6h-1.6zM128.7 329.7h1.6v1.6h-1.6zM128.6 332.3h1.6v1.6h-1.6zM128.5 336.8h1.6v1.6h-1.6zM130.1 333.3h1.6v1.6h-1.6zM133.2 339.2h1.6v1.6h-1.6zM137.9 331.2h1.6v1.6h-1.6zM138.0 337.4h1.6v1.6h-1.6zM142.2 343.8h1.6v1.6h-1.6zM143.9 342.8h1.6v1.6h-1.6zM149.6 343.8h1.6v1.6h-1.6zM155.9 343.2h1.6v1.6h-1.6zM156.0 346.2h1.6v1.6h-1.6zM157.6 342.1h1.6v1.6h-1.6zM157.3 345.3h1.6v1.6h-1.6zM158.6 344.0h1.6v1.6h-1.6zM172.6 331.4h1.6v1.6h-1.6zM172.3 341.5h1.6v1.6h-1.6zM175.4 340.6h1.6v1.6h-1.6zM176.5 338.8h1.6v1.6h-1.6zM188.6 335.5h1.6v1.6h-1.6zM194.9 345.0h1.6v1.6h-1.6zM196.1 342.6h1.6v1.6h-1.6zM203.7 341.2h1.6v1.6h-1.6zM203.9 342.2h1.6v1.6h-1.6zM207.1 345.3h1.6v1.6h-1.6zM207.0 346.9h1.6v1.6h-1.6zM208.6 344.7h1.6v1.6h-1.6zM209.8 344.9h1.6v1.6h-1.6zM212.6 338.1h1.6v1.6h-1.6zM214.4 339.8h1.6v1.6h-1.6zM216.0 333.8h1.6v1.6h-1.6zM215.7 339.4h1.6v1.6h-1.6zM215.7 342.7h1.6v1.6h-1.6zM217.5 327.6h1.6v1.6h-1.6zM218.6 338.3h1.6v1.6h-1.6zM218.8 342.4h1.6v1.6h-1.6zM221.7 332.6h1.6v1.6h-1.6zM221.6 335.6h1.6v1.6h-1.6zM227.8 337.7h1.6v1.6h-1.6zM230.6 343.5h1.6v1.6h-1.6zM234.1 344.4h1.6v1.6h-1.6zM235.6 341.1h1.6v1.6h-1.6zM239.7 342.3h1.6v1.6h-1.6z"/><path fill="#ff10a8" d="M61.2 343.1h1.6v1.6h-1.6zM64.4 340.7h1.6v1.6h-1.6zM65.7 345.6h1.6v1.6h-1.6zM70.3 341.1h1.6v1.6h-1.6zM74.9 339.8h1.6v1.6h-1.6zM79.4 341.4h1.6v1.6h-1.6zM79.0 344.3h1.6v1.6h-1.6zM82.2 346.3h1.6v1.6h-1.6zM85.1 342.3h1.6v1.6h-1.6zM86.6 341.5h1.6v1.6h-1.6zM88.2 336.8h1.6v1.6h-1.6zM88.0 341.6h1.6v1.6h-1.6zM89.7 333.7h1.6v1.6h-1.6zM91.5 336.4h1.6v1.6h-1.6zM91.1 342.4h1.6v1.6h-1.6zM92.5 338.5h1.6v1.6h-1.6zM94.5 337.4h1.6v1.6h-1.6zM95.7 335.9h1.6v1.6h-1.6zM98.6 341.6h1.6v1.6h-1.6zM101.6 335.7h1.6v1.6h-1.6zM105.0 338.3h1.6v1.6h-1.6zM112.1 341.4h1.6v1.6h-1.6zM113.9 346.5h1.6v1.6h-1.6zM115.2 345.0h1.6v1.6h-1.6zM118.4 339.6h1.6v1.6h-1.6zM119.8 343.2h1.6v1.6h-1.6zM124.4 338.5h1.6v1.6h-1.6zM130.2 334.5h1.6v1.6h-1.6zM131.7 342.8h1.6v1.6h-1.6zM136.6 342.9h1.6v1.6h-1.6zM137.5 342.0h1.6v1.6h-1.6zM139.2 333.5h1.6v1.6h-1.6zM139.1 336.7h1.6v1.6h-1.6zM140.8 335.2h1.6v1.6h-1.6zM142.1 342.5h1.6v1.6h-1.6zM144.0 344.5h1.6v1.6h-1.6zM146.6 335.5h1.6v1.6h-1.6zM158.6 341.1h1.6v1.6h-1.6zM160.4 341.3h1.6v1.6h-1.6zM163.4 345.4h1.6v1.6h-1.6zM164.8 344.5h1.6v1.6h-1.6zM167.8 339.3h1.6v1.6h-1.6zM172.4 337.5h1.6v1.6h-1.6zM173.5 331.6h1.6v1.6h-1.6zM174.0 338.8h1.6v1.6h-1.6zM175.2 331.7h1.6v1.6h-1.6zM175.5 334.5h1.6v1.6h-1.6zM176.6 328.3h1.6v1.6h-1.6zM181.3 336.5h1.6v1.6h-1.6zM183.0 343.0h1.6v1.6h-1.6zM185.7 337.7h1.6v1.6h-1.6zM187.3 342.2h1.6v1.6h-1.6zM188.5 339.4h1.6v1.6h-1.6zM191.7 340.8h1.6v1.6h-1.6zM206.9 342.5h1.6v1.6h-1.6zM208.5 345.9h1.6v1.6h-1.6zM210.1 338.8h1.6v1.6h-1.6zM212.6 342.6h1.6v1.6h-1.6zM215.9 336.2h1.6v1.6h-1.6zM217.3 332.4h1.6v1.6h-1.6zM218.6 335.4h1.6v1.6h-1.6zM226.2 343.8h1.6v1.6h-1.6zM229.5 335.0h1.6v1.6h-1.6zM230.9 335.5h1.6v1.6h-1.6zM232.1 340.5h1.6v1.6h-1.6zM237.0 339.8h1.6v1.6h-1.6zM236.7 344.1h1.6v1.6h-1.6z"/><path fill="#063806" d="M61.4 347.8h1.6v1.6h-1.6zM64.4 348.0h1.6v1.6h-1.6zM67.5 346.0h1.6v1.6h-1.6zM73.0 348.1h1.6v1.6h-1.6zM73.4 349.4h1.6v1.6h-1.6zM74.6 347.3h1.6v1.6h-1.6zM77.6 336.4h1.6v1.6h-1.6zM82.3 337.1h1.6v1.6h-1.6zM83.5 349.5h1.6v1.6h-1.6zM85.4 325.5h1.6v1.6h-1.6zM86.7 343.2h1.6v1.6h-1.6zM88.2 347.2h1.6v1.6h-1.6zM89.7 351.8h1.6v1.6h-1.6zM91.4 348.1h1.6v1.6h-1.6zM91.1 351.4h1.6v1.6h-1.6zM92.9 343.4h1.6v1.6h-1.6zM93.0 349.3h1.6v1.6h-1.6zM95.5 343.2h1.6v1.6h-1.6zM97.2 330.2h1.6v1.6h-1.6zM98.7 329.3h1.6v1.6h-1.6zM98.6 330.8h1.6v1.6h-1.6zM98.9 349.0h1.6v1.6h-1.6zM100.6 330.2h1.6v1.6h-1.6zM100.3 331.7h1.6v1.6h-1.6zM100.2 349.6h1.6v1.6h-1.6zM104.9 333.9h1.6v1.6h-1.6zM106.4 335.5h1.6v1.6h-1.6zM106.1 348.7h1.6v1.6h-1.6zM108.0 349.9h1.6v1.6h-1.6zM114.1 335.6h1.6v1.6h-1.6zM113.5 347.8h1.6v1.6h-1.6zM117.0 335.9h1.6v1.6h-1.6zM118.1 350.3h1.6v1.6h-1.6zM119.9 352.4h1.6v1.6h-1.6zM121.5 347.8h1.6v1.6h-1.6zM122.6 337.4h1.6v1.6h-1.6zM122.8 350.9h1.6v1.6h-1.6zM124.4 337.4h1.6v1.6h-1.6zM124.0 347.8h1.6v1.6h-1.6zM124.3 349.3h1.6v1.6h-1.6zM130.2 351.1h1.6v1.6h-1.6zM133.5 345.5h1.6v1.6h-1.6zM133.0 346.8h1.6v1.6h-1.6zM134.6 343.7h1.6v1.6h-1.6zM134.7 348.3h1.6v1.6h-1.6zM136.5 347.3h1.6v1.6h-1.6zM143.5 331.1h1.6v1.6h-1.6zM145.2 345.1h1.6v1.6h-1.6zM146.5 351.8h1.6v1.6h-1.6zM149.7 350.0h1.6v1.6h-1.6zM149.9 351.6h1.6v1.6h-1.6zM154.6 334.6h1.6v1.6h-1.6zM154.5 348.4h1.6v1.6h-1.6zM158.6 349.8h1.6v1.6h-1.6zM160.1 347.6h1.6v1.6h-1.6zM163.5 339.3h1.6v1.6h-1.6zM166.5 347.9h1.6v1.6h-1.6zM167.7 347.3h1.6v1.6h-1.6zM169.3 350.0h1.6v1.6h-1.6zM170.8 349.0h1.6v1.6h-1.6zM172.0 347.9h1.6v1.6h-1.6zM176.7 325.3h1.6v1.6h-1.6zM176.8 343.2h1.6v1.6h-1.6zM177.0 347.6h1.6v1.6h-1.6zM176.9 349.3h1.6v1.6h-1.6zM178.2 328.0h1.6v1.6h-1.6zM178.5 344.8h1.6v1.6h-1.6zM178.1 346.2h1.6v1.6h-1.6zM180.0 327.5h1.6v1.6h-1.6zM179.9 345.6h1.6v1.6h-1.6zM179.9 351.6h1.6v1.6h-1.6zM182.6 329.3h1.6v1.6h-1.6zM183.1 330.9h1.6v1.6h-1.6zM182.5 346.2h1.6v1.6h-1.6zM184.3 351.0h1.6v1.6h-1.6zM185.7 331.6h1.6v1.6h-1.6zM188.5 333.5h1.6v1.6h-1.6zM188.7 351.5h1.6v1.6h-1.6zM191.8 347.9h1.6v1.6h-1.6zM194.9 346.6h1.6v1.6h-1.6zM194.6 352.4h1.6v1.6h-1.6zM196.2 336.6h1.6v1.6h-1.6zM196.1 348.5h1.6v1.6h-1.6zM196.3 350.0h1.6v1.6h-1.6zM197.8 351.5h1.6v1.6h-1.6zM199.6 337.5h1.6v1.6h-1.6zM200.8 350.6h1.6v1.6h-1.6zM202.0 336.3h1.6v1.6h-1.6zM202.3 346.6h1.6v1.6h-1.6zM204.1 351.1h1.6v1.6h-1.6zM206.7 337.5h1.6v1.6h-1.6zM206.8 348.5h1.6v1.6h-1.6zM210.0 346.1h1.6v1.6h-1.6zM212.8 348.8h1.6v1.6h-1.6zM212.6 350.0h1.6v1.6h-1.6zM214.2 324.9h1.6v1.6h-1.6zM216.0 327.7h1.6v1.6h-1.6zM217.5 348.6h1.6v1.6h-1.6zM218.7 344.3h1.6v1.6h-1.6zM218.5 350.3h1.6v1.6h-1.6zM218.8 351.6h1.6v1.6h-1.6zM221.6 328.1h1.6v1.6h-1.6zM221.9 329.4h1.6v1.6h-1.6zM223.5 329.7h1.6v1.6h-1.6zM223.2 345.2h1.6v1.6h-1.6zM224.8 348.0h1.6v1.6h-1.6zM226.5 351.1h1.6v1.6h-1.6zM227.7 330.4h1.6v1.6h-1.6zM229.6 347.3h1.6v1.6h-1.6zM230.6 332.9h1.6v1.6h-1.6zM232.4 349.4h1.6v1.6h-1.6zM233.9 332.7h1.6v1.6h-1.6zM234.1 345.9h1.6v1.6h-1.6zM233.6 347.9h1.6v1.6h-1.6zM238.2 350.8h1.6v1.6h-1.6zM241.3 348.3h1.6v1.6h-1.6z"/><path fill="#30d830" d="M61.5 352.1h1.6v1.6h-1.6zM63.1 346.8h1.6v1.6h-1.6zM65.6 346.9h1.6v1.6h-1.6zM65.5 351.8h1.6v1.6h-1.6zM70.3 346.9h1.6v1.6h-1.6zM70.3 351.5h1.6v1.6h-1.6zM74.7 335.6h1.6v1.6h-1.6zM74.8 352.3h1.6v1.6h-1.6zM77.7 350.8h1.6v1.6h-1.6zM79.2 348.6h1.6v1.6h-1.6zM80.8 352.3h1.6v1.6h-1.6zM83.6 344.9h1.6v1.6h-1.6zM86.6 326.1h1.6v1.6h-1.6zM87.1 351.8h1.6v1.6h-1.6zM88.4 344.4h1.6v1.6h-1.6zM88.4 348.9h1.6v1.6h-1.6zM88.4 352.0h1.6v1.6h-1.6zM92.8 352.3h1.6v1.6h-1.6zM94.2 343.9h1.6v1.6h-1.6zM97.1 349.4h1.6v1.6h-1.6zM97.5 352.5h1.6v1.6h-1.6zM100.0 345.4h1.6v1.6h-1.6zM100.1 351.3h1.6v1.6h-1.6zM103.5 347.7h1.6v1.6h-1.6zM109.5 347.2h1.6v1.6h-1.6zM110.8 349.5h1.6v1.6h-1.6zM115.1 347.9h1.6v1.6h-1.6zM118.1 349.2h1.6v1.6h-1.6zM119.7 338.8h1.6v1.6h-1.6zM124.3 352.1h1.6v1.6h-1.6zM126.0 331.3h1.6v1.6h-1.6zM125.5 349.4h1.6v1.6h-1.6zM125.9 352.1h1.6v1.6h-1.6zM131.9 349.3h1.6v1.6h-1.6zM131.7 350.4h1.6v1.6h-1.6zM139.6 348.2h1.6v1.6h-1.6zM140.7 345.7h1.6v1.6h-1.6zM144.1 351.9h1.6v1.6h-1.6zM145.5 331.7h1.6v1.6h-1.6zM145.1 351.3h1.6v1.6h-1.6zM149.6 333.5h1.6v1.6h-1.6zM152.5 334.3h1.6v1.6h-1.6zM152.6 335.5h1.6v1.6h-1.6zM152.5 351.8h1.6v1.6h-1.6zM154.5 335.9h1.6v1.6h-1.6zM154.4 349.8h1.6v1.6h-1.6zM157.4 348.5h1.6v1.6h-1.6zM159.0 336.2h1.6v1.6h-1.6zM161.6 337.4h1.6v1.6h-1.6zM162.1 339.0h1.6v1.6h-1.6zM163.4 348.4h1.6v1.6h-1.6zM166.4 336.2h1.6v1.6h-1.6zM167.8 333.3h1.6v1.6h-1.6zM169.1 328.8h1.6v1.6h-1.6zM169.5 345.3h1.6v1.6h-1.6zM172.5 344.7h1.6v1.6h-1.6zM172.4 352.0h1.6v1.6h-1.6zM173.9 325.5h1.6v1.6h-1.6zM173.5 326.7h1.6v1.6h-1.6zM175.3 343.5h1.6v1.6h-1.6zM179.9 329.1h1.6v1.6h-1.6zM181.2 351.5h1.6v1.6h-1.6zM183.1 347.2h1.6v1.6h-1.6zM188.8 350.3h1.6v1.6h-1.6zM190.5 346.6h1.6v1.6h-1.6zM190.6 348.2h1.6v1.6h-1.6zM195.0 336.1h1.6v1.6h-1.6zM194.7 347.8h1.6v1.6h-1.6zM196.1 351.4h1.6v1.6h-1.6zM197.5 346.6h1.6v1.6h-1.6zM203.5 336.3h1.6v1.6h-1.6zM205.3 351.4h1.6v1.6h-1.6zM209.9 335.6h1.6v1.6h-1.6zM213.0 351.5h1.6v1.6h-1.6zM214.3 346.0h1.6v1.6h-1.6zM214.2 348.9h1.6v1.6h-1.6zM217.4 326.3h1.6v1.6h-1.6zM217.0 344.6h1.6v1.6h-1.6zM220.5 326.3h1.6v1.6h-1.6zM223.3 328.4h1.6v1.6h-1.6zM226.1 330.5h1.6v1.6h-1.6zM227.7 345.3h1.6v1.6h-1.6zM227.9 348.2h1.6v1.6h-1.6zM230.7 334.6h1.6v1.6h-1.6zM230.9 352.4h1.6v1.6h-1.6zM238.1 347.9h1.6v1.6h-1.6zM239.8 334.4h1.6v1.6h-1.6zM240.1 346.5h1.6v1.6h-1.6zM241.5 350.9h1.6v1.6h-1.6z"/><path fill="#e02850" d="M63.0 334.5h1.6v1.6h-1.6zM64.5 333.0h1.6v1.6h-1.6zM64.2 346.5h1.6v1.6h-1.6zM76.3 336.9h1.6v1.6h-1.6zM82.3 335.4h1.6v1.6h-1.6zM82.3 349.0h1.6v1.6h-1.6zM89.6 326.5h1.6v1.6h-1.6zM103.1 333.9h1.6v1.6h-1.6zM111.0 334.7h1.6v1.6h-1.6zM115.5 334.4h1.6v1.6h-1.6zM125.6 347.9h1.6v1.6h-1.6zM145.2 333.0h1.6v1.6h-1.6zM151.4 336.2h1.6v1.6h-1.6zM163.2 349.4h1.6v1.6h-1.6zM172.3 326.6h1.6v1.6h-1.6zM197.8 336.0h1.6v1.6h-1.6zM214.6 326.7h1.6v1.6h-1.6zM214.0 344.6h1.6v1.6h-1.6zM217.1 342.8h1.6v1.6h-1.6zM221.8 347.7h1.6v1.6h-1.6zM232.4 334.2h1.6v1.6h-1.6zM235.4 348.6h1.6v1.6h-1.6z"/><path fill="#0f5c0f" d="M62.8 349.4h1.6v1.6h-1.6zM65.8 333.7h1.6v1.6h-1.6zM68.7 350.2h1.6v1.6h-1.6zM70.4 334.6h1.6v1.6h-1.6zM70.1 336.6h1.6v1.6h-1.6zM75.0 350.5h1.6v1.6h-1.6zM77.7 337.8h1.6v1.6h-1.6zM80.8 337.1h1.6v1.6h-1.6zM80.8 338.3h1.6v1.6h-1.6zM80.6 350.8h1.6v1.6h-1.6zM82.3 348.0h1.6v1.6h-1.6zM83.9 330.1h1.6v1.6h-1.6zM87.1 344.6h1.6v1.6h-1.6zM89.6 349.2h1.6v1.6h-1.6zM92.5 326.8h1.6v1.6h-1.6zM93.1 344.8h1.6v1.6h-1.6zM94.6 351.0h1.6v1.6h-1.6zM101.7 332.5h1.6v1.6h-1.6zM102.0 346.1h1.6v1.6h-1.6zM103.4 350.3h1.6v1.6h-1.6zM104.7 348.8h1.6v1.6h-1.6zM107.6 335.3h1.6v1.6h-1.6zM109.6 348.8h1.6v1.6h-1.6zM110.5 336.1h1.6v1.6h-1.6zM110.7 352.2h1.6v1.6h-1.6zM112.0 349.4h1.6v1.6h-1.6zM112.0 350.4h1.6v1.6h-1.6zM113.8 349.5h1.6v1.6h-1.6zM116.5 349.4h1.6v1.6h-1.6zM119.7 347.4h1.6v1.6h-1.6zM122.5 338.9h1.6v1.6h-1.6zM124.4 350.9h1.6v1.6h-1.6zM130.1 348.0h1.6v1.6h-1.6zM131.8 326.6h1.6v1.6h-1.6zM131.8 346.2h1.6v1.6h-1.6zM134.8 325.8h1.6v1.6h-1.6zM136.2 326.6h1.6v1.6h-1.6zM138.1 345.0h1.6v1.6h-1.6zM138.1 348.1h1.6v1.6h-1.6zM139.2 329.1h1.6v1.6h-1.6zM139.0 330.6h1.6v1.6h-1.6zM141.1 329.1h1.6v1.6h-1.6zM142.4 346.8h1.6v1.6h-1.6zM145.4 346.8h1.6v1.6h-1.6zM148.3 350.5h1.6v1.6h-1.6zM152.7 350.8h1.6v1.6h-1.6zM154.2 346.9h1.6v1.6h-1.6zM155.8 349.6h1.6v1.6h-1.6zM157.4 336.5h1.6v1.6h-1.6zM158.9 346.8h1.6v1.6h-1.6zM164.8 350.3h1.6v1.6h-1.6zM166.3 351.4h1.6v1.6h-1.6zM169.5 347.1h1.6v1.6h-1.6zM170.9 342.8h1.6v1.6h-1.6zM171.0 344.3h1.6v1.6h-1.6zM170.8 345.6h1.6v1.6h-1.6zM172.1 328.3h1.6v1.6h-1.6zM172.4 349.1h1.6v1.6h-1.6zM172.5 350.5h1.6v1.6h-1.6zM175.0 345.0h1.6v1.6h-1.6zM178.2 327.0h1.6v1.6h-1.6zM178.6 343.0h1.6v1.6h-1.6zM178.1 348.0h1.6v1.6h-1.6zM179.8 344.3h1.6v1.6h-1.6zM182.9 350.4h1.6v1.6h-1.6zM184.1 345.2h1.6v1.6h-1.6zM184.3 349.3h1.6v1.6h-1.6zM185.6 347.0h1.6v1.6h-1.6zM187.4 333.3h1.6v1.6h-1.6zM187.0 350.0h1.6v1.6h-1.6zM190.1 349.6h1.6v1.6h-1.6zM193.5 333.6h1.6v1.6h-1.6zM193.1 348.6h1.6v1.6h-1.6zM193.5 350.2h1.6v1.6h-1.6zM200.6 336.6h1.6v1.6h-1.6zM202.4 348.1h1.6v1.6h-1.6zM204.1 346.9h1.6v1.6h-1.6zM204.1 349.6h1.6v1.6h-1.6zM205.3 337.9h1.6v1.6h-1.6zM208.5 348.9h1.6v1.6h-1.6zM211.1 346.6h1.6v1.6h-1.6zM211.6 351.0h1.6v1.6h-1.6zM213.0 344.2h1.6v1.6h-1.6zM215.8 345.6h1.6v1.6h-1.6zM217.3 347.2h1.6v1.6h-1.6zM218.7 328.0h1.6v1.6h-1.6zM220.2 351.5h1.6v1.6h-1.6zM224.8 329.8h1.6v1.6h-1.6zM224.7 349.1h1.6v1.6h-1.6zM226.3 345.6h1.6v1.6h-1.6zM226.6 348.1h1.6v1.6h-1.6zM226.0 349.9h1.6v1.6h-1.6zM229.1 333.4h1.6v1.6h-1.6zM231.0 350.5h1.6v1.6h-1.6zM232.5 347.6h1.6v1.6h-1.6zM232.4 351.9h1.6v1.6h-1.6zM233.8 333.9h1.6v1.6h-1.6zM233.9 352.3h1.6v1.6h-1.6zM236.9 348.9h1.6v1.6h-1.6zM238.0 335.8h1.6v1.6h-1.6zM241.2 338.0h1.6v1.6h-1.6z"/><path fill="#2ad02a" d="M63.1 351.3h1.6v1.6h-1.6zM67.1 333.7h1.6v1.6h-1.6zM67.3 352.1h1.6v1.6h-1.6zM73.6 334.9h1.6v1.6h-1.6zM73.4 336.1h1.6v1.6h-1.6zM76.3 347.6h1.6v1.6h-1.6zM78.0 349.4h1.6v1.6h-1.6zM79.3 350.3h1.6v1.6h-1.6zM83.7 346.7h1.6v1.6h-1.6zM84.0 347.7h1.6v1.6h-1.6zM85.1 348.2h1.6v1.6h-1.6zM88.1 342.6h1.6v1.6h-1.6zM88.6 350.3h1.6v1.6h-1.6zM89.8 350.3h1.6v1.6h-1.6zM91.3 346.7h1.6v1.6h-1.6zM93.0 347.8h1.6v1.6h-1.6zM95.6 345.0h1.6v1.6h-1.6zM97.0 344.9h1.6v1.6h-1.6zM98.8 345.9h1.6v1.6h-1.6zM98.9 347.5h1.6v1.6h-1.6zM100.2 348.1h1.6v1.6h-1.6zM101.8 347.6h1.6v1.6h-1.6zM104.8 335.4h1.6v1.6h-1.6zM104.7 351.8h1.6v1.6h-1.6zM106.3 347.3h1.6v1.6h-1.6zM106.4 351.7h1.6v1.6h-1.6zM107.5 351.6h1.6v1.6h-1.6zM110.7 346.5h1.6v1.6h-1.6zM112.2 347.7h1.6v1.6h-1.6zM115.4 336.0h1.6v1.6h-1.6zM115.3 351.0h1.6v1.6h-1.6zM118.4 347.2h1.6v1.6h-1.6zM121.3 337.7h1.6v1.6h-1.6zM130.3 325.9h1.6v1.6h-1.6zM135.0 326.8h1.6v1.6h-1.6zM134.8 345.1h1.6v1.6h-1.6zM136.4 352.0h1.6v1.6h-1.6zM138.1 328.4h1.6v1.6h-1.6zM138.0 346.8h1.6v1.6h-1.6zM137.7 349.4h1.6v1.6h-1.6zM142.3 351.3h1.6v1.6h-1.6zM148.5 333.9h1.6v1.6h-1.6zM149.6 346.9h1.6v1.6h-1.6zM156.0 351.0h1.6v1.6h-1.6zM155.6 352.5h1.6v1.6h-1.6zM160.3 350.3h1.6v1.6h-1.6zM167.9 348.4h1.6v1.6h-1.6zM170.9 351.8h1.6v1.6h-1.6zM175.0 327.3h1.6v1.6h-1.6zM175.2 346.9h1.6v1.6h-1.6zM181.5 330.2h1.6v1.6h-1.6zM184.6 331.6h1.6v1.6h-1.6zM185.6 349.6h1.6v1.6h-1.6zM187.1 351.5h1.6v1.6h-1.6zM188.6 332.1h1.6v1.6h-1.6zM188.7 348.8h1.6v1.6h-1.6zM191.6 334.7h1.6v1.6h-1.6zM191.6 351.4h1.6v1.6h-1.6zM195.0 334.2h1.6v1.6h-1.6zM196.0 347.3h1.6v1.6h-1.6zM197.6 348.2h1.6v1.6h-1.6zM202.5 337.7h1.6v1.6h-1.6zM203.5 348.6h1.6v1.6h-1.6zM205.0 348.1h1.6v1.6h-1.6zM208.4 347.4h1.6v1.6h-1.6zM209.6 350.8h1.6v1.6h-1.6zM212.7 345.7h1.6v1.6h-1.6zM214.6 347.3h1.6v1.6h-1.6zM216.0 346.7h1.6v1.6h-1.6zM217.5 325.0h1.6v1.6h-1.6zM218.7 326.4h1.6v1.6h-1.6zM220.0 327.4h1.6v1.6h-1.6zM224.7 331.1h1.6v1.6h-1.6zM224.7 352.4h1.6v1.6h-1.6zM226.5 347.0h1.6v1.6h-1.6zM227.8 331.7h1.6v1.6h-1.6zM232.0 332.9h1.6v1.6h-1.6zM235.0 335.0h1.6v1.6h-1.6zM235.6 347.0h1.6v1.6h-1.6zM236.8 351.9h1.6v1.6h-1.6z"/><path fill="#e03050" d="M64.2 341.9h1.6v1.6h-1.6zM66.0 337.8h1.6v1.6h-1.6zM65.7 342.6h1.6v1.6h-1.6zM67.0 337.0h1.6v1.6h-1.6zM67.5 341.4h1.6v1.6h-1.6zM69.0 344.4h1.6v1.6h-1.6zM74.9 338.5h1.6v1.6h-1.6zM79.4 345.9h1.6v1.6h-1.6zM81.0 341.6h1.6v1.6h-1.6zM82.2 341.8h1.6v1.6h-1.6zM83.7 337.4h1.6v1.6h-1.6zM83.7 342.0h1.6v1.6h-1.6zM88.3 335.5h1.6v1.6h-1.6zM90.0 329.1h1.6v1.6h-1.6zM89.6 332.2h1.6v1.6h-1.6zM89.9 339.8h1.6v1.6h-1.6zM92.9 335.6h1.6v1.6h-1.6zM92.5 337.4h1.6v1.6h-1.6zM94.4 334.7h1.6v1.6h-1.6zM94.1 342.0h1.6v1.6h-1.6zM97.4 334.7h1.6v1.6h-1.6zM98.7 340.0h1.6v1.6h-1.6zM98.9 343.1h1.6v1.6h-1.6zM102.0 340.1h1.6v1.6h-1.6zM107.9 338.1h1.6v1.6h-1.6zM109.1 341.2h1.6v1.6h-1.6zM115.4 343.5h1.6v1.6h-1.6zM116.9 339.0h1.6v1.6h-1.6zM117.0 340.3h1.6v1.6h-1.6zM118.1 345.6h1.6v1.6h-1.6zM130.0 337.6h1.6v1.6h-1.6zM136.3 338.7h1.6v1.6h-1.6zM139.3 343.8h1.6v1.6h-1.6zM143.5 337.0h1.6v1.6h-1.6zM145.4 334.5h1.6v1.6h-1.6zM148.3 344.1h1.6v1.6h-1.6zM151.6 340.5h1.6v1.6h-1.6zM151.4 344.9h1.6v1.6h-1.6zM153.0 336.9h1.6v1.6h-1.6zM152.6 343.2h1.6v1.6h-1.6zM155.8 339.2h1.6v1.6h-1.6zM155.5 341.8h1.6v1.6h-1.6zM161.9 344.8h1.6v1.6h-1.6zM166.1 343.8h1.6v1.6h-1.6zM169.2 336.4h1.6v1.6h-1.6zM169.3 340.7h1.6v1.6h-1.6zM170.7 341.6h1.6v1.6h-1.6zM172.3 332.5h1.6v1.6h-1.6zM173.6 330.0h1.6v1.6h-1.6zM173.9 334.6h1.6v1.6h-1.6zM173.8 340.2h1.6v1.6h-1.6zM178.4 332.8h1.6v1.6h-1.6zM178.3 337.3h1.6v1.6h-1.6zM181.1 333.2h1.6v1.6h-1.6zM181.4 334.7h1.6v1.6h-1.6zM181.1 338.0h1.6v1.6h-1.6zM184.5 343.7h1.6v1.6h-1.6zM185.7 334.5h1.6v1.6h-1.6zM188.9 342.7h1.6v1.6h-1.6zM194.6 339.1h1.6v1.6h-1.6zM198.1 343.8h1.6v1.6h-1.6zM199.5 343.4h1.6v1.6h-1.6zM199.1 344.5h1.6v1.6h-1.6zM212.7 336.7h1.6v1.6h-1.6zM212.7 340.0h1.6v1.6h-1.6zM215.5 330.4h1.6v1.6h-1.6zM217.2 333.7h1.6v1.6h-1.6zM223.2 338.9h1.6v1.6h-1.6zM224.7 338.5h1.6v1.6h-1.6zM224.5 341.7h1.6v1.6h-1.6zM224.6 343.1h1.6v1.6h-1.6zM226.5 342.5h1.6v1.6h-1.6zM230.9 337.4h1.6v1.6h-1.6zM238.2 344.9h1.6v1.6h-1.6zM239.7 340.8h1.6v1.6h-1.6zM241.2 340.5h1.6v1.6h-1.6z"/><path fill="#0c500c" d="M65.8 336.5h1.6v1.6h-1.6zM67.6 340.2h1.6v1.6h-1.6zM68.9 336.9h1.6v1.6h-1.6zM68.6 342.8h1.6v1.6h-1.6zM71.8 341.5h1.6v1.6h-1.6zM73.5 338.9h1.6v1.6h-1.6zM76.2 341.8h1.6v1.6h-1.6zM77.5 343.5h1.6v1.6h-1.6zM79.5 339.6h1.6v1.6h-1.6zM80.5 344.5h1.6v1.6h-1.6zM82.3 340.4h1.6v1.6h-1.6zM84.0 334.6h1.6v1.6h-1.6zM83.8 340.8h1.6v1.6h-1.6zM85.5 340.2h1.6v1.6h-1.6zM86.7 330.6h1.6v1.6h-1.6zM86.8 332.6h1.6v1.6h-1.6zM89.7 331.1h1.6v1.6h-1.6zM92.9 332.8h1.6v1.6h-1.6zM97.5 331.2h1.6v1.6h-1.6zM99.1 335.4h1.6v1.6h-1.6zM100.5 334.7h1.6v1.6h-1.6zM100.2 344.2h1.6v1.6h-1.6zM102.1 337.0h1.6v1.6h-1.6zM103.1 335.4h1.6v1.6h-1.6zM103.1 344.6h1.6v1.6h-1.6zM107.6 345.7h1.6v1.6h-1.6zM109.2 338.0h1.6v1.6h-1.6zM113.6 341.8h1.6v1.6h-1.6zM114.0 343.2h1.6v1.6h-1.6zM115.1 337.4h1.6v1.6h-1.6zM119.6 340.2h1.6v1.6h-1.6zM121.4 338.8h1.6v1.6h-1.6zM121.0 344.8h1.6v1.6h-1.6zM122.9 346.7h1.6v1.6h-1.6zM125.7 340.0h1.6v1.6h-1.6zM125.7 341.5h1.6v1.6h-1.6zM127.2 334.7h1.6v1.6h-1.6zM127.3 339.1h1.6v1.6h-1.6zM129.0 330.6h1.6v1.6h-1.6zM128.5 335.2h1.6v1.6h-1.6zM128.6 340.0h1.6v1.6h-1.6zM130.3 330.2h1.6v1.6h-1.6zM130.4 336.3h1.6v1.6h-1.6zM130.3 340.5h1.6v1.6h-1.6zM136.4 336.9h1.6v1.6h-1.6zM139.5 335.2h1.6v1.6h-1.6zM140.8 334.0h1.6v1.6h-1.6zM141.0 342.8h1.6v1.6h-1.6zM142.3 339.1h1.6v1.6h-1.6zM142.1 340.8h1.6v1.6h-1.6zM145.2 339.1h1.6v1.6h-1.6zM145.4 340.6h1.6v1.6h-1.6zM146.5 341.5h1.6v1.6h-1.6zM148.3 345.7h1.6v1.6h-1.6zM150.0 336.5h1.6v1.6h-1.6zM150.1 342.7h1.6v1.6h-1.6zM160.3 339.8h1.6v1.6h-1.6zM165.1 339.8h1.6v1.6h-1.6zM164.5 342.8h1.6v1.6h-1.6zM166.1 339.1h1.6v1.6h-1.6zM169.1 338.2h1.6v1.6h-1.6zM169.5 339.7h1.6v1.6h-1.6zM170.8 333.9h1.6v1.6h-1.6zM172.5 338.8h1.6v1.6h-1.6zM173.7 337.6h1.6v1.6h-1.6zM176.8 341.9h1.6v1.6h-1.6zM178.4 340.1h1.6v1.6h-1.6zM179.7 335.0h1.6v1.6h-1.6zM180.0 339.8h1.6v1.6h-1.6zM179.5 342.4h1.6v1.6h-1.6zM181.2 342.1h1.6v1.6h-1.6zM182.6 335.5h1.6v1.6h-1.6zM184.4 334.4h1.6v1.6h-1.6zM185.8 342.2h1.6v1.6h-1.6zM190.2 336.2h1.6v1.6h-1.6zM190.1 337.5h1.6v1.6h-1.6zM191.6 339.3h1.6v1.6h-1.6zM193.1 345.6h1.6v1.6h-1.6zM195.0 343.0h1.6v1.6h-1.6zM196.4 343.9h1.6v1.6h-1.6zM198.0 342.3h1.6v1.6h-1.6zM200.6 341.2h1.6v1.6h-1.6zM200.9 346.1h1.6v1.6h-1.6zM209.6 337.3h1.6v1.6h-1.6zM211.2 331.4h1.6v1.6h-1.6zM213.1 329.4h1.6v1.6h-1.6zM218.6 341.3h1.6v1.6h-1.6zM221.7 330.9h1.6v1.6h-1.6zM221.9 333.7h1.6v1.6h-1.6zM222.1 336.9h1.6v1.6h-1.6zM223.0 336.1h1.6v1.6h-1.6zM225.0 332.8h1.6v1.6h-1.6zM225.1 335.7h1.6v1.6h-1.6zM227.7 333.0h1.6v1.6h-1.6zM232.1 337.3h1.6v1.6h-1.6zM235.1 336.6h1.6v1.6h-1.6zM235.2 339.6h1.6v1.6h-1.6z"/><path fill="#3ce83c" d="M67.2 347.4h1.6v1.6h-1.6zM69.1 346.2h1.6v1.6h-1.6zM69.0 347.8h1.6v1.6h-1.6zM68.9 352.2h1.6v1.6h-1.6zM71.6 337.3h1.6v1.6h-1.6zM71.6 347.6h1.6v1.6h-1.6zM71.9 349.0h1.6v1.6h-1.6zM75.1 348.8h1.6v1.6h-1.6zM82.3 351.0h1.6v1.6h-1.6zM82.3 352.3h1.6v1.6h-1.6zM85.5 343.5h1.6v1.6h-1.6zM86.9 350.2h1.6v1.6h-1.6zM89.9 343.1h1.6v1.6h-1.6zM91.1 327.2h1.6v1.6h-1.6zM91.0 345.5h1.6v1.6h-1.6zM92.7 328.4h1.6v1.6h-1.6zM94.3 325.6h1.6v1.6h-1.6zM94.3 326.9h1.6v1.6h-1.6zM95.7 328.3h1.6v1.6h-1.6zM95.7 352.4h1.6v1.6h-1.6zM99.1 350.4h1.6v1.6h-1.6zM98.8 351.9h1.6v1.6h-1.6zM100.1 346.8h1.6v1.6h-1.6zM101.7 330.9h1.6v1.6h-1.6zM103.5 352.0h1.6v1.6h-1.6zM104.6 350.2h1.6v1.6h-1.6zM109.3 351.8h1.6v1.6h-1.6zM113.7 337.6h1.6v1.6h-1.6zM115.1 346.5h1.6v1.6h-1.6zM116.7 350.6h1.6v1.6h-1.6zM118.4 336.8h1.6v1.6h-1.6zM127.4 326.8h1.6v1.6h-1.6zM127.4 345.1h1.6v1.6h-1.6zM128.7 326.5h1.6v1.6h-1.6zM130.1 327.4h1.6v1.6h-1.6zM130.6 345.1h1.6v1.6h-1.6zM136.5 344.7h1.6v1.6h-1.6zM136.4 346.0h1.6v1.6h-1.6zM136.3 349.2h1.6v1.6h-1.6zM137.7 329.9h1.6v1.6h-1.6zM140.6 330.6h1.6v1.6h-1.6zM140.8 347.2h1.6v1.6h-1.6zM140.7 351.7h1.6v1.6h-1.6zM142.4 348.4h1.6v1.6h-1.6zM144.0 350.3h1.6v1.6h-1.6zM148.6 335.0h1.6v1.6h-1.6zM148.0 347.0h1.6v1.6h-1.6zM150.0 348.5h1.6v1.6h-1.6zM158.7 351.1h1.6v1.6h-1.6zM167.8 345.7h1.6v1.6h-1.6zM167.6 351.3h1.6v1.6h-1.6zM169.2 344.1h1.6v1.6h-1.6zM171.1 350.1h1.6v1.6h-1.6zM173.7 349.5h1.6v1.6h-1.6zM176.8 345.9h1.6v1.6h-1.6zM178.0 349.0h1.6v1.6h-1.6zM180.1 348.4h1.6v1.6h-1.6zM181.5 345.2h1.6v1.6h-1.6zM181.6 347.0h1.6v1.6h-1.6zM182.9 348.7h1.6v1.6h-1.6zM184.1 330.2h1.6v1.6h-1.6zM184.5 347.9h1.6v1.6h-1.6zM185.7 333.1h1.6v1.6h-1.6zM190.0 333.4h1.6v1.6h-1.6zM190.2 334.5h1.6v1.6h-1.6zM191.7 346.8h1.6v1.6h-1.6zM193.2 347.3h1.6v1.6h-1.6zM194.7 349.1h1.6v1.6h-1.6zM196.4 335.0h1.6v1.6h-1.6zM198.0 334.7h1.6v1.6h-1.6zM213.0 327.9h1.6v1.6h-1.6zM220.1 344.0h1.6v1.6h-1.6zM220.3 347.2h1.6v1.6h-1.6zM220.5 348.3h1.6v1.6h-1.6zM225.1 344.5h1.6v1.6h-1.6zM229.0 332.3h1.6v1.6h-1.6zM233.7 350.8h1.6v1.6h-1.6zM236.8 350.6h1.6v1.6h-1.6z"/><rect x="59.8" y="351.7" width="183.5" height="1.1" fill="#808080"/><rect x="236.3" y="350.59999999999997" width="6" height="1.8" fill="#f4f4f4"/><text x="54.599999999999994" y="297.0" font-size="5.6" font-weight="bold" fill="#e62a20" font-family="Liberation Sans, sans-serif" text-anchor="end">200</text><rect x="56.0" y="294.3" width="3.3" height="0.9" fill="#a83a30"/><text x="54.599999999999994" y="311.6" font-size="5.6" font-weight="bold" fill="#e62a20" font-family="Liberation Sans, sans-serif" text-anchor="end">150</text><rect x="56.0" y="308.9" width="3.3" height="0.9" fill="#a83a30"/><text x="54.599999999999994" y="326.3" font-size="5.6" font-weight="bold" fill="#e62a20" font-family="Liberation Sans, sans-serif" text-anchor="end">100</text><rect x="56.0" y="323.5" width="3.3" height="0.9" fill="#a83a30"/><text x="54.599999999999994" y="340.9" font-size="5.6" font-weight="bold" fill="#e62a20" font-family="Liberation Sans, sans-serif" text-anchor="end">50</text><rect x="56.0" y="338.1" width="3.3" height="0.9" fill="#a83a30"/><text x="54.599999999999994" y="355.5" font-size="5.6" font-weight="bold" fill="#e62a20" font-family="Liberation Sans, sans-serif" text-anchor="end">0</text><rect x="56.0" y="352.8" width="3.3" height="0.9" fill="#a83a30"/><text x="54.599999999999994" y="370.1" font-size="5.6" font-weight="bold" fill="#e62a20" font-family="Liberation Sans, sans-serif" text-anchor="end">-50</text><rect x="56.0" y="367.4" width="3.3" height="0.9" fill="#a83a30"/><text x="54.599999999999994" y="384.7" font-size="5.6" font-weight="bold" fill="#e62a20" font-family="Liberation Sans, sans-serif" text-anchor="end">-100</text><rect x="56.0" y="382.0" width="3.3" height="0.9" fill="#a83a30"/><rect x="57.599999999999994" y="294.3" width="1.7" height="0.9" fill="#a83a30" opacity=".9"/><rect x="57.599999999999994" y="297.2" width="1.7" height="0.9" fill="#a83a30" opacity=".9"/><rect x="57.599999999999994" y="300.2" width="1.7" height="0.9" fill="#a83a30" opacity=".9"/><rect x="57.599999999999994" y="303.1" width="1.7" height="0.9" fill="#a83a30" opacity=".9"/><rect x="57.599999999999994" y="306.0" width="1.7" height="0.9" fill="#a83a30" opacity=".9"/><rect x="57.599999999999994" y="308.9" width="1.7" height="0.9" fill="#a83a30" opacity=".9"/><rect x="57.599999999999994" y="311.9" width="1.7" height="0.9" fill="#a83a30" opacity=".9"/><rect x="57.599999999999994" y="314.8" width="1.7" height="0.9" fill="#a83a30" opacity=".9"/><rect x="57.599999999999994" y="317.7" width="1.7" height="0.9" fill="#a83a30" opacity=".9"/><rect x="57.599999999999994" y="320.6" width="1.7" height="0.9" fill="#a83a30" opacity=".9"/><rect x="57.599999999999994" y="323.6" width="1.7" height="0.9" fill="#a83a30" opacity=".9"/><rect x="57.599999999999994" y="326.5" width="1.7" height="0.9" fill="#a83a30" opacity=".9"/><rect x="57.599999999999994" y="329.4" width="1.7" height="0.9" fill="#a83a30" opacity=".9"/><rect x="57.599999999999994" y="332.3" width="1.7" height="0.9" fill="#a83a30" opacity=".9"/><rect x="57.599999999999994" y="335.3" width="1.7" height="0.9" fill="#a83a30" opacity=".9"/><rect x="57.599999999999994" y="338.2" width="1.7" height="0.9" fill="#a83a30" opacity=".9"/><rect x="57.599999999999994" y="341.1" width="1.7" height="0.9" fill="#a83a30" opacity=".9"/><rect x="57.599999999999994" y="344.0" width="1.7" height="0.9" fill="#a83a30" opacity=".9"/><rect x="57.599999999999994" y="347.0" width="1.7" height="0.9" fill="#a83a30" opacity=".9"/><rect x="57.599999999999994" y="349.9" width="1.7" height="0.9" fill="#a83a30" opacity=".9"/><rect x="57.599999999999994" y="352.8" width="1.7" height="0.9" fill="#a83a30" opacity=".9"/><rect x="57.599999999999994" y="355.7" width="1.7" height="0.9" fill="#a83a30" opacity=".9"/><rect x="57.599999999999994" y="358.6" width="1.7" height="0.9" fill="#a83a30" opacity=".9"/><rect x="57.599999999999994" y="361.6" width="1.7" height="0.9" fill="#a83a30" opacity=".9"/><rect x="57.599999999999994" y="364.5" width="1.7" height="0.9" fill="#a83a30" opacity=".9"/><rect x="57.599999999999994" y="367.4" width="1.7" height="0.9" fill="#a83a30" opacity=".9"/><rect x="57.599999999999994" y="370.3" width="1.7" height="0.9" fill="#a83a30" opacity=".9"/><rect x="57.599999999999994" y="373.3" width="1.7" height="0.9" fill="#a83a30" opacity=".9"/><rect x="57.599999999999994" y="376.2" width="1.7" height="0.9" fill="#a83a30" opacity=".9"/><rect x="57.599999999999994" y="379.1" width="1.7" height="0.9" fill="#a83a30" opacity=".9"/><rect x="57.599999999999994" y="382.0" width="1.7" height="0.9" fill="#a83a30" opacity=".9"/><rect x="57.599999999999994" y="385.0" width="1.7" height="0.9" fill="#a83a30" opacity=".9"/><rect x="57.599999999999994" y="387.9" width="1.7" height="0.9" fill="#a83a30" opacity=".9"/><text x="59.3" y="399.8" font-size="5.6" font-weight="bold" fill="#e62a20" font-family="Liberation Sans, sans-serif" text-anchor="middle">0</text><text x="105.2" y="399.8" font-size="5.6" font-weight="bold" fill="#e62a20" font-family="Liberation Sans, sans-serif" text-anchor="middle">1</text><text x="151.1" y="399.8" font-size="5.6" font-weight="bold" fill="#e62a20" font-family="Liberation Sans, sans-serif" text-anchor="middle">2</text><text x="196.9" y="399.8" font-size="5.6" font-weight="bold" fill="#e62a20" font-family="Liberation Sans, sans-serif" text-anchor="middle">3</text><text x="242.8" y="399.8" font-size="5.6" font-weight="bold" fill="#e62a20" font-family="Liberation Sans, sans-serif" text-anchor="middle">4</text><rect x="59.5" y="390.3" width="0.9" height="3.6" fill="#a83a30" opacity="1"/><rect x="61.8" y="390.3" width="0.9" height="2.0" fill="#a83a30" opacity="1"/><rect x="64.1" y="390.3" width="0.9" height="2.0" fill="#a83a30" opacity="1"/><rect x="66.4" y="390.3" width="0.9" height="2.0" fill="#a83a30" opacity="1"/><rect x="68.7" y="390.3" width="0.9" height="2.0" fill="#a83a30" opacity="1"/><rect x="71.0" y="390.3" width="0.9" height="2.0" fill="#a83a30" opacity="1"/><rect x="73.3" y="390.3" width="0.9" height="2.0" fill="#a83a30" opacity="1"/><rect x="75.6" y="390.3" width="0.9" height="2.0" fill="#a83a30" opacity="1"/><rect x="77.9" y="390.3" width="0.9" height="2.0" fill="#a83a30" opacity="1"/><rect x="80.1" y="390.3" width="0.9" height="2.0" fill="#a83a30" opacity="1"/><rect x="82.4" y="390.3" width="0.9" height="3.6" fill="#a83a30" opacity="1"/><rect x="84.7" y="390.3" width="0.9" height="2.0" fill="#a83a30" opacity="1"/><rect x="87.0" y="390.3" width="0.9" height="2.0" fill="#a83a30" opacity="1"/><rect x="89.3" y="390.3" width="0.9" height="2.0" fill="#a83a30" opacity="1"/><rect x="91.6" y="390.3" width="0.9" height="2.0" fill="#a83a30" opacity="1"/><rect x="93.9" y="390.3" width="0.9" height="2.0" fill="#a83a30" opacity="1"/><rect x="96.2" y="390.3" width="0.9" height="2.0" fill="#a83a30" opacity="1"/><rect x="98.5" y="390.3" width="0.9" height="2.0" fill="#a83a30" opacity="1"/><rect x="100.8" y="390.3" width="0.9" height="2.0" fill="#a83a30" opacity="1"/><rect x="103.1" y="390.3" width="0.9" height="2.0" fill="#a83a30" opacity="1"/><rect x="105.4" y="390.3" width="0.9" height="3.6" fill="#a83a30" opacity="1"/><rect x="107.7" y="390.3" width="0.9" height="2.0" fill="#a83a30" opacity="1"/><rect x="110.0" y="390.3" width="0.9" height="2.0" fill="#a83a30" opacity="1"/><rect x="112.3" y="390.3" width="0.9" height="2.0" fill="#a83a30" opacity="1"/><rect x="114.6" y="390.3" width="0.9" height="2.0" fill="#a83a30" opacity="1"/><rect x="116.8" y="390.3" width="0.9" height="2.0" fill="#a83a30" opacity="1"/><rect x="119.1" y="390.3" width="0.9" height="2.0" fill="#a83a30" opacity="1"/><rect x="121.4" y="390.3" width="0.9" height="2.0" fill="#a83a30" opacity="1"/><rect x="123.7" y="390.3" width="0.9" height="2.0" fill="#a83a30" opacity="1"/><rect x="126.0" y="390.3" width="0.9" height="2.0" fill="#a83a30" opacity="1"/><rect x="128.3" y="390.3" width="0.9" height="3.6" fill="#a83a30" opacity="1"/><rect x="130.6" y="390.3" width="0.9" height="2.0" fill="#a83a30" opacity="1"/><rect x="132.9" y="390.3" width="0.9" height="2.0" fill="#a83a30" opacity="1"/><rect x="135.2" y="390.3" width="0.9" height="2.0" fill="#a83a30" opacity="1"/><rect x="137.5" y="390.3" width="0.9" height="2.0" fill="#a83a30" opacity="1"/><rect x="139.8" y="390.3" width="0.9" height="2.0" fill="#a83a30" opacity="1"/><rect x="142.1" y="390.3" width="0.9" height="2.0" fill="#a83a30" opacity="1"/><rect x="144.4" y="390.3" width="0.9" height="2.0" fill="#a83a30" opacity="1"/><rect x="146.7" y="390.3" width="0.9" height="2.0" fill="#a83a30" opacity="1"/><rect x="149.0" y="390.3" width="0.9" height="2.0" fill="#a83a30" opacity="1"/><rect x="151.2" y="390.3" width="0.9" height="3.6" fill="#a83a30" opacity="1"/><rect x="153.5" y="390.3" width="0.9" height="2.0" fill="#a83a30" opacity="1"/><rect x="155.8" y="390.3" width="0.9" height="2.0" fill="#a83a30" opacity="1"/><rect x="158.1" y="390.3" width="0.9" height="2.0" fill="#a83a30" opacity="1"/><rect x="160.4" y="390.3" width="0.9" height="2.0" fill="#a83a30" opacity="1"/><rect x="162.7" y="390.3" width="0.9" height="2.0" fill="#a83a30" opacity="1"/><rect x="165.0" y="390.3" width="0.9" height="2.0" fill="#a83a30" opacity="1"/><rect x="167.3" y="390.3" width="0.9" height="2.0" fill="#a83a30" opacity="1"/><rect x="169.6" y="390.3" width="0.9" height="2.0" fill="#a83a30" opacity="1"/><rect x="171.9" y="390.3" width="0.9" height="2.0" fill="#a83a30" opacity="1"/><rect x="174.2" y="390.3" width="0.9" height="3.6" fill="#a83a30" opacity="1"/><rect x="176.5" y="390.3" width="0.9" height="2.0" fill="#a83a30" opacity="1"/><rect x="178.8" y="390.3" width="0.9" height="2.0" fill="#a83a30" opacity="1"/><rect x="181.1" y="390.3" width="0.9" height="2.0" fill="#a83a30" opacity="1"/><rect x="183.4" y="390.3" width="0.9" height="2.0" fill="#a83a30" opacity="1"/><rect x="185.7" y="390.3" width="0.9" height="2.0" fill="#a83a30" opacity="1"/><rect x="187.9" y="390.3" width="0.9" height="2.0" fill="#a83a30" opacity="1"/><rect x="190.2" y="390.3" width="0.9" height="2.0" fill="#a83a30" opacity="1"/><rect x="192.5" y="390.3" width="0.9" height="2.0" fill="#a83a30" opacity="1"/><rect x="194.8" y="390.3" width="0.9" height="2.0" fill="#a83a30" opacity="1"/><rect x="197.1" y="390.3" width="0.9" height="3.6" fill="#a83a30" opacity="1"/><rect x="199.4" y="390.3" width="0.9" height="2.0" fill="#a83a30" opacity="1"/><rect x="201.7" y="390.3" width="0.9" height="2.0" fill="#a83a30" opacity="1"/><rect x="204.0" y="390.3" width="0.9" height="2.0" fill="#a83a30" opacity="1"/><rect x="206.3" y="390.3" width="0.9" height="2.0" fill="#a83a30" opacity="1"/><rect x="208.6" y="390.3" width="0.9" height="2.0" fill="#a83a30" opacity="1"/><rect x="210.9" y="390.3" width="0.9" height="2.0" fill="#a83a30" opacity="1"/><rect x="213.2" y="390.3" width="0.9" height="2.0" fill="#a83a30" opacity="1"/><rect x="215.5" y="390.3" width="0.9" height="2.0" fill="#a83a30" opacity="1"/><rect x="217.8" y="390.3" width="0.9" height="2.0" fill="#a83a30" opacity="1"/><rect x="220.1" y="390.3" width="0.9" height="3.6" fill="#a83a30" opacity="1"/><rect x="222.4" y="390.3" width="0.9" height="2.0" fill="#a83a30" opacity="1"/><rect x="224.6" y="390.3" width="0.9" height="2.0" fill="#a83a30" opacity="1"/><rect x="226.9" y="390.3" width="0.9" height="2.0" fill="#a83a30" opacity="1"/><rect x="229.2" y="390.3" width="0.9" height="2.0" fill="#a83a30" opacity="1"/><rect x="231.5" y="390.3" width="0.9" height="2.0" fill="#a83a30" opacity="1"/><rect x="233.8" y="390.3" width="0.9" height="2.0" fill="#a83a30" opacity="1"/><rect x="236.1" y="390.3" width="0.9" height="2.0" fill="#a83a30" opacity="1"/><rect x="238.4" y="390.3" width="0.9" height="2.0" fill="#a83a30" opacity="1"/><rect x="240.7" y="390.3" width="0.9" height="2.0" fill="#a83a30" opacity="1"/><rect x="243.0" y="390.3" width="0.9" height="3.6" fill="#a83a30" opacity="1"/><defs><linearGradient id="g39285" x1="0" y1="0" x2="0" y2="1"><stop offset="0" stop-color="#ffffff"/><stop offset="0.062" stop-color="#ffffff"/><stop offset="0.064" stop-color="#ffff00"/><stop offset="0.125" stop-color="#ffff00"/><stop offset="0.127" stop-color="#ff00ff"/><stop offset="0.22" stop-color="#ff10d0"/><stop offset="0.345" stop-color="#f01020"/><stop offset="0.347" stop-color="#148a14"/><stop offset="0.55" stop-color="#10a010"/><stop offset="0.62" stop-color="#30d030"/><stop offset="0.76" stop-color="#10e010"/><stop offset="0.85" stop-color="#1040d0"/><stop offset="0.93" stop-color="#081870"/><stop offset="1" stop-color="#000000"/></linearGradient></defs><rect x="252.2" y="291" width="8" height="99.8" fill="url(#g39285)"/></svg>
<div class="sunk" style="left:341px;top:285px;width:228.9px;height:122.2px"></div><svg class="a" style="left:341px;top:285px" width="230" height="124" viewBox="341 285 230 124"><rect x="364.1" y="293" width="183.9" height="97.3" fill="#030303"/><polygon points="364.1,353.2 364.1,341.5 365.4,342.6 366.7,343.4 368.0,346.0 369.3,346.2 370.6,344.3 371.9,337.6 373.2,334.9 374.5,334.6 375.8,334.8 377.1,337.3 378.4,338.8 379.7,341.5 381.0,340.2 382.3,340.4 383.6,342.0 384.9,342.1 386.2,342.8 387.5,340.4 388.8,343.2 390.1,342.0 391.4,343.2 392.7,341.9 394.0,343.0 395.3,343.8 396.6,343.9 397.9,344.0 399.2,342.6 400.5,345.0 401.8,342.9 403.1,345.2 404.4,344.7 405.7,345.0 407.0,344.1 408.3,345.9 409.6,346.0 410.9,344.7 412.2,345.6 413.5,338.4 414.8,337.3 416.1,334.9 417.4,335.6 418.7,335.8 420.0,336.6 421.3,338.8 422.6,339.6 423.9,340.8 425.2,340.9 426.5,340.1 427.8,342.5 429.1,342.0 430.4,341.9 431.7,341.5 433.0,342.1 434.3,343.6 435.6,342.6 436.9,343.0 438.2,344.3 439.5,343.1 440.8,344.5 442.1,342.6 443.4,344.5 444.7,343.1 446.0,343.7 447.3,343.4 448.6,345.7 449.9,346.0 451.2,345.9 452.5,345.3 453.8,344.3 455.1,345.0 456.4,340.0 457.7,337.0 459.0,334.4 460.3,337.3 461.6,337.9 462.9,338.2 464.2,338.5 465.5,341.2 466.8,341.1 468.1,339.6 469.4,341.0 470.7,340.1 472.0,340.5 473.3,342.4 474.6,342.8 475.9,341.9 477.2,341.6 478.5,342.2 479.8,342.2 481.1,343.3 482.4,342.8 483.7,344.7 485.0,342.5 486.3,343.3 487.6,344.5 488.9,344.2 490.2,343.4 491.5,344.5 492.8,344.4 494.1,345.9 495.4,344.6 496.7,345.8 498.0,343.3 499.3,337.4 500.6,334.5 501.9,335.7 503.2,334.9 504.5,336.4 505.8,339.9 507.1,339.4 508.4,341.8 509.7,339.9 511.0,339.8 512.3,340.1 513.6,342.5 514.9,342.9 516.2,341.4 517.5,341.9 518.8,342.1 520.1,343.1 521.4,342.4 522.7,343.1 524.0,343.8 525.3,343.0 526.6,342.8 527.9,344.4 529.2,344.6 530.5,343.1 531.8,344.4 533.1,345.8 534.4,345.3 535.7,345.7 537.0,346.7 538.3,344.6 539.6,339.6 540.9,335.8 542.2,336.8 543.5,336.2 544.8,337.4 546.1,338.1 547.4,338.9 548.0,340.1 548.0,353.2" fill="#0f540f"/><path fill="#2ad02a" d="M363.9 341.9h1.6v1.6h-1.6zM364.1 350.9h1.6v1.6h-1.6zM367.3 348.5h1.6v1.6h-1.6zM371.5 345.7h1.6v1.6h-1.6zM383.6 346.4h1.6v1.6h-1.6zM386.9 340.7h1.6v1.6h-1.6zM386.5 346.8h1.6v1.6h-1.6zM388.2 343.1h1.6v1.6h-1.6zM387.9 352.5h1.6v1.6h-1.6zM389.6 349.7h1.6v1.6h-1.6zM391.1 342.8h1.6v1.6h-1.6zM394.1 348.0h1.6v1.6h-1.6zM398.4 351.8h1.6v1.6h-1.6zM404.9 348.1h1.6v1.6h-1.6zM406.1 351.8h1.6v1.6h-1.6zM415.3 338.5h1.6v1.6h-1.6zM416.7 338.6h1.6v1.6h-1.6zM416.6 347.8h1.6v1.6h-1.6zM418.0 338.6h1.6v1.6h-1.6zM422.6 350.4h1.6v1.6h-1.6zM427.3 344.1h1.6v1.6h-1.6zM431.4 343.1h1.6v1.6h-1.6zM433.2 342.9h1.6v1.6h-1.6zM437.7 345.7h1.6v1.6h-1.6zM440.7 346.9h1.6v1.6h-1.6zM440.9 348.2h1.6v1.6h-1.6zM452.3 346.3h1.6v1.6h-1.6zM452.3 349.1h1.6v1.6h-1.6zM453.8 347.6h1.6v1.6h-1.6zM454.3 349.5h1.6v1.6h-1.6zM457.2 342.7h1.6v1.6h-1.6zM458.5 336.8h1.6v1.6h-1.6zM460.3 345.2h1.6v1.6h-1.6zM463.1 351.8h1.6v1.6h-1.6zM464.9 349.8h1.6v1.6h-1.6zM464.7 351.2h1.6v1.6h-1.6zM467.3 342.6h1.6v1.6h-1.6zM468.8 351.2h1.6v1.6h-1.6zM472.3 347.4h1.6v1.6h-1.6zM473.5 342.5h1.6v1.6h-1.6zM478.3 342.0h1.6v1.6h-1.6zM484.3 350.2h1.6v1.6h-1.6zM488.3 348.7h1.6v1.6h-1.6zM493.2 351.7h1.6v1.6h-1.6zM497.8 341.9h1.6v1.6h-1.6zM497.6 349.4h1.6v1.6h-1.6zM499.2 339.5h1.6v1.6h-1.6zM503.4 336.0h1.6v1.6h-1.6zM503.9 337.5h1.6v1.6h-1.6zM505.0 352.0h1.6v1.6h-1.6zM509.5 340.0h1.6v1.6h-1.6zM509.9 341.3h1.6v1.6h-1.6zM511.0 344.2h1.6v1.6h-1.6zM511.1 352.1h1.6v1.6h-1.6zM512.8 345.1h1.6v1.6h-1.6zM514.1 343.1h1.6v1.6h-1.6zM515.4 347.2h1.6v1.6h-1.6zM518.5 347.1h1.6v1.6h-1.6zM521.5 343.2h1.6v1.6h-1.6zM524.6 345.8h1.6v1.6h-1.6zM531.9 345.8h1.6v1.6h-1.6zM531.9 350.0h1.6v1.6h-1.6zM536.9 350.8h1.6v1.6h-1.6zM539.9 345.1h1.6v1.6h-1.6zM542.7 348.3h1.6v1.6h-1.6zM545.7 345.8h1.6v1.6h-1.6zM545.3 349.9h1.6v1.6h-1.6zM546.8 347.5h1.6v1.6h-1.6z"/><path fill="#1fa81f" d="M363.9 343.8h1.6v1.6h-1.6zM373.4 339.2h1.6v1.6h-1.6zM372.8 342.1h1.6v1.6h-1.6zM374.8 336.2h1.6v1.6h-1.6zM376.4 336.9h1.6v1.6h-1.6zM376.0 347.2h1.6v1.6h-1.6zM377.4 340.0h1.6v1.6h-1.6zM378.8 341.5h1.6v1.6h-1.6zM382.2 343.8h1.6v1.6h-1.6zM386.6 343.9h1.6v1.6h-1.6zM386.8 345.2h1.6v1.6h-1.6zM389.4 348.1h1.6v1.6h-1.6zM392.9 343.7h1.6v1.6h-1.6zM395.3 345.5h1.6v1.6h-1.6zM403.1 345.2h1.6v1.6h-1.6zM406.3 344.3h1.6v1.6h-1.6zM416.4 349.0h1.6v1.6h-1.6zM418.2 341.8h1.6v1.6h-1.6zM418.3 347.8h1.6v1.6h-1.6zM419.6 336.8h1.6v1.6h-1.6zM419.8 340.2h1.6v1.6h-1.6zM419.7 351.9h1.6v1.6h-1.6zM422.8 352.1h1.6v1.6h-1.6zM425.6 347.6h1.6v1.6h-1.6zM428.5 348.1h1.6v1.6h-1.6zM434.4 344.1h1.6v1.6h-1.6zM434.6 346.1h1.6v1.6h-1.6zM437.7 350.3h1.6v1.6h-1.6zM448.2 346.0h1.6v1.6h-1.6zM454.0 351.0h1.6v1.6h-1.6zM455.5 351.1h1.6v1.6h-1.6zM456.9 339.6h1.6v1.6h-1.6zM460.2 337.4h1.6v1.6h-1.6zM463.1 339.7h1.6v1.6h-1.6zM466.1 345.8h1.6v1.6h-1.6zM467.9 345.7h1.6v1.6h-1.6zM467.9 347.2h1.6v1.6h-1.6zM467.6 351.8h1.6v1.6h-1.6zM468.9 349.8h1.6v1.6h-1.6zM470.4 340.2h1.6v1.6h-1.6zM473.7 348.8h1.6v1.6h-1.6zM473.5 351.5h1.6v1.6h-1.6zM476.8 341.5h1.6v1.6h-1.6zM479.5 348.5h1.6v1.6h-1.6zM488.8 351.4h1.6v1.6h-1.6zM491.8 345.8h1.6v1.6h-1.6zM491.5 350.1h1.6v1.6h-1.6zM498.8 351.0h1.6v1.6h-1.6zM500.7 335.3h1.6v1.6h-1.6zM500.7 350.5h1.6v1.6h-1.6zM502.1 344.0h1.6v1.6h-1.6zM503.4 345.2h1.6v1.6h-1.6zM506.4 341.2h1.6v1.6h-1.6zM508.1 350.4h1.6v1.6h-1.6zM509.5 350.3h1.6v1.6h-1.6zM511.1 341.6h1.6v1.6h-1.6zM512.6 347.7h1.6v1.6h-1.6zM515.5 350.2h1.6v1.6h-1.6zM517.2 349.2h1.6v1.6h-1.6zM521.8 349.0h1.6v1.6h-1.6zM521.7 350.7h1.6v1.6h-1.6zM523.4 349.5h1.6v1.6h-1.6zM526.0 345.9h1.6v1.6h-1.6zM530.4 347.1h1.6v1.6h-1.6zM530.7 350.1h1.6v1.6h-1.6zM535.3 347.2h1.6v1.6h-1.6zM536.5 352.0h1.6v1.6h-1.6zM538.1 344.1h1.6v1.6h-1.6zM539.8 342.3h1.6v1.6h-1.6zM539.6 343.6h1.6v1.6h-1.6zM539.4 348.1h1.6v1.6h-1.6zM542.4 343.6h1.6v1.6h-1.6zM543.9 346.3h1.6v1.6h-1.6zM545.4 338.2h1.6v1.6h-1.6z"/><path fill="#30d830" d="M364.1 344.8h1.6v1.6h-1.6zM365.9 349.3h1.6v1.6h-1.6zM371.3 350.0h1.6v1.6h-1.6zM380.4 343.2h1.6v1.6h-1.6zM388.3 351.0h1.6v1.6h-1.6zM389.8 351.3h1.6v1.6h-1.6zM391.4 344.1h1.6v1.6h-1.6zM391.0 348.7h1.6v1.6h-1.6zM397.1 346.9h1.6v1.6h-1.6zM400.1 346.0h1.6v1.6h-1.6zM404.6 344.8h1.6v1.6h-1.6zM412.2 342.4h1.6v1.6h-1.6zM411.8 343.9h1.6v1.6h-1.6zM413.7 339.0h1.6v1.6h-1.6zM414.9 335.3h1.6v1.6h-1.6zM418.1 346.2h1.6v1.6h-1.6zM421.3 349.5h1.6v1.6h-1.6zM423.9 343.6h1.6v1.6h-1.6zM428.3 350.9h1.6v1.6h-1.6zM431.8 352.2h1.6v1.6h-1.6zM434.9 349.1h1.6v1.6h-1.6zM435.8 344.4h1.6v1.6h-1.6zM436.3 351.7h1.6v1.6h-1.6zM442.1 346.8h1.6v1.6h-1.6zM446.3 350.8h1.6v1.6h-1.6zM448.2 351.9h1.6v1.6h-1.6zM449.4 350.7h1.6v1.6h-1.6zM454.4 352.3h1.6v1.6h-1.6zM455.6 340.4h1.6v1.6h-1.6zM455.8 346.2h1.6v1.6h-1.6zM457.0 347.4h1.6v1.6h-1.6zM458.7 348.8h1.6v1.6h-1.6zM458.3 350.4h1.6v1.6h-1.6zM460.0 348.2h1.6v1.6h-1.6zM461.4 351.5h1.6v1.6h-1.6zM462.8 345.9h1.6v1.6h-1.6zM463.2 347.2h1.6v1.6h-1.6zM466.2 351.8h1.6v1.6h-1.6zM467.7 341.7h1.6v1.6h-1.6zM470.5 352.5h1.6v1.6h-1.6zM472.0 346.0h1.6v1.6h-1.6zM472.1 348.9h1.6v1.6h-1.6zM479.7 346.9h1.6v1.6h-1.6zM479.4 350.0h1.6v1.6h-1.6zM482.8 349.9h1.6v1.6h-1.6zM484.2 343.0h1.6v1.6h-1.6zM484.0 344.6h1.6v1.6h-1.6zM485.9 344.6h1.6v1.6h-1.6zM485.6 350.7h1.6v1.6h-1.6zM491.8 344.3h1.6v1.6h-1.6zM493.3 348.7h1.6v1.6h-1.6zM502.4 336.7h1.6v1.6h-1.6zM501.9 338.3h1.6v1.6h-1.6zM502.4 340.9h1.6v1.6h-1.6zM502.2 351.3h1.6v1.6h-1.6zM508.2 341.2h1.6v1.6h-1.6zM508.0 343.0h1.6v1.6h-1.6zM511.2 347.6h1.6v1.6h-1.6zM517.0 347.8h1.6v1.6h-1.6zM518.3 345.6h1.6v1.6h-1.6zM521.3 346.1h1.6v1.6h-1.6zM522.9 343.9h1.6v1.6h-1.6zM524.9 343.0h1.6v1.6h-1.6zM527.4 347.6h1.6v1.6h-1.6zM532.0 351.2h1.6v1.6h-1.6zM536.4 347.5h1.6v1.6h-1.6zM542.9 340.9h1.6v1.6h-1.6zM544.1 343.4h1.6v1.6h-1.6zM543.9 352.2h1.6v1.6h-1.6zM545.4 349.0h1.6v1.6h-1.6z"/><path fill="#020a02" d="M364.1 348.0h1.6v1.6h-1.6zM365.5 346.5h1.6v1.6h-1.6zM367.1 347.1h1.6v1.6h-1.6zM367.2 350.1h1.6v1.6h-1.6zM368.5 352.4h1.6v1.6h-1.6zM373.0 346.7h1.6v1.6h-1.6zM373.1 348.0h1.6v1.6h-1.6zM376.1 344.1h1.6v1.6h-1.6zM375.8 346.0h1.6v1.6h-1.6zM380.5 348.0h1.6v1.6h-1.6zM392.6 351.6h1.6v1.6h-1.6zM394.3 346.5h1.6v1.6h-1.6zM397.1 343.7h1.6v1.6h-1.6zM398.4 345.5h1.6v1.6h-1.6zM399.9 347.3h1.6v1.6h-1.6zM401.4 351.3h1.6v1.6h-1.6zM412.1 346.8h1.6v1.6h-1.6zM413.7 337.9h1.6v1.6h-1.6zM415.2 343.2h1.6v1.6h-1.6zM416.4 337.0h1.6v1.6h-1.6zM416.7 343.0h1.6v1.6h-1.6zM416.8 345.8h1.6v1.6h-1.6zM418.3 349.5h1.6v1.6h-1.6zM419.6 345.8h1.6v1.6h-1.6zM419.5 350.7h1.6v1.6h-1.6zM421.3 348.1h1.6v1.6h-1.6zM421.2 350.9h1.6v1.6h-1.6zM422.7 344.9h1.6v1.6h-1.6zM422.7 347.6h1.6v1.6h-1.6zM425.6 352.4h1.6v1.6h-1.6zM427.1 347.1h1.6v1.6h-1.6zM428.5 343.5h1.6v1.6h-1.6zM428.4 346.2h1.6v1.6h-1.6zM434.7 342.6h1.6v1.6h-1.6zM436.1 348.8h1.6v1.6h-1.6zM439.2 347.9h1.6v1.6h-1.6zM440.6 345.1h1.6v1.6h-1.6zM443.4 349.3h1.6v1.6h-1.6zM443.4 351.2h1.6v1.6h-1.6zM445.0 349.9h1.6v1.6h-1.6zM446.5 347.6h1.6v1.6h-1.6zM451.4 348.7h1.6v1.6h-1.6zM452.6 344.8h1.6v1.6h-1.6zM452.7 347.8h1.6v1.6h-1.6zM455.4 344.8h1.6v1.6h-1.6zM457.3 350.6h1.6v1.6h-1.6zM458.5 334.8h1.6v1.6h-1.6zM458.7 351.6h1.6v1.6h-1.6zM459.8 349.5h1.6v1.6h-1.6zM461.6 347.0h1.6v1.6h-1.6zM463.3 341.5h1.6v1.6h-1.6zM464.7 340.6h1.6v1.6h-1.6zM464.9 343.9h1.6v1.6h-1.6zM466.0 342.4h1.6v1.6h-1.6zM470.6 341.7h1.6v1.6h-1.6zM473.5 344.3h1.6v1.6h-1.6zM476.7 343.1h1.6v1.6h-1.6zM478.2 343.5h1.6v1.6h-1.6zM481.0 344.6h1.6v1.6h-1.6zM481.4 347.4h1.6v1.6h-1.6zM484.0 345.9h1.6v1.6h-1.6zM483.8 349.0h1.6v1.6h-1.6zM485.4 347.9h1.6v1.6h-1.6zM490.0 344.0h1.6v1.6h-1.6zM490.1 351.2h1.6v1.6h-1.6zM493.1 350.4h1.6v1.6h-1.6zM496.0 347.2h1.6v1.6h-1.6zM497.4 343.7h1.6v1.6h-1.6zM498.9 337.6h1.6v1.6h-1.6zM498.9 343.8h1.6v1.6h-1.6zM499.4 345.2h1.6v1.6h-1.6zM499.3 349.9h1.6v1.6h-1.6zM500.4 338.2h1.6v1.6h-1.6zM508.2 347.1h1.6v1.6h-1.6zM507.9 351.4h1.6v1.6h-1.6zM509.3 347.3h1.6v1.6h-1.6zM510.9 346.0h1.6v1.6h-1.6zM510.9 350.6h1.6v1.6h-1.6zM512.8 350.8h1.6v1.6h-1.6zM514.4 345.8h1.6v1.6h-1.6zM514.4 350.1h1.6v1.6h-1.6zM515.5 341.2h1.6v1.6h-1.6zM515.8 343.2h1.6v1.6h-1.6zM518.6 348.5h1.6v1.6h-1.6zM520.1 348.8h1.6v1.6h-1.6zM524.6 347.6h1.6v1.6h-1.6zM526.0 349.4h1.6v1.6h-1.6zM526.3 350.3h1.6v1.6h-1.6zM528.9 349.9h1.6v1.6h-1.6zM530.4 345.4h1.6v1.6h-1.6zM530.5 348.3h1.6v1.6h-1.6zM533.5 345.4h1.6v1.6h-1.6zM533.5 346.8h1.6v1.6h-1.6zM537.9 345.6h1.6v1.6h-1.6zM540.9 351.4h1.6v1.6h-1.6zM542.6 339.0h1.6v1.6h-1.6zM542.4 342.3h1.6v1.6h-1.6zM542.6 345.6h1.6v1.6h-1.6zM542.5 349.8h1.6v1.6h-1.6zM542.9 351.4h1.6v1.6h-1.6zM544.4 349.6h1.6v1.6h-1.6z"/><path fill="#25c025" d="M364.4 349.8h1.6v1.6h-1.6zM368.5 347.5h1.6v1.6h-1.6zM370.1 343.2h1.6v1.6h-1.6zM370.4 349.1h1.6v1.6h-1.6zM371.8 338.1h1.6v1.6h-1.6zM371.6 340.0h1.6v1.6h-1.6zM371.5 344.3h1.6v1.6h-1.6zM371.7 348.7h1.6v1.6h-1.6zM373.0 334.5h1.6v1.6h-1.6zM376.2 339.9h1.6v1.6h-1.6zM376.0 351.5h1.6v1.6h-1.6zM378.8 345.7h1.6v1.6h-1.6zM383.3 351.0h1.6v1.6h-1.6zM385.2 348.4h1.6v1.6h-1.6zM392.6 348.5h1.6v1.6h-1.6zM403.4 350.9h1.6v1.6h-1.6zM407.5 345.6h1.6v1.6h-1.6zM410.6 345.1h1.6v1.6h-1.6zM412.2 349.7h1.6v1.6h-1.6zM413.3 349.5h1.6v1.6h-1.6zM414.8 340.1h1.6v1.6h-1.6zM418.2 337.2h1.6v1.6h-1.6zM421.1 343.7h1.6v1.6h-1.6zM420.9 345.3h1.6v1.6h-1.6zM422.9 343.3h1.6v1.6h-1.6zM430.1 341.9h1.6v1.6h-1.6zM430.1 349.2h1.6v1.6h-1.6zM434.5 347.5h1.6v1.6h-1.6zM436.4 343.2h1.6v1.6h-1.6zM436.3 346.2h1.6v1.6h-1.6zM440.9 351.2h1.6v1.6h-1.6zM445.0 351.4h1.6v1.6h-1.6zM446.6 346.6h1.6v1.6h-1.6zM454.3 344.7h1.6v1.6h-1.6zM455.6 343.4h1.6v1.6h-1.6zM457.2 337.1h1.6v1.6h-1.6zM456.9 348.9h1.6v1.6h-1.6zM460.0 340.4h1.6v1.6h-1.6zM461.6 339.3h1.6v1.6h-1.6zM463.3 338.2h1.6v1.6h-1.6zM463.0 344.4h1.6v1.6h-1.6zM468.9 348.2h1.6v1.6h-1.6zM470.3 343.2h1.6v1.6h-1.6zM472.0 350.4h1.6v1.6h-1.6zM478.1 346.6h1.6v1.6h-1.6zM477.8 348.0h1.6v1.6h-1.6zM482.4 345.4h1.6v1.6h-1.6zM487.2 352.2h1.6v1.6h-1.6zM499.1 348.1h1.6v1.6h-1.6zM503.8 343.5h1.6v1.6h-1.6zM504.9 348.8h1.6v1.6h-1.6zM506.5 339.8h1.6v1.6h-1.6zM507.9 344.1h1.6v1.6h-1.6zM509.8 343.1h1.6v1.6h-1.6zM509.3 344.7h1.6v1.6h-1.6zM509.9 345.9h1.6v1.6h-1.6zM512.8 343.2h1.6v1.6h-1.6zM515.4 349.3h1.6v1.6h-1.6zM521.3 351.8h1.6v1.6h-1.6zM524.4 352.0h1.6v1.6h-1.6zM527.9 344.6h1.6v1.6h-1.6zM539.8 346.4h1.6v1.6h-1.6zM541.1 345.3h1.6v1.6h-1.6zM541.2 349.9h1.6v1.6h-1.6zM545.7 339.7h1.6v1.6h-1.6zM545.5 343.9h1.6v1.6h-1.6zM545.7 351.5h1.6v1.6h-1.6zM547.2 345.9h1.6v1.6h-1.6zM547.1 349.9h1.6v1.6h-1.6z"/><path fill="#030303" d="M365.7 343.3h1.6v1.6h-1.6zM369.8 352.3h1.6v1.6h-1.6zM373.1 345.5h1.6v1.6h-1.6zM376.3 341.0h1.6v1.6h-1.6zM379.0 347.1h1.6v1.6h-1.6zM381.9 345.6h1.6v1.6h-1.6zM385.4 343.9h1.6v1.6h-1.6zM385.0 349.9h1.6v1.6h-1.6zM385.2 351.3h1.6v1.6h-1.6zM386.3 349.6h1.6v1.6h-1.6zM389.9 343.9h1.6v1.6h-1.6zM392.8 345.4h1.6v1.6h-1.6zM395.4 348.2h1.6v1.6h-1.6zM397.3 345.5h1.6v1.6h-1.6zM399.9 344.7h1.6v1.6h-1.6zM401.7 343.9h1.6v1.6h-1.6zM404.5 349.4h1.6v1.6h-1.6zM404.9 351.1h1.6v1.6h-1.6zM405.8 350.5h1.6v1.6h-1.6zM407.6 347.6h1.6v1.6h-1.6zM409.3 351.5h1.6v1.6h-1.6zM413.4 346.9h1.6v1.6h-1.6zM414.8 347.5h1.6v1.6h-1.6zM415.0 348.7h1.6v1.6h-1.6zM418.3 343.4h1.6v1.6h-1.6zM418.3 350.6h1.6v1.6h-1.6zM424.0 345.3h1.6v1.6h-1.6zM427.2 348.5h1.6v1.6h-1.6zM429.9 343.3h1.6v1.6h-1.6zM429.8 344.8h1.6v1.6h-1.6zM431.5 347.8h1.6v1.6h-1.6zM438.8 346.3h1.6v1.6h-1.6zM441.9 351.3h1.6v1.6h-1.6zM445.2 347.9h1.6v1.6h-1.6zM446.3 352.4h1.6v1.6h-1.6zM454.1 346.3h1.6v1.6h-1.6zM461.8 345.5h1.6v1.6h-1.6zM464.3 346.6h1.6v1.6h-1.6zM466.0 350.1h1.6v1.6h-1.6zM467.8 339.7h1.6v1.6h-1.6zM472.1 352.0h1.6v1.6h-1.6zM475.3 343.3h1.6v1.6h-1.6zM476.9 346.4h1.6v1.6h-1.6zM482.4 347.3h1.6v1.6h-1.6zM484.2 347.5h1.6v1.6h-1.6zM490.0 347.2h1.6v1.6h-1.6zM491.9 352.0h1.6v1.6h-1.6zM494.8 344.5h1.6v1.6h-1.6zM496.3 351.6h1.6v1.6h-1.6zM499.1 346.7h1.6v1.6h-1.6zM500.9 342.7h1.6v1.6h-1.6zM500.8 344.4h1.6v1.6h-1.6zM500.7 347.2h1.6v1.6h-1.6zM500.4 351.6h1.6v1.6h-1.6zM503.4 340.8h1.6v1.6h-1.6zM503.4 351.2h1.6v1.6h-1.6zM506.7 345.7h1.6v1.6h-1.6zM506.3 348.7h1.6v1.6h-1.6zM508.1 345.5h1.6v1.6h-1.6zM510.9 349.0h1.6v1.6h-1.6zM514.3 351.6h1.6v1.6h-1.6zM515.6 346.3h1.6v1.6h-1.6zM516.9 341.9h1.6v1.6h-1.6zM517.0 343.1h1.6v1.6h-1.6zM516.8 346.7h1.6v1.6h-1.6zM522.9 345.4h1.6v1.6h-1.6zM523.4 348.4h1.6v1.6h-1.6zM522.9 351.0h1.6v1.6h-1.6zM526.4 344.7h1.6v1.6h-1.6zM530.6 343.7h1.6v1.6h-1.6zM530.4 351.4h1.6v1.6h-1.6zM539.9 338.9h1.6v1.6h-1.6zM541.1 336.4h1.6v1.6h-1.6zM542.7 338.0h1.6v1.6h-1.6zM542.7 346.8h1.6v1.6h-1.6zM544.0 337.4h1.6v1.6h-1.6z"/><path fill="#063806" d="M365.8 347.6h1.6v1.6h-1.6zM370.3 348.0h1.6v1.6h-1.6zM374.7 349.8h1.6v1.6h-1.6zM377.6 338.9h1.6v1.6h-1.6zM378.9 342.9h1.6v1.6h-1.6zM380.9 340.0h1.6v1.6h-1.6zM380.4 352.4h1.6v1.6h-1.6zM383.8 343.6h1.6v1.6h-1.6zM384.9 342.9h1.6v1.6h-1.6zM386.7 348.1h1.6v1.6h-1.6zM394.3 343.3h1.6v1.6h-1.6zM394.3 345.0h1.6v1.6h-1.6zM395.7 349.8h1.6v1.6h-1.6zM396.8 348.5h1.6v1.6h-1.6zM398.8 350.3h1.6v1.6h-1.6zM401.6 345.1h1.6v1.6h-1.6zM401.9 348.1h1.6v1.6h-1.6zM405.9 345.7h1.6v1.6h-1.6zM406.3 348.6h1.6v1.6h-1.6zM407.8 349.1h1.6v1.6h-1.6zM410.6 348.0h1.6v1.6h-1.6zM410.6 350.9h1.6v1.6h-1.6zM412.0 345.2h1.6v1.6h-1.6zM413.5 340.7h1.6v1.6h-1.6zM413.5 342.0h1.6v1.6h-1.6zM414.9 352.3h1.6v1.6h-1.6zM419.7 338.4h1.6v1.6h-1.6zM419.9 343.0h1.6v1.6h-1.6zM424.1 346.9h1.6v1.6h-1.6zM427.2 350.1h1.6v1.6h-1.6zM431.8 349.1h1.6v1.6h-1.6zM433.0 347.8h1.6v1.6h-1.6zM437.3 348.9h1.6v1.6h-1.6zM438.9 343.4h1.6v1.6h-1.6zM440.3 343.9h1.6v1.6h-1.6zM441.8 349.4h1.6v1.6h-1.6zM444.9 346.8h1.6v1.6h-1.6zM448.2 349.1h1.6v1.6h-1.6zM449.5 345.6h1.6v1.6h-1.6zM449.3 348.8h1.6v1.6h-1.6zM449.7 351.9h1.6v1.6h-1.6zM452.6 350.7h1.6v1.6h-1.6zM452.8 352.1h1.6v1.6h-1.6zM455.8 342.1h1.6v1.6h-1.6zM455.8 347.7h1.6v1.6h-1.6zM455.8 349.5h1.6v1.6h-1.6zM456.8 341.5h1.6v1.6h-1.6zM457.3 344.6h1.6v1.6h-1.6zM457.2 351.7h1.6v1.6h-1.6zM460.3 346.4h1.6v1.6h-1.6zM462.9 350.7h1.6v1.6h-1.6zM464.9 348.1h1.6v1.6h-1.6zM467.3 350.6h1.6v1.6h-1.6zM469.2 342.2h1.6v1.6h-1.6zM471.9 343.2h1.6v1.6h-1.6zM475.0 341.9h1.6v1.6h-1.6zM479.9 351.8h1.6v1.6h-1.6zM482.6 344.2h1.6v1.6h-1.6zM485.8 343.3h1.6v1.6h-1.6zM487.1 347.6h1.6v1.6h-1.6zM487.3 350.5h1.6v1.6h-1.6zM488.4 347.2h1.6v1.6h-1.6zM489.9 348.5h1.6v1.6h-1.6zM490.1 350.2h1.6v1.6h-1.6zM494.4 349.2h1.6v1.6h-1.6zM496.0 345.7h1.6v1.6h-1.6zM497.9 346.6h1.6v1.6h-1.6zM497.8 350.9h1.6v1.6h-1.6zM502.2 339.4h1.6v1.6h-1.6zM502.2 345.4h1.6v1.6h-1.6zM504.8 341.6h1.6v1.6h-1.6zM505.3 347.2h1.6v1.6h-1.6zM506.3 351.8h1.6v1.6h-1.6zM515.7 344.4h1.6v1.6h-1.6zM518.4 344.2h1.6v1.6h-1.6zM518.7 350.2h1.6v1.6h-1.6zM520.2 352.0h1.6v1.6h-1.6zM521.9 344.6h1.6v1.6h-1.6zM521.3 347.6h1.6v1.6h-1.6zM524.6 348.8h1.6v1.6h-1.6zM526.4 343.2h1.6v1.6h-1.6zM527.7 350.6h1.6v1.6h-1.6zM532.1 347.2h1.6v1.6h-1.6zM533.5 348.3h1.6v1.6h-1.6zM533.9 350.1h1.6v1.6h-1.6zM533.5 351.6h1.6v1.6h-1.6zM541.2 341.2h1.6v1.6h-1.6zM541.4 342.6h1.6v1.6h-1.6z"/><path fill="#041f04" d="M365.5 350.5h1.6v1.6h-1.6zM368.8 349.1h1.6v1.6h-1.6zM371.6 341.2h1.6v1.6h-1.6zM371.4 342.9h1.6v1.6h-1.6zM374.5 345.4h1.6v1.6h-1.6zM374.4 346.5h1.6v1.6h-1.6zM377.6 350.4h1.6v1.6h-1.6zM379.3 349.1h1.6v1.6h-1.6zM380.8 350.4h1.6v1.6h-1.6zM383.7 349.5h1.6v1.6h-1.6zM389.9 342.0h1.6v1.6h-1.6zM391.3 345.6h1.6v1.6h-1.6zM394.1 351.0h1.6v1.6h-1.6zM395.6 347.1h1.6v1.6h-1.6zM395.7 351.5h1.6v1.6h-1.6zM398.4 344.1h1.6v1.6h-1.6zM400.4 351.8h1.6v1.6h-1.6zM401.6 349.8h1.6v1.6h-1.6zM402.8 347.8h1.6v1.6h-1.6zM405.9 347.6h1.6v1.6h-1.6zM407.8 352.0h1.6v1.6h-1.6zM413.3 343.9h1.6v1.6h-1.6zM415.4 344.5h1.6v1.6h-1.6zM416.5 335.5h1.6v1.6h-1.6zM416.8 341.4h1.6v1.6h-1.6zM416.6 351.9h1.6v1.6h-1.6zM417.9 345.2h1.6v1.6h-1.6zM422.6 349.4h1.6v1.6h-1.6zM425.5 343.0h1.6v1.6h-1.6zM425.9 344.9h1.6v1.6h-1.6zM429.9 350.9h1.6v1.6h-1.6zM430.2 352.5h1.6v1.6h-1.6zM431.8 341.8h1.6v1.6h-1.6zM431.5 344.9h1.6v1.6h-1.6zM433.3 349.3h1.6v1.6h-1.6zM433.0 350.6h1.6v1.6h-1.6zM433.2 352.0h1.6v1.6h-1.6zM434.6 351.5h1.6v1.6h-1.6zM436.4 350.4h1.6v1.6h-1.6zM438.9 344.6h1.6v1.6h-1.6zM441.8 348.1h1.6v1.6h-1.6zM446.7 344.8h1.6v1.6h-1.6zM446.6 349.4h1.6v1.6h-1.6zM451.1 346.9h1.6v1.6h-1.6zM450.9 349.8h1.6v1.6h-1.6zM458.4 339.3h1.6v1.6h-1.6zM458.6 342.5h1.6v1.6h-1.6zM458.4 344.3h1.6v1.6h-1.6zM458.4 345.8h1.6v1.6h-1.6zM460.1 339.3h1.6v1.6h-1.6zM460.2 341.9h1.6v1.6h-1.6zM459.9 351.2h1.6v1.6h-1.6zM461.4 340.8h1.6v1.6h-1.6zM461.9 349.8h1.6v1.6h-1.6zM463.1 343.2h1.6v1.6h-1.6zM466.3 341.3h1.6v1.6h-1.6zM470.9 344.6h1.6v1.6h-1.6zM470.7 346.1h1.6v1.6h-1.6zM470.5 349.2h1.6v1.6h-1.6zM473.9 347.1h1.6v1.6h-1.6zM475.0 350.8h1.6v1.6h-1.6zM476.8 349.0h1.6v1.6h-1.6zM476.8 350.6h1.6v1.6h-1.6zM481.0 343.2h1.6v1.6h-1.6zM481.0 348.9h1.6v1.6h-1.6zM481.0 351.8h1.6v1.6h-1.6zM485.6 352.0h1.6v1.6h-1.6zM494.4 352.4h1.6v1.6h-1.6zM496.4 348.3h1.6v1.6h-1.6zM505.4 343.1h1.6v1.6h-1.6zM505.3 344.4h1.6v1.6h-1.6zM508.1 348.9h1.6v1.6h-1.6zM509.8 349.0h1.6v1.6h-1.6zM524.7 344.3h1.6v1.6h-1.6zM527.4 345.8h1.6v1.6h-1.6zM529.3 344.2h1.6v1.6h-1.6zM529.2 345.7h1.6v1.6h-1.6zM529.3 348.4h1.6v1.6h-1.6zM538.1 347.3h1.6v1.6h-1.6zM538.1 349.9h1.6v1.6h-1.6zM539.5 340.3h1.6v1.6h-1.6zM541.1 338.3h1.6v1.6h-1.6zM544.4 344.6h1.6v1.6h-1.6zM544.2 347.8h1.6v1.6h-1.6zM544.2 350.9h1.6v1.6h-1.6z"/><path fill="#0b4a0b" d="M365.9 352.1h1.6v1.6h-1.6zM367.0 351.5h1.6v1.6h-1.6zM368.4 345.9h1.6v1.6h-1.6zM373.0 343.9h1.6v1.6h-1.6zM374.8 343.8h1.6v1.6h-1.6zM374.4 351.4h1.6v1.6h-1.6zM376.4 337.9h1.6v1.6h-1.6zM376.4 342.9h1.6v1.6h-1.6zM376.1 348.9h1.6v1.6h-1.6zM379.1 350.4h1.6v1.6h-1.6zM380.7 346.4h1.6v1.6h-1.6zM380.6 349.5h1.6v1.6h-1.6zM382.4 340.8h1.6v1.6h-1.6zM382.4 348.5h1.6v1.6h-1.6zM382.2 350.2h1.6v1.6h-1.6zM383.6 348.2h1.6v1.6h-1.6zM384.8 345.8h1.6v1.6h-1.6zM388.2 346.4h1.6v1.6h-1.6zM389.5 346.9h1.6v1.6h-1.6zM391.2 350.5h1.6v1.6h-1.6zM397.3 351.7h1.6v1.6h-1.6zM400.0 348.9h1.6v1.6h-1.6zM401.3 347.0h1.6v1.6h-1.6zM404.6 346.5h1.6v1.6h-1.6zM410.5 346.4h1.6v1.6h-1.6zM410.8 349.5h1.6v1.6h-1.6zM428.8 341.8h1.6v1.6h-1.6zM437.6 344.3h1.6v1.6h-1.6zM446.5 343.4h1.6v1.6h-1.6zM469.0 346.7h1.6v1.6h-1.6zM475.4 347.7h1.6v1.6h-1.6zM478.3 345.0h1.6v1.6h-1.6zM479.6 342.8h1.6v1.6h-1.6zM479.8 345.7h1.6v1.6h-1.6zM487.4 344.6h1.6v1.6h-1.6zM487.0 345.9h1.6v1.6h-1.6zM493.0 347.0h1.6v1.6h-1.6zM494.6 347.5h1.6v1.6h-1.6zM499.3 342.0h1.6v1.6h-1.6zM500.9 341.2h1.6v1.6h-1.6zM501.9 347.1h1.6v1.6h-1.6zM503.4 338.9h1.6v1.6h-1.6zM503.8 348.1h1.6v1.6h-1.6zM503.3 349.7h1.6v1.6h-1.6zM505.3 339.8h1.6v1.6h-1.6zM506.5 347.0h1.6v1.6h-1.6zM512.6 349.2h1.6v1.6h-1.6zM514.2 344.6h1.6v1.6h-1.6zM514.1 347.4h1.6v1.6h-1.6zM514.1 348.9h1.6v1.6h-1.6zM532.0 348.4h1.6v1.6h-1.6zM535.3 350.4h1.6v1.6h-1.6zM536.6 345.9h1.6v1.6h-1.6zM538.0 342.9h1.6v1.6h-1.6zM541.0 339.6h1.6v1.6h-1.6zM540.8 343.9h1.6v1.6h-1.6zM540.9 348.2h1.6v1.6h-1.6zM543.9 338.8h1.6v1.6h-1.6zM545.7 341.1h1.6v1.6h-1.6zM545.5 342.8h1.6v1.6h-1.6zM546.9 351.4h1.6v1.6h-1.6z"/><path fill="#d02820" d="M369.8 344.7h1.2v1.2h-1.2zM371.4 351.6h1.2v1.2h-1.2zM372.9 349.9h1.2v1.2h-1.2zM374.5 339.1h1.2v1.2h-1.2zM377.6 341.5h1.2v1.2h-1.2zM377.9 345.0h1.2v1.2h-1.2zM377.5 352.0h1.2v1.2h-1.2zM379.0 344.5h1.2v1.2h-1.2zM380.6 344.5h1.2v1.2h-1.2zM386.6 351.2h1.2v1.2h-1.2zM388.3 348.9h1.2v1.2h-1.2zM392.7 349.7h1.2v1.2h-1.2zM416.3 339.8h1.2v1.2h-1.2zM424.2 342.3h1.2v1.2h-1.2zM451.0 351.7h1.2v1.2h-1.2zM457.4 345.7h1.2v1.2h-1.2zM460.4 343.7h1.2v1.2h-1.2zM468.9 343.9h1.2v1.2h-1.2zM474.8 346.2h1.2v1.2h-1.2zM476.4 352.1h1.2v1.2h-1.2zM478.1 349.5h1.2v1.2h-1.2zM497.4 345.1h1.2v1.2h-1.2zM500.5 345.8h1.2v1.2h-1.2zM512.7 346.4h1.2v1.2h-1.2zM515.5 352.3h1.2v1.2h-1.2zM520.2 350.0h1.2v1.2h-1.2zM539.8 349.3h1.2v1.2h-1.2zM539.7 350.8h1.2v1.2h-1.2zM540.8 346.8h1.2v1.2h-1.2zM542.7 336.3h1.2v1.2h-1.2zM547.0 344.3h1.2v1.2h-1.2z"/><rect x="364.1" y="351.7" width="183.9" height="1.1" fill="#c4c4c4"/><rect x="541.0" y="350.59999999999997" width="6" height="1.8" fill="#f4f4f4"/><text x="358.90000000000003" y="297.0" font-size="5.6" font-weight="bold" fill="#e62a20" font-family="Liberation Sans, sans-serif" text-anchor="end">200</text><rect x="360.3" y="294.3" width="3.3" height="0.9" fill="#a83a30"/><text x="358.90000000000003" y="311.6" font-size="5.6" font-weight="bold" fill="#e62a20" font-family="Liberation Sans, sans-serif" text-anchor="end">150</text><rect x="360.3" y="308.9" width="3.3" height="0.9" fill="#a83a30"/><text x="358.90000000000003" y="326.3" font-size="5.6" font-weight="bold" fill="#e62a20" font-family="Liberation Sans, sans-serif" text-anchor="end">100</text><rect x="360.3" y="323.5" width="3.3" height="0.9" fill="#a83a30"/><text x="358.90000000000003" y="340.9" font-size="5.6" font-weight="bold" fill="#e62a20" font-family="Liberation Sans, sans-serif" text-anchor="end">50</text><rect x="360.3" y="338.1" width="3.3" height="0.9" fill="#a83a30"/><text x="358.90000000000003" y="355.5" font-size="5.6" font-weight="bold" fill="#e62a20" font-family="Liberation Sans, sans-serif" text-anchor="end">0</text><rect x="360.3" y="352.8" width="3.3" height="0.9" fill="#a83a30"/><text x="358.90000000000003" y="370.1" font-size="5.6" font-weight="bold" fill="#e62a20" font-family="Liberation Sans, sans-serif" text-anchor="end">-50</text><rect x="360.3" y="367.4" width="3.3" height="0.9" fill="#a83a30"/><text x="358.90000000000003" y="384.7" font-size="5.6" font-weight="bold" fill="#e62a20" font-family="Liberation Sans, sans-serif" text-anchor="end">-100</text><rect x="360.3" y="382.0" width="3.3" height="0.9" fill="#a83a30"/><rect x="361.90000000000003" y="294.3" width="1.7" height="0.9" fill="#a83a30" opacity=".9"/><rect x="361.90000000000003" y="297.2" width="1.7" height="0.9" fill="#a83a30" opacity=".9"/><rect x="361.90000000000003" y="300.2" width="1.7" height="0.9" fill="#a83a30" opacity=".9"/><rect x="361.90000000000003" y="303.1" width="1.7" height="0.9" fill="#a83a30" opacity=".9"/><rect x="361.90000000000003" y="306.0" width="1.7" height="0.9" fill="#a83a30" opacity=".9"/><rect x="361.90000000000003" y="308.9" width="1.7" height="0.9" fill="#a83a30" opacity=".9"/><rect x="361.90000000000003" y="311.9" width="1.7" height="0.9" fill="#a83a30" opacity=".9"/><rect x="361.90000000000003" y="314.8" width="1.7" height="0.9" fill="#a83a30" opacity=".9"/><rect x="361.90000000000003" y="317.7" width="1.7" height="0.9" fill="#a83a30" opacity=".9"/><rect x="361.90000000000003" y="320.6" width="1.7" height="0.9" fill="#a83a30" opacity=".9"/><rect x="361.90000000000003" y="323.6" width="1.7" height="0.9" fill="#a83a30" opacity=".9"/><rect x="361.90000000000003" y="326.5" width="1.7" height="0.9" fill="#a83a30" opacity=".9"/><rect x="361.90000000000003" y="329.4" width="1.7" height="0.9" fill="#a83a30" opacity=".9"/><rect x="361.90000000000003" y="332.3" width="1.7" height="0.9" fill="#a83a30" opacity=".9"/><rect x="361.90000000000003" y="335.3" width="1.7" height="0.9" fill="#a83a30" opacity=".9"/><rect x="361.90000000000003" y="338.2" width="1.7" height="0.9" fill="#a83a30" opacity=".9"/><rect x="361.90000000000003" y="341.1" width="1.7" height="0.9" fill="#a83a30" opacity=".9"/><rect x="361.90000000000003" y="344.0" width="1.7" height="0.9" fill="#a83a30" opacity=".9"/><rect x="361.90000000000003" y="347.0" width="1.7" height="0.9" fill="#a83a30" opacity=".9"/><rect x="361.90000000000003" y="349.9" width="1.7" height="0.9" fill="#a83a30" opacity=".9"/><rect x="361.90000000000003" y="352.8" width="1.7" height="0.9" fill="#a83a30" opacity=".9"/><rect x="361.90000000000003" y="355.7" width="1.7" height="0.9" fill="#a83a30" opacity=".9"/><rect x="361.90000000000003" y="358.6" width="1.7" height="0.9" fill="#a83a30" opacity=".9"/><rect x="361.90000000000003" y="361.6" width="1.7" height="0.9" fill="#a83a30" opacity=".9"/><rect x="361.90000000000003" y="364.5" width="1.7" height="0.9" fill="#a83a30" opacity=".9"/><rect x="361.90000000000003" y="367.4" width="1.7" height="0.9" fill="#a83a30" opacity=".9"/><rect x="361.90000000000003" y="370.3" width="1.7" height="0.9" fill="#a83a30" opacity=".9"/><rect x="361.90000000000003" y="373.3" width="1.7" height="0.9" fill="#a83a30" opacity=".9"/><rect x="361.90000000000003" y="376.2" width="1.7" height="0.9" fill="#a83a30" opacity=".9"/><rect x="361.90000000000003" y="379.1" width="1.7" height="0.9" fill="#a83a30" opacity=".9"/><rect x="361.90000000000003" y="382.0" width="1.7" height="0.9" fill="#a83a30" opacity=".9"/><rect x="361.90000000000003" y="385.0" width="1.7" height="0.9" fill="#a83a30" opacity=".9"/><rect x="361.90000000000003" y="387.9" width="1.7" height="0.9" fill="#a83a30" opacity=".9"/><text x="363.6" y="399.8" font-size="5.6" font-weight="bold" fill="#e62a20" font-family="Liberation Sans, sans-serif" text-anchor="middle">0</text><text x="409.6" y="399.8" font-size="5.6" font-weight="bold" fill="#e62a20" font-family="Liberation Sans, sans-serif" text-anchor="middle">1</text><text x="455.6" y="399.8" font-size="5.6" font-weight="bold" fill="#e62a20" font-family="Liberation Sans, sans-serif" text-anchor="middle">2</text><text x="501.5" y="399.8" font-size="5.6" font-weight="bold" fill="#e62a20" font-family="Liberation Sans, sans-serif" text-anchor="middle">3</text><text x="547.5" y="399.8" font-size="5.6" font-weight="bold" fill="#e62a20" font-family="Liberation Sans, sans-serif" text-anchor="middle">4</text><rect x="363.8" y="390.3" width="0.9" height="3.6" fill="#a83a30" opacity="1"/><rect x="366.1" y="390.3" width="0.9" height="2.0" fill="#a83a30" opacity="1"/><rect x="368.4" y="390.3" width="0.9" height="2.0" fill="#a83a30" opacity="1"/><rect x="370.7" y="390.3" width="0.9" height="2.0" fill="#a83a30" opacity="1"/><rect x="373.0" y="390.3" width="0.9" height="2.0" fill="#a83a30" opacity="1"/><rect x="375.3" y="390.3" width="0.9" height="2.0" fill="#a83a30" opacity="1"/><rect x="377.6" y="390.3" width="0.9" height="2.0" fill="#a83a30" opacity="1"/><rect x="379.9" y="390.3" width="0.9" height="2.0" fill="#a83a30" opacity="1"/><rect x="382.2" y="390.3" width="0.9" height="2.0" fill="#a83a30" opacity="1"/><rect x="384.5" y="390.3" width="0.9" height="2.0" fill="#a83a30" opacity="1"/><rect x="386.8" y="390.3" width="0.9" height="3.6" fill="#a83a30" opacity="1"/><rect x="389.1" y="390.3" width="0.9" height="2.0" fill="#a83a30" opacity="1"/><rect x="391.4" y="390.3" width="0.9" height="2.0" fill="#a83a30" opacity="1"/><rect x="393.7" y="390.3" width="0.9" height="2.0" fill="#a83a30" opacity="1"/><rect x="396.0" y="390.3" width="0.9" height="2.0" fill="#a83a30" opacity="1"/><rect x="398.3" y="390.3" width="0.9" height="2.0" fill="#a83a30" opacity="1"/><rect x="400.6" y="390.3" width="0.9" height="2.0" fill="#a83a30" opacity="1"/><rect x="402.9" y="390.3" width="0.9" height="2.0" fill="#a83a30" opacity="1"/><rect x="405.2" y="390.3" width="0.9" height="2.0" fill="#a83a30" opacity="1"/><rect x="407.5" y="390.3" width="0.9" height="2.0" fill="#a83a30" opacity="1"/><rect x="409.8" y="390.3" width="0.9" height="3.6" fill="#a83a30" opacity="1"/><rect x="412.1" y="390.3" width="0.9" height="2.0" fill="#a83a30" opacity="1"/><rect x="414.4" y="390.3" width="0.9" height="2.0" fill="#a83a30" opacity="1"/><rect x="416.7" y="390.3" width="0.9" height="2.0" fill="#a83a30" opacity="1"/><rect x="419.0" y="390.3" width="0.9" height="2.0" fill="#a83a30" opacity="1"/><rect x="421.3" y="390.3" width="0.9" height="2.0" fill="#a83a30" opacity="1"/><rect x="423.6" y="390.3" width="0.9" height="2.0" fill="#a83a30" opacity="1"/><rect x="425.9" y="390.3" width="0.9" height="2.0" fill="#a83a30" opacity="1"/><rect x="428.2" y="390.3" width="0.9" height="2.0" fill="#a83a30" opacity="1"/><rect x="430.5" y="390.3" width="0.9" height="2.0" fill="#a83a30" opacity="1"/><rect x="432.8" y="390.3" width="0.9" height="3.6" fill="#a83a30" opacity="1"/><rect x="435.1" y="390.3" width="0.9" height="2.0" fill="#a83a30" opacity="1"/><rect x="437.4" y="390.3" width="0.9" height="2.0" fill="#a83a30" opacity="1"/><rect x="439.7" y="390.3" width="0.9" height="2.0" fill="#a83a30" opacity="1"/><rect x="442.0" y="390.3" width="0.9" height="2.0" fill="#a83a30" opacity="1"/><rect x="444.3" y="390.3" width="0.9" height="2.0" fill="#a83a30" opacity="1"/><rect x="446.6" y="390.3" width="0.9" height="2.0" fill="#a83a30" opacity="1"/><rect x="448.9" y="390.3" width="0.9" height="2.0" fill="#a83a30" opacity="1"/><rect x="451.2" y="390.3" width="0.9" height="2.0" fill="#a83a30" opacity="1"/><rect x="453.5" y="390.3" width="0.9" height="2.0" fill="#a83a30" opacity="1"/><rect x="455.7" y="390.3" width="0.9" height="3.6" fill="#a83a30" opacity="1"/><rect x="458.0" y="390.3" width="0.9" height="2.0" fill="#a83a30" opacity="1"/><rect x="460.3" y="390.3" width="0.9" height="2.0" fill="#a83a30" opacity="1"/><rect x="462.6" y="390.3" width="0.9" height="2.0" fill="#a83a30" opacity="1"/><rect x="464.9" y="390.3" width="0.9" height="2.0" fill="#a83a30" opacity="1"/><rect x="467.2" y="390.3" width="0.9" height="2.0" fill="#a83a30" opacity="1"/><rect x="469.5" y="390.3" width="0.9" height="2.0" fill="#a83a30" opacity="1"/><rect x="471.8" y="390.3" width="0.9" height="2.0" fill="#a83a30" opacity="1"/><rect x="474.1" y="390.3" width="0.9" height="2.0" fill="#a83a30" opacity="1"/><rect x="476.4" y="390.3" width="0.9" height="2.0" fill="#a83a30" opacity="1"/><rect x="478.7" y="390.3" width="0.9" height="3.6" fill="#a83a30" opacity="1"/><rect x="481.0" y="390.3" width="0.9" height="2.0" fill="#a83a30" opacity="1"/><rect x="483.3" y="390.3" width="0.9" height="2.0" fill="#a83a30" opacity="1"/><rect x="485.6" y="390.3" width="0.9" height="2.0" fill="#a83a30" opacity="1"/><rect x="487.9" y="390.3" width="0.9" height="2.0" fill="#a83a30" opacity="1"/><rect x="490.2" y="390.3" width="0.9" height="2.0" fill="#a83a30" opacity="1"/><rect x="492.5" y="390.3" width="0.9" height="2.0" fill="#a83a30" opacity="1"/><rect x="494.8" y="390.3" width="0.9" height="2.0" fill="#a83a30" opacity="1"/><rect x="497.1" y="390.3" width="0.9" height="2.0" fill="#a83a30" opacity="1"/><rect x="499.4" y="390.3" width="0.9" height="2.0" fill="#a83a30" opacity="1"/><rect x="501.7" y="390.3" width="0.9" height="3.6" fill="#a83a30" opacity="1"/><rect x="504.0" y="390.3" width="0.9" height="2.0" fill="#a83a30" opacity="1"/><rect x="506.3" y="390.3" width="0.9" height="2.0" fill="#a83a30" opacity="1"/><rect x="508.6" y="390.3" width="0.9" height="2.0" fill="#a83a30" opacity="1"/><rect x="510.9" y="390.3" width="0.9" height="2.0" fill="#a83a30" opacity="1"/><rect x="513.2" y="390.3" width="0.9" height="2.0" fill="#a83a30" opacity="1"/><rect x="515.5" y="390.3" width="0.9" height="2.0" fill="#a83a30" opacity="1"/><rect x="517.8" y="390.3" width="0.9" height="2.0" fill="#a83a30" opacity="1"/><rect x="520.1" y="390.3" width="0.9" height="2.0" fill="#a83a30" opacity="1"/><rect x="522.4" y="390.3" width="0.9" height="2.0" fill="#a83a30" opacity="1"/><rect x="524.7" y="390.3" width="0.9" height="3.6" fill="#a83a30" opacity="1"/><rect x="527.0" y="390.3" width="0.9" height="2.0" fill="#a83a30" opacity="1"/><rect x="529.3" y="390.3" width="0.9" height="2.0" fill="#a83a30" opacity="1"/><rect x="531.6" y="390.3" width="0.9" height="2.0" fill="#a83a30" opacity="1"/><rect x="533.9" y="390.3" width="0.9" height="2.0" fill="#a83a30" opacity="1"/><rect x="536.2" y="390.3" width="0.9" height="2.0" fill="#a83a30" opacity="1"/><rect x="538.5" y="390.3" width="0.9" height="2.0" fill="#a83a30" opacity="1"/><rect x="540.8" y="390.3" width="0.9" height="2.0" fill="#a83a30" opacity="1"/><rect x="543.1" y="390.3" width="0.9" height="2.0" fill="#a83a30" opacity="1"/><rect x="545.4" y="390.3" width="0.9" height="2.0" fill="#a83a30" opacity="1"/><rect x="547.7" y="390.3" width="0.9" height="3.6" fill="#a83a30" opacity="1"/><defs><linearGradient id="g341285" x1="0" y1="0" x2="0" y2="1"><stop offset="0" stop-color="#ffffff"/><stop offset="0.062" stop-color="#ffffff"/><stop offset="0.064" stop-color="#ffff00"/><stop offset="0.125" stop-color="#ffff00"/><stop offset="0.127" stop-color="#ff00ff"/><stop offset="0.22" stop-color="#ff10d0"/><stop offset="0.345" stop-color="#f01020"/><stop offset="0.347" stop-color="#148a14"/><stop offset="0.55" stop-color="#10a010"/><stop offset="0.62" stop-color="#30d030"/><stop offset="0.76" stop-color="#10e010"/><stop offset="0.85" stop-color="#1040d0"/><stop offset="0.93" stop-color="#081870"/><stop offset="1" stop-color="#000000"/></linearGradient></defs><rect x="556.2" y="291" width="8" height="99.8" fill="url(#g341285)"/></svg>
<div class="a" style="left:547.3px;top:328px;width:1px;height:34px;background:repeating-linear-gradient(#b8b8b8 0 2px,#444 2px 3.5px);opacity:.75"></div>
<div class="a nv song" style="left:361.5px;top:229px;">方式:</div>
<div class="a nv" style="left:393px;top:229.4px;">PW</div>
<div class="a nv song" style="left:429px;top:229px;">深度:</div>
<div class="a nv" style="left:459.5px;top:229.4px;">70</div>
<div class="a nv" style="left:494.5px;top:229.4px;">Vp:</div>
<div class="a nv" style="left:518.5px;top:229.4px;">6</div>
<div class="a nv" style="left:361.5px;top:242.2px;">Vm:</div>
<div class="a nv" style="left:393px;top:242.2px;">12</div>
<div class="a nv" style="left:429px;top:242.2px;">Vd:</div>
<div class="a nv" style="left:459.5px;top:242.2px;">12</div>
<div class="a nv" style="left:494.5px;top:242.2px;">PI:</div>
<div class="a nv" style="left:518.5px;top:243.5px;">0.00</div>
<div class="a nv" style="left:361.5px;top:255px;">RI:</div>
<div class="a nv" style="left:393px;top:255px;">0.00</div>
<div class="a nv" style="left:429px;top:255px;">S/D:</div>
<div class="a nv" style="left:459.5px;top:255px;">0.50</div>
<div class="a nv" style="left:494.5px;top:255px;">Hr:</div>
<div class="a nv" style="left:518.5px;top:255px;">150</div>
<div class="a bl" style="left:60px;top:410px;">方式 : PW</div>
<div class="a bl" style="left:130px;top:410px;">深度:55</div>
<div class="a bl" style="left:201px;top:410px;">Vp:6</div>
<div class="a bl" style="left:60px;top:420.2px;">Vm:12</div>
<div class="a bl" style="left:130px;top:420.2px;">Vd:12</div>
<div class="a bl" style="left:201px;top:420.2px;">PI:0.00</div>
<div class="a bl" style="left:60px;top:430.3px;">RI:0.00</div>
<div class="a bl" style="left:130px;top:430.3px;">S/D:0.50</div>
<div class="a bl" style="left:201px;top:430.3px;">Hr:150</div>
<div class="a bl" style="left:364.3px;top:410px;">方式 : PW</div>
<div class="a bl" style="left:434.3px;top:410px;">深度:55</div>
<div class="a bl" style="left:505px;top:410px;">Vp:6</div>
<div class="a bl" style="left:364.3px;top:420.2px;">Vm:12</div>
<div class="a bl" style="left:434.3px;top:420.2px;">Vd:12</div>
<div class="a bl" style="left:505px;top:420.2px;">PI:0.00</div>
<div class="a bl" style="left:364.3px;top:430.3px;">RI:0.00</div>
<div class="a bl" style="left:434.3px;top:430.3px;">S/D:0.50</div>
<div class="a bl" style="left:505px;top:430.3px;">Hr:150</div></body></html>
